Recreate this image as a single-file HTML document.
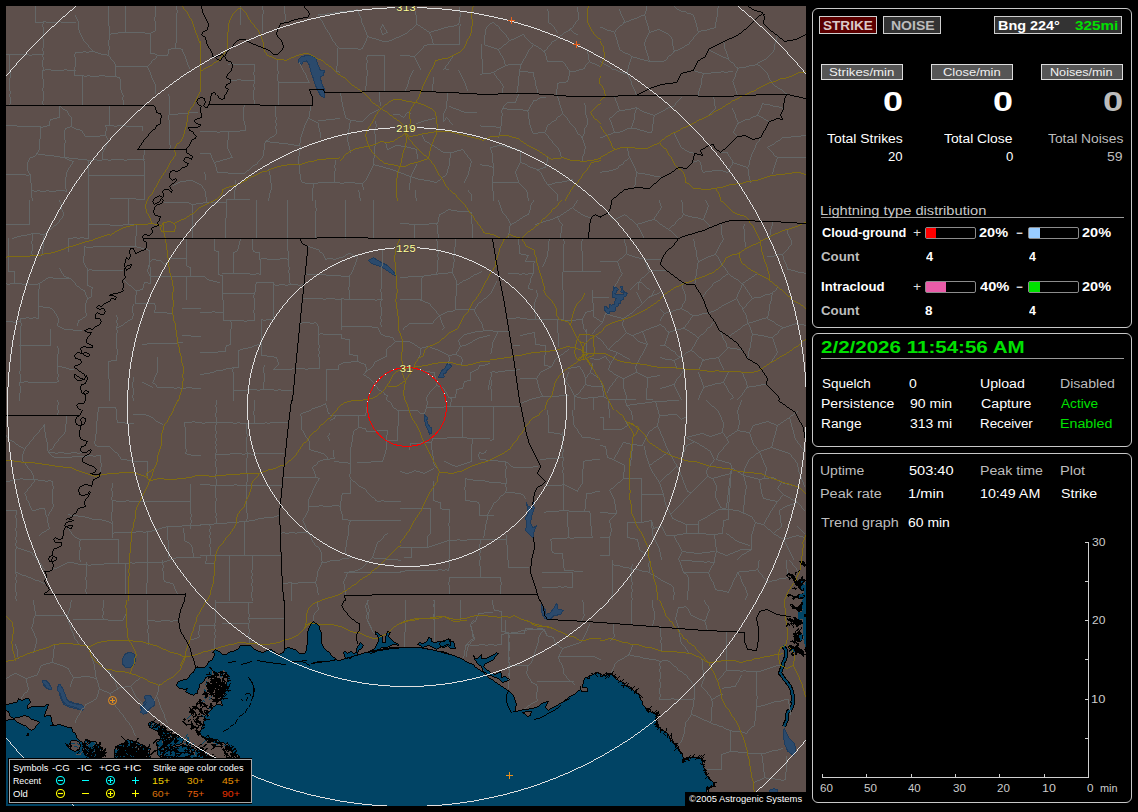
<!DOCTYPE html>
<html><head><meta charset="utf-8"><title>Lightning</title>
<style>
html,body{margin:0;padding:0;background:#000;}
body{width:1138px;height:812px;overflow:hidden;position:relative;font-family:"Liberation Sans",sans-serif;}
#map{position:absolute;left:6px;top:6px;width:800px;height:800px;overflow:hidden;background:#5d4f4b;}
#map svg{position:absolute;left:-6px;top:-6px;}

.t{position:absolute;white-space:nowrap;transform-origin:0 0;display:block;}
.pn{position:absolute;border:1px solid #c8c8c8;border-radius:6px;box-sizing:border-box;}
.bx{position:absolute;box-sizing:border-box;border:1px solid #cfcfcf;}
.bar{position:absolute;box-sizing:border-box;border:1px solid #8c8c8c;border-radius:2px;width:51px;height:12px;background:#000;}
.bar i{position:absolute;left:0;top:0;height:10px;display:block;}
.ln{position:absolute;height:1px;background:#9a9a9a;}

</style></head><body>
<div id="map">
<svg width="1138" height="812" viewBox="0 0 1138 812" shape-rendering="crispEdges" fill="none"><g fill="#014465"><path d="M5.9 705.7L7.6 704.4L11.7 703.8L14.6 702.3L16.6 702.1L18.9 698.8L22.2 700.4L25.4 698.4L28.5 698.8L30.4 702.1L28.4 704.6L27.2 705.9L27.9 708.4L32.1 706.6L35.6 706.7L38.4 706.7L41.7 706.8L44.7 706.7L46.1 704.8L48.5 704.6L47.1 708.7L45.3 712.2L44.9 716L47.8 715.8L50.6 715.7L51.2 718.6L51.6 721.3L53.1 724.6L50.9 725.8L55.7 725.3L59.7 724.2L62.2 725.8L65.6 726.9L68.3 727.7L71.5 727.3L72.1 731L75 733L76.2 737.6L79.5 740.2L82.5 742.8L83.6 745.7L84.7 749L85 752.3L85.5 754.7L88.4 756.6L90.9 759.1L91 762L241 762L241.1 760.3L239.8 757.9L239.2 756.2L237.8 754.7L236.3 755.3L233.4 754.5L232.4 752.5L231.2 750.2L230.2 749.4L230.1 747.2L229 744.3L227.3 742.8L225.2 744.5L223.4 742.8L220.9 742.9L218.8 740.8L216.7 739.4L214.6 739.8L211.4 738.3L209.2 738.4L206.4 738.4L202.5 737.1L201.6 735.1L200 732.9L201.6 729.8L201.2 727.9L202.2 725.1L203.1 722.1L204.5 719.2L204.4 716.5L206.1 714.6L207 713.2L209 711.6L211.9 709.6L212 707.7L214.4 706.2L215.7 705.2L217.6 704.7L219.5 705L222.7 705.4L221.8 702.6L220.1 699L222.8 697.6L223.4 695.9L224.3 693.6L224.6 690.7L226.1 688.6L227.4 687.7L227 684.4L226.2 682.6L227.6 680.1L227.3 677.1L227.9 675.1L226.5 672.3L223.9 672.1L222.4 671.7L218.8 672.9L216.4 674.2L214.4 674.5L213.5 675.2L212 676.2L208.2 676.8L205.2 677.5L204.9 680.9L203 682.4L199.1 684L199.1 686.4L198.7 689.7L197.6 690.5L197.7 693.3L195.7 693.9L193.6 695.2L191 694.8L188.3 693.3L185.2 691.7L187.5 688.4L183.3 689.4L181.6 689L179.2 688.5L177 685.3L177.8 682.3L180.8 680.4L182.8 681L184.4 679.7L186.8 679.8L188.9 677.8L189.3 675.1L191.8 673.6L193.7 672.5L194.6 669.5L197 667.8L197.8 666.8L197.1 667.2L200.6 667.5L204 667.7L206.6 665L208.5 661.9L211.4 660.1L213.4 657.6L214.9 653.8L213 652.1L215.1 649.8L219.3 651.2L221.1 653.7L223.8 654L226.2 654.3L227.8 653.8L230.2 651.8L233.2 651.1L235.1 650.2L238 648.9L240.3 645.9L243.5 645.9L246.3 645.3L248.4 645.1L250.8 645L253.6 648.2L255.9 649.9L258.9 651.2L263.4 652.7L266.8 650.7L271.1 649.6L275.4 652.2L277.8 653.7L279.7 654.3L284 652.1L285 648.3L289.1 647.9L291.7 648.7L295.1 649.9L296.5 650.9L298.6 653L300.9 653.3L304.2 653.7L306.1 650.5L306.8 646.6L308 643.9L307.5 641.3L307.5 638L307 635.3L307.4 631.9L308.7 629.5L309.2 626.2L311 624.4L313 621.5L317.2 624.1L319.7 626.3L319.7 629.4L320.1 631.6L321.4 633.9L321.5 637.4L321.6 639.8L321.3 642.1L322.3 645.2L323.5 647.4L326.8 650.4L330 652.7L331.6 655.4L335.1 658.2L334.5 660L339.3 660.1L342.8 659.3L346.1 658.5L349.3 657.7L352.8 656.6L356 655.8L359.2 654.7L362.8 653.6L366.1 652.8L369.4 652L372.3 651.6L375.9 650.7L378.9 649.9L382.4 649.5L385.9 649.1L388.8 648.7L392.2 648.3L395.8 647.9L398.9 647.7L402.3 647.7L405.2 647.1L408.8 647.2L412.1 647.2L415.5 647.6L418.4 647.8L421.8 648L425.2 648.4L428.4 649.2L431.9 649.2L435.5 650.1L438.8 651.4L442.4 652L446.1 653L450 654L440 651.6L443.4 652.4L447.2 653.4L450.6 654.7L453.7 655.9L456 656.7L458.4 657.4L461 658.9L463.1 659.6L465.9 661.4L468.2 662.1L470.8 663.2L473.1 664.8L474.9 666.1L477.8 668.8L480.5 670.7L483.7 673L486.4 675.2L488.9 677.4L492.2 679.7L494.7 681.9L497.6 683.8L500.7 685.9L503.1 687.5L506.1 689.9L509.1 691.5L512.8 694.2L513.7 696.8L514.9 698.7L515.2 701.7L516.1 704.4L515.9 707L515.4 710.1L513.2 711.4L516.9 711L520.1 710.1L523.3 709.8L527.3 709.7L530.2 708.8L532.7 708.7L535.2 707.8L538.2 706.9L540.9 704.6L543.7 702L548.2 701.1L546.5 704.3L545.5 707.5L548.5 710.3L552.3 707.8L555.2 706.4L558.5 704.1L562.1 702L564.2 700.8L566.6 699.2L569 697.3L572.1 695.3L575.3 693.3L577.8 691.4L580.6 689.6L580 686.3L580.7 689.5L581.5 691.9L583.9 691.6L587.5 691.9L587.7 688.2L585.2 687.8L582.6 687.7L582.8 684.7L583 682.4L583.8 680.9L585.8 678L587.6 677.1L589.3 676L591.7 675.3L593.6 674.7L595.8 673.7L598.2 672.6L599.3 673.5L602.2 675.5L604.3 675.5L607.7 674.8L610.5 674.2L612.4 675L614.1 676.8L616 678.7L618.4 680.3L620.2 681.1L621 682L623.4 683.7L624.8 685.5L627.3 686.6L628.9 687L630.7 688.1L632.9 689.2L634.7 691.3L637 692.2L638 693.8L639.8 697.2L640.7 699.5L641.5 700.5L642.7 702.9L642.7 705L644.1 706.6L645.6 708.2L647.1 709.7L648.5 710.1L650.5 711.3L652.8 712.3L654.9 713.7L657.5 714.4L656.1 717.4L656.3 720.9L657.2 722.6L658 724.2L658.3 726.4L660 727.5L661.7 729.7L663.4 730.8L664 732.6L666 732.8L667.8 734.6L669 736.2L669.9 738.7L671.6 740.1L672.9 742.4L674.5 743.8L675.5 745.3L676.6 746.7L678.2 748.3L679.8 750.6L681.2 752.3L682.3 755.2L683 758.8L683.3 760.7L682.7 762.8L683.7 760.8L685.8 758.4L687.3 757.9L690.9 757.6L693.9 757.9L696 757L698.8 758.4L701.1 758.8L702.1 760.3L702.3 762.8L702.9 763.9L703.8 766.3L704 769.7L705.3 770.9L705.2 773.2L706.6 775.2L708.3 776.9L709.8 778.4L710.9 779.9L712.6 781.5L714.4 782.6L713 785.2L712.8 786.8L710.1 787.7L707.9 787.6L707.5 789.8L705.9 792.3L706.1 793.9L706.7 796.6L706.5 798.2L706.5 800.9L706.6 802.9L706.5 805.7L706.2 807.6L706 820L0 820L0 705.7Z"/><path d="M114.7 757.8L114.3 754.6L114.1 750.9L115.6 747.1L119.8 744.8L122.7 743.3L125.3 742.1L127.6 739.9L131.5 741L134.1 743.5L136.7 744.7L139.6 745.8L142.6 746.2L144.6 747.6L147.5 747.6L150.4 748.9L149.7 751.6L149.7 754.5L150.1 757.5L147.6 757.4L144.7 758L142.3 757.7L140 757.7L137.3 757.4L135 758.1L132.7 757.9L129.7 757.7L127.4 757.9L124.5 757.6L122.1 757.8L120 757.8L116.8 758Z"/><path d="M84.4 741.9L87.4 739.6L91.1 741.7L95.3 741.6L97.8 744.7L100.5 748.9L103.9 750.4L105.6 753.6L103.3 755.2L101.8 757.4L99.1 756.6L96.6 756.5L92 757.7L89.6 756.8L87 756.3L84.4 754.2L82.5 749.8L83.3 746.3Z"/><path d="M130 741.3L132.5 740.3L136.5 742.8L139.2 743.8L142.6 745.1L146.4 748L147.6 752.1L146.7 755.3L145.9 757.8L143.2 757.8L140.8 758.3L138 757.7L135.2 758.4L132.4 758.1L129.9 758.1L129.9 755.3L130 752.5L130.3 749.7L129.7 746.5L130.4 744.1Z"/><path d="M149 723.7L151.6 722L156 723.5L159.4 725.1L162.2 728.1L166.4 730.3L170.6 733.2L173.1 734.7L176.3 735.9L179 737L181.8 737.7L184.1 739.9L181.2 743L177.5 744.4L174.8 745.6L171.8 746.4L169.3 749.1L165.3 752.2L162.9 754.5L160.8 755.9L160.1 757.7L157 754.9L157.4 751.5L157.8 748.1L157.1 745.6L156.9 742.3L159.7 740.2L161.3 735.8L159.1 733.6L157.2 731.7L152.7 728.8L150 727.2Z"/><path d="M161.2 758L162.5 755.8L164.2 753.5L166.6 751.5L169 749.4L172.8 748.3L175.7 746.6L178.5 746.5L181.6 745.5L184.6 745.7L187 746.1L189.3 746.3L192.4 747.7L194.8 749.2L197.4 750.8L200.4 752.4L203.2 753.6L205.9 755L208.6 755.7L211.7 757.3L214.3 758.1L211.3 757.8L208.8 757.6L206.7 757.9L204.2 757.9L201.8 758.2L198.5 757.7L196.7 757.9L194.3 757.9L191 758.1L189.1 757.8L186 757.8L184.2 758.2L181 757.8L178.5 757.6L176.5 757.7L173.8 757.9L171 758.2L168.4 758.1L165.9 757.9L163.5 757.8Z"/><path d="M343.5 652.1L345.8 651L347.6 653.8L351.1 651L353 653.5L356.3 652.5L356.8 649L358.2 646L360.4 642.6L363.6 645.1L362.2 647.2L359 650.1L357.8 654L355.3 655.7L352.8 656.9L350.1 658.3L347.6 657.9L345.1 658.4L344.1 655.4Z"/><path d="M368.5 651.4L371.5 650.4L374.1 648.4L375.9 646.1L377.8 643.2L378.2 640.8L378.9 638.2L377.1 635.9L376 634.2L375.8 631.8L379 633.3L382.6 636.3L382.5 639.3L382.8 642.1L385.2 642.7L385.4 640L385.5 636.6L386.6 634.4L387.7 631.6L390.4 632L388.7 636.8L391.2 640L394.6 642.5L397.8 643.3L398.3 645.1L395.1 644.7L392.1 644.7L389.8 646.2L386.8 647.1L384.6 647.9L382 647.9L379.1 649.8L376.5 651.1L373.5 652.4L370.8 653.3Z"/><path d="M417.3 644.2L420 642.4L423.6 643.3L426.7 641.7L428.6 637.9L431.4 638.8L431.3 642L435.8 642.7L440 641.9L442.3 641.3L444.6 640.5L447.8 639.6L450.2 639.6L450.4 641.9L450 645.1L447.6 645L444.7 645.8L442.3 646.5L439.4 647L436 649.1L432.1 647L428.8 645.7L425.8 646.5L422.5 647L420.2 645.3Z"/><path d="M473.7 655.1L475.5 658.4L477.9 658.1L481.2 654.1L482 658.2L486.1 658.9L490.7 657L494.2 654.4L496.2 652L498.7 653.4L495.9 656.5L493.2 659.9L489.1 661.8L485.5 663.4L483.7 666.4L486.8 669.5L488.4 670.4L490.9 672.4L492.7 673.3L495.8 674.3L497.8 673.3L500.6 671.8L501.3 674.6L501.5 677.5L505.9 676.9L509 679.3L505.7 681.5L502.3 682.1L498.2 678.8L494.2 677.7L491.8 675.9L489 675.2L486.8 673.2L484 671.2L482.9 669.3L481.2 666.9L479.3 665.2L477.9 663.1L475.2 660.5L474.1 658.3Z"/><path d="M440 641.1L444.2 641.8L448.1 638.3L449.8 641.2L453.1 641.1L454.2 645.5L455.1 648.7L450.9 648.4L447.2 645.6L443.2 647.8L440.1 646.8L439.7 643.5Z"/></g><g fill="#5d4f4b"><path d="M5.9 710.6L8.5 712L9.8 715.3L13.3 718.2L16.5 717.8L19.5 717.9L21.9 716.7L24 715.3L28.5 716.8L30.7 718.4L32.8 719.2L36.5 720.8L39.7 722L36.6 725.4L34.5 728L31 730.2L28.5 728.1L26.3 727L24.1 725.8L21.9 724.6L17.5 722.7L14.8 720L10.2 719.2L5.6 720L6 717.2L5.8 713.7Z"/><path d="M27 733.4L28.3 733.3L28 735.7L26.6 735.4Z"/><path d="M65.9 743.3L68.4 745.2L70.4 741.9L72.4 740.1L76.3 740.1L78.7 741.8L80.9 745.6L79.3 749.7L74.7 751.5L70.3 749.5L67.5 746.7Z"/><path d="M523 712.1L527.2 711.3L531.5 711.9L530.2 715.9L527.3 716L525.1 714.1Z"/></g><path fill="#014465" d="M223 673h1v1h-1zM221 674h1v1h-1zM220 676h2v1h-2zM206 681h1v1h-1zM206 683h1v1h-1zM205 684h1v1h-1zM204 689h1v1h-1zM218 689h1v1h-1zM204 690h2v1h-2zM205 691h2v1h-2zM211 696h2v1h-2zM204 697h1v1h-1zM209 697h1v1h-1zM205 698h1v1h-1zM210 698h1v1h-1zM209 699h1v1h-1zM203 700h1v1h-1zM202 701h1v1h-1zM204 701h1v1h-1zM207 707h1v1h-1zM209 708h2v1h-2zM212 709h1v1h-1zM192 714h1v1h-1zM190 715h1v1h-1zM202 715h1v1h-1zM189 716h1v1h-1zM203 716h1v1h-1zM188 717h1v1h-1zM204 717h1v1h-1zM187 718h1v1h-1zM187 734h1v1h-1zM186 735h1v1h-1zM186 736h1v1h-1zM185 737h1v1h-1zM187 737h2v1h-2zM187 738h2v1h-2zM212 738h1v1h-1zM67 739h1v1h-1zM188 739h1v1h-1zM214 739h1v1h-1zM68 740h1v1h-1zM187 740h2v1h-2zM205 740h1v1h-1zM69 741h1v1h-1zM188 741h2v1h-2zM204 741h1v1h-1zM214 741h1v1h-1zM217 741h3v1h-3zM69 742h1v1h-1zM184 742h2v1h-2zM188 742h1v1h-1zM203 742h1v1h-1zM213 742h2v1h-2zM69 743h1v1h-1zM71 743h4v1h-4zM77 743h1v1h-1zM81 743h1v1h-1zM188 743h1v1h-1zM193 743h1v1h-1zM202 743h1v1h-1zM216 743h1v1h-1zM230 743h1v1h-1zM78 744h4v1h-4zM186 744h1v1h-1zM192 744h2v1h-2zM216 744h2v1h-2zM229 744h1v1h-1zM232 744h1v1h-1zM186 745h1v1h-1zM190 745h1v1h-1zM224 745h2v1h-2zM228 745h1v1h-1zM232 745h1v1h-1zM74 746h3v1h-3zM77 747h1v1h-1zM184 747h3v1h-3zM186 748h1v1h-1zM232 748h1v1h-1zM232 749h1v1h-1zM195 750h1v1h-1zM198 750h1v1h-1zM201 750h1v1h-1zM195 751h1v1h-1zM205 752h2v1h-2zM233 752h1v1h-1zM236 752h2v1h-2zM206 753h1v1h-1zM206 754h1v1h-1zM203 759h1v1h-1zM206 759h1v1h-1zM204 760h1v1h-1zM207 760h1v1h-1zM203 761h1v1h-1z"/><path fill="#5d4f4b" d="M223 670h1v1h-1zM212 671h1v1h-1zM222 671h3v1h-3zM212 672h1v1h-1zM219 672h1v1h-1zM223 672h1v1h-1zM212 673h1v1h-1zM212 674h2v1h-2zM215 676h1v1h-1zM221 677h1v1h-1zM221 678h1v1h-1zM224 678h1v1h-1zM224 679h2v1h-2zM209 682h1v1h-1zM210 683h1v1h-1zM219 685h1v1h-1zM218 689h1v1h-1zM206 691h1v1h-1zM209 693h1v1h-1zM208 695h1v1h-1zM212 696h1v1h-1zM207 697h1v1h-1zM213 697h1v1h-1zM208 698h1v1h-1zM199 704h1v1h-1zM201 706h1v1h-1zM207 707h1v1h-1zM207 709h1v1h-1zM192 714h1v1h-1zM208 714h1v1h-1zM193 715h1v1h-1zM209 715h1v1h-1zM154 721h1v1h-1zM153 722h1v1h-1zM153 723h1v1h-1zM152 724h2v1h-2zM159 725h1v1h-1zM152 726h1v1h-1zM152 728h1v1h-1zM152 729h1v1h-1zM174 730h1v1h-1zM172 732h1v1h-1zM171 733h1v1h-1zM170 736h2v1h-2zM177 736h1v1h-1zM168 737h2v1h-2zM174 738h1v1h-1zM92 740h1v1h-1zM90 741h4v1h-4zM123 741h1v1h-1zM138 741h1v1h-1zM162 741h1v1h-1zM86 742h1v1h-1zM94 742h1v1h-1zM162 742h1v1h-1zM180 742h1v1h-1zM87 743h1v1h-1zM95 743h1v1h-1zM136 743h1v1h-1zM180 743h2v1h-2zM88 744h1v1h-1zM130 744h1v1h-1zM180 744h2v1h-2zM87 745h1v1h-1zM93 745h1v1h-1zM130 745h1v1h-1zM180 745h2v1h-2zM136 746h1v1h-1zM140 746h1v1h-1zM156 746h1v1h-1zM192 746h1v1h-1zM83 747h1v1h-1zM115 747h1v1h-1zM135 747h1v1h-1zM155 747h1v1h-1zM157 747h3v1h-3zM165 747h1v1h-1zM84 748h2v1h-2zM116 748h1v1h-1zM138 748h1v1h-1zM153 748h2v1h-2zM194 748h1v1h-1zM83 749h1v1h-1zM101 749h1v1h-1zM116 749h1v1h-1zM138 749h1v1h-1zM151 749h3v1h-3zM163 749h1v1h-1zM194 749h1v1h-1zM100 750h1v1h-1zM102 750h1v1h-1zM148 750h1v1h-1zM157 750h1v1h-1zM190 750h1v1h-1zM195 750h1v1h-1zM82 751h1v1h-1zM94 751h1v1h-1zM149 751h1v1h-1zM156 751h1v1h-1zM190 751h1v1h-1zM81 752h1v1h-1zM148 752h2v1h-2zM193 752h2v1h-2zM80 753h1v1h-1zM85 753h1v1h-1zM87 753h1v1h-1zM194 753h1v1h-1zM76 754h5v1h-5zM84 754h2v1h-2zM161 754h1v1h-1zM194 754h1v1h-1zM150 755h1v1h-1zM160 755h1v1h-1zM195 755h1v1h-1zM89 756h1v1h-1zM146 756h1v1h-1zM159 756h1v1h-1zM89 757h1v1h-1zM102 757h1v1h-1zM104 757h1v1h-1zM130 757h1v1h-1zM148 757h1v1h-1zM158 757h1v1h-1zM89 758h1v1h-1zM105 758h1v1h-1zM89 759h1v1h-1zM91 759h1v1h-1zM106 759h1v1h-1zM91 760h1v1h-1zM151 760h1v1h-1zM89 761h1v1h-1zM91 761h1v1h-1zM152 761h1v1h-1z"/><path fill="#000" d="M799.2 561.1L801.9 560.3L803.5 561L804.8 561.9L805.4 563.3L806.2 565.6L804.8 567.2L803.3 565.4L801.4 565L800.2 562.7ZM789 575.3L790.7 574.4L792.7 574.5L794.4 575.1L795 577.5L796 578.8L797.1 581L798.1 580.2L800.5 578.6L801.6 576.5L802.1 574.9L802.8 577.2L803.5 578.7L803.9 580.3L803.4 581.5L803.3 583.3L803.6 584.7L804.9 586.3L805.2 588.1L804.2 590.3L801.6 591.1L800.8 590.6L798.8 588.4L798 586.7L795.8 585.3L794.9 583.5L794.2 582.5L792.9 580.6L793.2 579.4L791.6 578.1L790.3 576ZM786.3 595L788.5 594.1L790 593.9L792.4 595.2L794.1 595.8L796.3 596.1L797.8 594.3L800.3 594.1L800.9 594L803.4 592.4L804.3 594.6L805.2 595.7L804 596.9L803.1 598.7L800.4 599.2L799.8 599.6L797.2 598.2L795.8 598.1L793 597L791.1 596.3L790.2 596.2L788.2 597ZM791 606.5L792 605.7L793.8 605.1L795.2 606.5L797.7 607.2L798.6 606.2L800.9 603.8L801.3 602.3L803.1 601.5L804.6 602.4L804.7 604L803.7 604.6L803.8 606.4L803.5 607.4L802.3 609L802.2 610.4L800.1 611.2L798.5 612.2L797.7 610.7L796 609.5L795.3 609.1L792.7 609.1ZM786.3 618.1L788.4 618.7L790.5 618.3L792.7 619L794.4 620.3L795 618.6L795.6 616.7L798 619.3L800 619.2L801.7 620.3L802.3 621.4L803.1 623.5L801 624L800.2 624.9L798.3 626.5L796.4 626.5L795.5 625L794.6 623.4L793.3 622.4L791.4 622L789.6 621.4L788.1 620.4ZM792.4 633.6L794.3 632.9L795.2 632.1L797 633.8L797.7 635.5L797.9 633.4L799.5 631.2L800 631.6L801.8 633.4L802.1 634.9L803.4 636.8L803.1 638.3L802.5 639.4L802.3 641.1L800.7 641.9L799.3 642.6L798.3 642L796.5 641.1L795.5 639.1L794.2 638.2L793.4 636.3L793.7 635.6ZM787.6 644.5L789.9 644.9L792 645.5L793.6 646.1L794.5 647L795.7 646.2L796.6 645.4L798.5 646.8L800.1 649L800.6 649L802.4 649.9L803.3 651.1L804.2 652L803.8 654.9L803.3 656.2L802.3 655.4L800.3 654.4L799.3 653.8L797.2 652.5L797 650.6L795.5 650.6L793.4 650.8L791.6 649.8L789.7 648.7L788.5 647.9L788.3 646.1Z"/><path fill="#014465" d="M807.3 581.4L805.2 582.5L804.2 586.2L803.7 588.2L803.7 590.6L803.5 593.2L802.7 595.4L802.6 596.8L802.8 599.2L802.3 601.4L802.9 603.1L802.5 605.1L802 607.4L802.7 609.8L802 612.1L802.1 614.4L802.4 616.6L802.4 618.6L802.7 620.3L802.7 622.8L802.9 624.8L802.5 627.4L802.7 629.5L802.9 631.5L802.9 633.9L803.4 635.4L803.9 637.8L803.5 639.5L804.1 641.5L804.5 643.6L804.8 645.9L805.8 648.2L807.7 648.2L807.3 646.7L807.3 644.8L807.7 642.1L807.2 640.3L807.5 638L807.4 636.7L806.9 634.3L807.5 632.6L807.4 630.1L807 628.5L807 626.2L807 624.4L807.2 622.1L806.9 620.5L807.4 617.7L807.1 616L807.7 614.3L807.4 612.3L807.4 609.7L806.9 607.9L807.6 605.8L807.3 603.7L807.4 601.7L807.5 599.7L807.2 597.3L807.5 596L807.5 593.6L807.5 591.4L807.2 589.8L807.2 587.2L807.2 585.3L807.5 583.3ZM800.5 581.4L803.4 580.9L803.2 583L803.9 585.5L803.6 587.6L802.7 590.1L800.5 588.7L801 586.6L801.2 584.5ZM799.2 594.6L802.8 593.7L803.4 596.6L799.5 597.6ZM797.8 612.6L799.8 612.2L801.6 611.7L802.1 614.3L802.4 616.6L802.5 618.4L798.9 620.3L797.7 616.7L797.9 614.9ZM799.2 635L801.9 634.2L802.4 637L802.5 639.4L800 641.8L799.7 639.2L799.3 637.1ZM790.3 648.6L792.6 648.8L795.2 648.4L796.4 651.3L794.7 652.4L792.1 652.7L791.5 650.8Z"/><g fill="#2b4a6c" stroke="#1e3c5d" stroke-width="1" stroke-linejoin="round"><path d="M298.5 59.9L301 57.1L305.4 55.7L310.8 55.4L315.8 57.6L317.7 64.5L320.2 70L324.6 70.4L323.2 75.4L320.2 76.8L321.7 83.7L324.6 89.7L324.4 97.3L321.2 96.6L318.2 91.1L315.3 85L313.3 78.3L310.8 71.4L309.1 64.5L306.4 60.8L303.4 61.6L301.5 64.5L299 62.8Z"/><path d="M368.7 260.3L373.6 257.9L379.8 261.6L387.2 265.3L393.3 271.4L397 276.4L392.1 273.9L384.7 269L377.3 265.3L371.2 263.5Z"/><path d="M613.2 286L614.7 286L614.7 288.2L616.6 287.5L618.8 289.7L616.2 290.4L616.6 292.6L614.7 293.4L615.8 294.9L622.8 294.9L623.9 292.6L620.6 291.9L621.4 290.1L620.6 286L622.1 286L622.8 289.7L624.7 292.3L627.6 293.4L625.8 296.3L623.6 297.1L623.9 299.3L620.2 300.8L621 303L618.8 303.7L618.4 305.9L615.4 307.4L615.8 310.4L613.2 311.8L609.9 311.5L609.5 313.3L607.3 313.7L605.8 311.5L604 308.9L604 306.3L606.2 306.7L607.7 308.5L609.5 307.8L609.2 304.1L611 305.2L614 304.8L614.7 301.5L616.2 298.2L614.3 297.8L612.1 297.1L612.5 293.4L613.2 289.7Z"/><path d="M526.1 502.2L528.1 505.9L531.8 508.4L533 502.2L534.2 508.4L531.8 515.8L530.5 523.2L533 528.1L536.7 525.6L534.2 530.5L533 537.9L529.3 534.2L525.6 530.5L526.8 523.2L525.6 518.2L528.1 513.3L527.6 508.4Z"/><path d="M122.7 658.7L124.8 654.3L129.2 652.2L133.7 653.5L135.8 658.7L134.5 664L130.5 667.4L125.8 667.9L122.7 664Z"/><path d="M42.3 680.9L45.7 680.4L49.6 683.6L51.2 688.3L48.3 689.3L44.4 686.7Z"/><path d="M58 684.9L61.4 688.8L64 695.3L67.9 700.5L74.4 703.1L80.9 704.4L84.1 707L83 710.2L77 709.1L69.2 707L64 704.4L60.6 697.9L58.7 691.4Z"/><path d="M144.9 696.6L150.1 695.3L153.5 700.5L154 705.7L150.1 708.4L146.2 713.6L142.3 712.3L140.5 707L143.6 703.1L146.2 700.5Z"/><path d="M42.2 680.7L44.2 680L46.8 681.3L48.8 684L50.7 686.6L51.7 689L49.4 689.5L46.8 687.9L44.8 685.3L43.2 683.3Z"/><path d="M58.7 684.6L60 684L61.9 687.2L63.3 689.9L64.6 693.2L65.9 697.1L67.2 700.4L69.9 702.4L73.8 703.5L77.8 704.4L81.7 705L84.4 707L83 710.1L79.7 709.7L76.4 707.7L72.5 706.4L68.5 705.7L65.2 703.7L62.6 701.1L61.3 697.1L60 693.2L58 691.2L57.3 688.6Z"/><path d="M144.2 696.6L146.9 695L150.3 695.5L152.4 698.6L154.4 700.7L155.1 704L153 706.7L150.3 707.4L148.3 710.1L146.3 713.5L143.6 714.2L140.8 712.2L141.5 708.1L144.2 705.4L146.3 702.7L145.6 700Z"/><path d="M541 603.1L544.9 609.1L546.2 614.4L550.1 613.1L554 607.8L556.7 603.1L558 609.1L563.2 610.4L560.6 614.4L554 615.7L550.1 619.6L544.9 618.8L542.3 614.4L541 609.1Z"/><path d="M784.1 728L786.7 733.2L789.3 738.4L794.6 743.6L795.9 751.5L793.3 755.4L788 751.5L784.9 744.9L783.3 735.8Z"/><path d="M769.8 790.1L773.7 788.6L777.6 789.6L778.1 792L769.8 792Z"/><path d="M438.6 377.3L440.1 373.6L442.3 369.9L444.5 368.7L446.7 364.7L448.2 363.2L449.7 364.7L451.9 365.5L449.7 368.7L446.7 370.6L446 372.8L443 374.3L444.5 377L440.8 377.6Z"/><path d="M424.3 413.5L426 416.4L427.8 417.2L426.8 420.1L428.2 424.5L430.5 427.5L431.9 428.2L431.6 433.4L429.7 434.2L428.7 431.9L427.5 429L426 426L424.8 421.6L424.5 417.2Z"/></g><path stroke="#000" stroke-width="4" d="M782.8 645.7L784.7 648.2L786.4 651.3L785.6 654.2L785.8 657L784.6 660.2L783.2 662.6L783 665.2L782.2 667.6L780.8 670.1L780.2 673.5L782.3 676L784 678.6L785.7 680.8L788.2 683.8L789.3 685.3L790.4 687.6L791.7 690.4L792.1 693.5L793.2 695.8L793.1 699.2L792.4 701.8L792.8 704.1L792.1 706.7L790.1 710.1L787.7 711.8L787.2 715L786.7 717.1L786.7 720.6L785.3 723.3L784.1 726.7"/><path stroke="#014465" stroke-width="2" d="M782.8 645.7L784.7 648.2L786.4 651.3L785.6 654.2L785.8 657L784.6 660.2L783.2 662.6L783 665.2L782.2 667.6L780.8 670.1L780.2 673.5L782.3 676L784 678.6L785.7 680.8L788.2 683.8L789.3 685.3L790.4 687.6L791.7 690.4L792.1 693.5L793.2 695.8L793.1 699.2L792.4 701.8L792.8 704.1L792.1 706.7L790.1 710.1L787.7 711.8L787.2 715L786.7 717.1L786.7 720.6L785.3 723.3L784.1 726.7"/><path transform="translate(0 .5)" stroke="#646767" d="M0 0m356 9h2m319 0h2m-330 1h7m323 0h2m-342 1h10m332 0h5m-353 1h6m-12 1h6m354 0h4m-373 1h9m364 0h2m-52 1h4m-6 1h2m-4 1h2m-5 1h3m-6 1h3m-5 1h2m-588 1h3m12 0h3m565 0h3m-594 1h9m2 0h12m3 0h15m416 0h2m129 0h3m-136 1h2m57 0h2m-135 1h2m39 0h2m-77 1h2m34 0h2m34 0h3m39 0h2m122 0h2m-174 1h6m-33 1h2m21 0h4m152 0h3m111 0h2m-275 1h3m126 0h2m31 0h2m105 0h4m-304 1h2m12 0h2m12 0h3m128 0h2m34 0h2m50 0h3m47 0h3m-276 1h4m130 0h2m37 0h4m43 0h3m3 0h2m39 0h6m-554 1h2m272 0h2m2 0h3m132 0h2m43 0h3m37 0h3m8 0h2m34 0h3m-583 1h27m6 0h2m233 0h2m41 0h2m133 0h2m83 0h2m13 0h2m-555 1h7m27 0h6m233 0h2m19 0h2m167 0h2m90 0h2m-559 1h2m271 0h2m19 0h2m117 0h2m52 0h2m-177 1h2m117 0h2m38 0h2m-195 1h2m30 0h2m117 0h2m-151 1h3m24 0h3m117 0h2m-146 1h4m18 0h2m118 0h2m-140 1h3m13 0h2m117 0h3m-135 1h3m7 0h3m117 0h2m43 0h2m-174 1h7m163 0h2m-23 2h2m-106 1h33m44 0h2m181 0h2m-265 1h3m58 0h3m46 0h2m149 0h2m-199 1h3m45 0h2m-47 1h3m188 0h2m-513 1h10m158 0h19m3 0h2m131 0h3m2 0h2m38 0h2m139 0h2m-514 1h3m10 0h2m175 0h3m136 0h2m179 0h2m-136 1h2m74 0h2m52 0h4m31 0h2m-628 1h3m3 0h6m448 0h2m128 0h2m36 0h2m-638 1h8m3 0h3m6 0h3m525 0h2m88 0h2m-617 1h3m49 0h5m470 0h3m87 0h2m-711 1h23m3 0h12m57 0h6m48 0h2m471 0h2m87 0h2m-690 1h3m75 0h2m48 0h11m199 0h18m15 0h10m259 0h2m48 0h2m-311 1h5m216 0h2m88 0h2m-90 1h4m86 0h3m-89 1h3m86 0h3m-576 1h2m485 0h4m120 0h2m-122 1h4m16 0h2m96 0h2m-217 1h16m85 0h16m96 0h2m-172 1h2m9 0h2m128 0h2m25 0h2m-530 1h3m359 0h3m-367 1h2m3 0h22m253 0h14m73 0h2m7 0h2m149 0h3m-253 1h3m89 0h2m7 0h2m141 0h6m3 0h2m-645 1h33m355 0h2m94 0h2m7 0h2m136 0h3m-248 1h2m233 0h2m1 0h7m-302 1h2m53 0h2m82 0h2m152 0h2m-694 1h6m13 0h3m379 0h3m48 0h2m80 0h4m29 0h4m-574 1h3m6 0h13m3 0h9m500 0h3m37 0h2m75 0h2m-359 1h3m155 0h2m23 0h9m41 0h7m42 0h2m75 0h3m23 0h3m4 0h5m-242 1h3m34 0h6m86 0h3m75 0h4m9 0h10m3 0h4m-246 1h9m132 0h5m74 0h9m-231 1h2m-408 1h10m3 0h3m9 0h6m-21 1h3m3 0h9m6 0h12m0 1h3m117 2h4m-12 1h8m4 0h14m311 1h2m-290 1h32m249 0h7m-9 1h2m216 3h2m1 2h2m0 1h2m3 4h2m-247 4h6m-8 1h2m-7 2h4m-30 2h9m246 1h2m0 1h6m0 1h3m-714 1h2m388 0h2m219 0h4m99 0h6m-328 1h2m182 0h2m31 0h2m109 0h3m-329 1h3m46 0h5m124 0h4m1 0h3m27 0h2m114 0h2m-721 1h2m391 0h3m48 0h16m102 0h6m-566 1h2m309 0h2m81 0h2m62 0h6m90 0h6m15 0h2m21 0h2m-291 1h2m85 0h3m153 0h2m23 0h2m17 0h2m-475 1h10m174 0h2m33 0h2m55 0h13m167 0h3m12 0h2m-483 1h10m182 0h2m37 0h2m236 0h3m7 0h2m-490 1h9m215 0h7m250 0h3m2 0h2m-4 1h2m101 0h3m-358 1h2m155 0h2m193 0h3m3 0h2m-704 1h3m550 0h2m139 0h2m8 0h2m-710 1h4m251 0h2m25 0h5m6 0h2m84 0h3m-385 1h3m257 0h2m14 0h9m13 0h2m78 0h4m313 0h5m14 0h2m-454 1h2m4 0h8m24 0h6m68 0h4m15 0h2m109 0h2m187 0h2m21 0h2m-454 1h2m40 0h7m58 0h3m128 0h2m187 0h2m25 0h2m-454 1h2m100 0h3m317 0h3m-325 1h2m319 0h2m-191 1h2m-544 1h11m30 0h3m55 0h9m3 0h9m-109 1h24m2 0h4m23 0h2m42 0h3m9 0h17m338 0h15m-456 1h3m24 0h3m2 0h2m422 0h5m-436 1h2m7 0h2m551 0h10m-561 1h4m545 0h2m10 0h3m-560 1h2m158 0h6m377 0h2m15 0h4m-444 1h17m3 0h20m380 0h3m21 0h3m-430 1h3m318 0h7m68 0h7m27 0h5m-119 1h5m73 0h2m-35 1h2m28 0h3m-511 1h6m499 0h3m193 0h5m-721 1h15m172 0h2m307 0h2m20 0h2m186 0h10m-531 1h2m309 0h2m17 0h3m179 0h9m-525 3h2m510 0h2m-515 1h5m155 0h2m349 0h2m-508 1h9m148 0h2m-150 1h9m0 1h6m136 0h2m340 0h2m-480 1h6m95 0h6m31 0h2m63 0h6m267 0h2m-379 1h2m6 0h6m86 0h4m6 0h4m261 0h2m-379 1h2m14 0h4m24 0h2m53 0h3m14 0h3m-121 1h2m20 0h4m95 0h6m166 0h2m-297 1h2m26 0h2m21 0h2m21 0h2m53 0h3m-62 1h4m58 0h2m164 0h2m-246 1h2m11 0h3m230 0h2m-246 1h11m235 0h4m27 0h8m-692 1h2m162 0h11m482 0h2m-657 1h7m0 1h9m-21 1h2m19 0h6m715 0h2m-747 1h3m27 0h9m161 0h3m544 0h29m-741 1h2m2 0h9m149 0h3m-163 1h2m9 0h9m6 0h4m5 0h6m3 0h13m3 0h18m78 0h4m-158 1h3m15 0h6m4 0h5m6 0h3m13 0h3m93 0h3m402 0h2m70 0h2m-627 1h2m142 0h4m474 0h3m-483 1h2m304 0h2m170 0h2m38 0h2m-212 1h3m209 0h3m-482 1h2m116 0h2m105 0h2m43 0h2m94 0h2m114 0h3m-487 1h2m120 0h4m103 0h7m130 0h2m119 0h3m-364 1h4m106 0h3m36 0h2m213 0h3m-363 1h3m106 0h2m36 0h3m10 0h3m200 0h2m-362 1h4m143 0h3m4 0h3m73 0h2m-228 1h3m143 0h4m73 0h3m-369 1h2m144 0h3m141 0h2m70 0h4m99 0h11m-327 1h2m204 0h7m96 0h7m11 0h3m-509 1h11m170 0h3m199 0h2m34 0h2m65 0h2m21 0h2m-500 1h17m156 0h3m234 0h7m-639 1h20m3 0h2m373 0h2m239 0h5m-624 1h3m59 0h57m261 0h3m241 0h4m-245 1h3m31 0h2m209 0h6m-248 1h3m245 0h2m-247 1h3m0 1h6m147 0h2m-387 1h7m231 0h6m8 0h2m127 0h4m-391 1h6m7 0h2m235 0h4m128 0h5m-389 1h2m15 0h2m105 0h3m13 0h22m4 0h11m79 0h3m55 0h27m36 0h7m-386 1h2m19 0h2m106 0h13m22 0h4m11 0h8m189 0h3m-381 1h2m23 0h2m346 0h5m-521 6h3m3 0h3m6 0h3m7 0h9m-31 1h3m3 0h6m3 0h7m9 0h2m43 7h26m0 1h9m81 0h24m-86 3h25m14 0h24m-38 1h2m5 0h7m-12 1h5m374 4h2m-124 1h3m-5 1h2m3 0h6m110 0h2m6 0h2m-120 1h13m-27 1h2m25 0h2m92 0h2m12 0h2m-139 1h2m-4 1h2m86 0h2m32 0h2m18 0h2m25 0h2m73 0h2m-160 1h2m56 0h2m37 0h2m1 0h2m58 0h3m-165 1h2m32 0h3m25 0h3m32 0h2m66 0h4m-137 1h3m30 0h3m27 0h2m72 0h6m-178 1h2m31 0h2m57 0h2m2 0h2m61 0h2m17 0h3m-151 1h3m61 0h2m14 0h2m20 0h3m46 0h3m-187 1h2m27 0h4m98 0h4m3 0h2m-114 1h3m99 0h3m-134 1h2m24 0h3m99 0h3m-245 1h9m20 0h9m74 0h2m23 0h3m98 0h4m-636 1h24m58 0h22m13 0h13m273 0h20m81 0h2m23 0h2m99 0h2m22 0h2m-608 1h2m54 0h13m549 0h2m-11 1h2m1 2h2m-619 1h2m618 1h2m-640 3h9m-13 1h4m9 0h5m-24 1h6m-10 1h4m-7 1h3m56 0h4m3 0h4m-72 1h2m54 0h5m4 0h3m4 0h5m-5 8h2m7 0h44m171 0h2m-224 1h7m44 0h4m169 0h3m-172 1h3m169 0h3m-172 1h4m168 0h3m-171 1h2m64 0h2m0 1h3m16 0h2m16 0h2m-22 1h2m20 0h5m60 0h2m26 1h3m168 0h2m-175 1h2m3 0h2m168 0h5m101 0h2m85 0h2m61 0h6m-430 1h2m171 0h3m100 0h3m79 0h3m60 0h3m-434 1h2m10 0h2m275 0h3m73 0h3m56 0h7m-435 1h4m292 0h4m67 0h2m-539 1h18m74 0h6m13 0h7m40 0h6m3 0h3m281 0h2m17 0h5m60 0h2m-554 1h4m103 0h2m6 0h13m7 0h2m36 0h2m6 0h3m308 0h18m40 0h2m-548 1h5m539 0h2m-553 1h2m374 0h10m65 0h18m80 0h2m-534 1h2m-20 3h2m-2 1h2m37 0h2m0 1h2m-102 2h3m695 0h4m-704 1h2m3 0h31m528 0h16m124 0h4m-787 1h7m548 0h38m48 0h2m144 0h3m-350 1h5m26 0h2m317 0h6m-582 1h28m6 0h3m46 0h2m131 0h10m29 0h2m29 0h11m3 0h3m3 0h6m270 0h2m-657 1h2m67 0h2m30 0h6m3 0h2m46 0h19m105 0h7m36 0h3m42 0h3m3 0h3m198 0h2m27 0h2m-608 1h2m69 0h3m103 0h15m83 0h7m-367 1h2m84 0h55m136 0h9m58 0h16m47 0h2m250 0h2m6 0h2m19 0h2m-706 1h5m13 0h3m331 0h8m234 0h2m-598 1h2m5 0h18m397 0h2m264 0h2m13 0h2m-544 1h2m257 0h2m268 0h2m-695 1h2m164 0h4m250 0h3m252 0h2m26 0h2m-535 1h4m499 0h2m-678 1h2m102 0h4m69 0h3m36 0h18m186 0h2m175 0h5m72 0h2m27 0h2m-735 1h12m4 0h3m9 0h2m108 0h3m590 0h2m-736 1h3m12 0h4m3 0h9m235 0h2m4 0h6m3 0h10m3 0h3m152 0h3m283 0h2m-657 1h2m40 0h2m144 0h4m6 0h3m10 0h3m-224 1h2m10 0h2m0 1h2m435 1h2m117 0h2m-568 1h2m57 0h3m387 0h3m-450 1h2m50 0h5m633 1h2m-553 2h33m402 0h2m111 0h3m-119 1h3m108 0h5m-119 1h3m109 0h2m-116 1h3m109 0h2m-674 1h2m501 0h17m39 0h2m104 0h7m-674 1h2m214 0h20m3 0h9m6 0h3m140 0h2m266 0h2m-431 1h3m9 0h7m2 0h31m2 0h6m17 0h22m312 0h2m-361 1h2m43 0h3m309 0h2m-311 1h2m305 0h2m-307 1h3m51 0h2m247 0h2m-595 1h20m273 0h2m296 0h2m-4 1h2m-4 1h2m-686 1h5m0 1h7m587 0h2m80 0h2m-671 1h2m130 0h19m479 0h2m60 0h2m-289 1h20m201 0h4m2 0h2m32 0h2m-265 1h2m136 0h3m79 0h3m8 0h2m28 0h2m-504 1h3m232 0h6m134 0h4m78 0h4m13 0h2m23 0h3m-560 1h13m33 0h12m3 0h9m221 0h2m138 0h2m79 0h3m40 0h2m-544 1h6m270 0h2m160 0h2m23 0h2m32 0h2m36 0h7m-268 1h2m164 0h3m80 0h2m7 0h3m-263 1h2m169 0h3m14 0h2m63 0h7m-261 1h2m173 0h4m-591 1h3m4 0h3m47 0h2m431 0h4m74 0h2m21 0h4m3 0h2m140 0h2m-748 1h6m3 0h4m3 0h3m469 0h8m4 0h7m94 0h3m138 0h4m-686 1h2m48 0h2m129 0h2m3 0h9m252 0h37m12 0h7m14 0h2m160 0h3m6 0h2m-692 1h2m48 0h2m93 0h21m3 0h8m8 0h3m297 0h13m180 0h3m11 0h2m-766 1h7m3 0h5m223 0h3m353 0h3m150 0h3m16 0h2m-761 1h3m109 0h2m175 0h8m4 0h2m433 0h4m-453 1h2m8 0h4m95 0h24m314 0h2m46 0h4m-140 1h2m84 0h2m29 0h2m14 0h3m4 0h5m-683 1h2m534 0h2m84 0h2m33 0h2m9 0h3m12 0h2m-748 1h2m59 0h2m220 0h31m33 0h2m247 0h3m5 0h2m116 0h2m4 0h3m-729 1h2m54 0h3m253 0h6m273 0h3m29 0h2m23 0h2m72 0h4m-724 1h2m585 0h2m30 0h4m96 0h2m-719 1h9m573 0h3m27 0h5m4 0h2m51 0h2m-667 1h9m401 0h10m92 0h2m57 0h2m27 0h3m11 0h2m-214 1h8m10 0h17m75 0h2m54 0h3m23 0h2m1 0h3m62 0h2m-266 1h4m57 0h3m104 0h2m27 0h2m20 0h2m-372 1h3m144 0h4m56 0h5m95 0h2m7 0h3m93 0h2m-416 1h2m3 0h19m39 0h2m81 0h3m56 0h4m102 0h2m3 0h2m57 0h2m6 0h2m49 0h6m17 0h2m-595 1h9m192 0h2m102 0h3m30 0h3m108 0h3m95 0h2m27 0h6m-573 1h10m184 0h5m93 0h4m277 0h4m-378 1h3m86 0h4m214 0h2m69 0h5m-432 1h4m132 0h2m119 0h2m-255 1h5m125 0h2m-4 1h2m-80 1h15m206 0h2m20 0h2m-462 1h5m227 0h2m58 0h2m168 0h3m-496 1h31m234 0h2m54 0h2m173 0h3m-504 1h5m82 0h2m26 0h5m204 0h2m67 0h5m106 0h2m-629 1h32m175 0h3m25 0h3m158 0h2m45 0h4m47 0h7m20 0h6m114 0h6m-414 1h2m135 0h2m35 0h4m30 0h2m-214 1h4m166 0h2m2 0h4m4 0h2m235 0h2m58 0h3m-487 1h5m172 0h2m10 0h3m295 0h7m-497 1h3m192 0h3m170 0h2m127 0h4m-503 1h2m198 0h2m170 0h3m58 0h2m17 0h2m49 0h2m-525 1h8m214 0h2m123 0h2m46 0h3m57 0h2m13 0h2m2 0h2m-494 1h18m224 0h2m172 0h2m68 0h2m-244 1h2m172 0h2m-271 1h4m93 0h2m4 0h5m104 0h2m57 0h2m-361 1h6m86 0h5m90 0h4m5 0h2m-192 1h7m111 0h2m72 0h2m143 0h2m17 0h2m53 0h2m-406 1h3m106 0h2m172 0h2m43 0h2m21 0h2m33 0h2m17 0h3m17 0h2m15 0h3m-338 1h2m207 0h4m6 0h2m25 0h2m33 0h3m12 0h2m30 0h7m-337 1h2m213 0h6m65 0h7m3 0h2m25 0h2m1 0h4m-598 1h6m260 0h2m293 0h3m27 0h3m-597 1h3m240 0h8m16 0h2m-34 1h8m8 0h2m-20 1h2m18 0h3m124 0h2m-151 1h2m23 0h2m119 0h3m-9 1h6m59 0h4m-491 1h5m486 0h4m25 0h3m-518 1h4m166 0h7m310 0h2m20 0h6m-511 1h3m157 0h6m60 0h2m2 0h9m3 0h12m227 0h2m18 0h4m-502 1h5m149 0h3m47 0h19m13 0h3m18 0h13m29 0h2m48 0h2m56 0h2m39 0h3m25 0h2m18 0h2m-351 1h7m143 0h2m52 0h4m50 0h2m29 0h12m26 0h2m-331 1h2m149 0h2m57 0h6m42 0h2m18 0h3m3 0h7m36 0h2m67 0h2m-402 1h4m216 0h5m35 0h2m18 0h2m3 0h3m137 0h3m-434 1h6m381 0h2m40 0h2m3 0h2m-440 1h4m410 0h2m15 0h2m7 0h2m-278 1h2m228 0h2m20 0h2m11 0h2m11 0h2m13 0h3m-42 1h2m7 0h2m15 0h2m5 0h6m-290 1h2m216 0h2m10 0h2m21 0h2m3 0h2m19 0h5m-131 1h17m85 0h3m-158 2h4m-447 1h4m29 0h2m405 0h3m-448 1h5m4 0h29m85 0h2m577 0h3m-580 1h2m7 0h2m560 0h6m-575 1h2m437 0h2m85 0h3m37 0h3m46 0h6m-619 1h2m286 0h2m149 0h4m78 0h3m36 0h4m44 0h5m-611 1h2m286 0h3m150 0h12m63 0h3m36 0h3m41 0h7m-599 1h17m3 0h3m6 0h6m249 0h2m219 0h4m37 0h2m41 0h3m-575 1h3m3 0h6m6 0h9m258 0h4m197 0h2m-415 1h10m3 0h14m4 0h3m175 0h3m-226 1h14m10 0h3m14 0h4m3 0h11m87 0h2m0 1h2m1 3h2m190 0h2m-192 1h2m171 0h10m5 0h2m-36 1h19m15 0h3m21 0h6m-156 1h8m80 0h4m37 0h4m7 0h10m6 0h2m-156 1h2m80 0h4m45 0h7m18 0h2m123 0h2m-204 1h3m76 0h28m10 0h7m-126 1h2m138 0h12m-291 1h2m134 0h3m125 0h15m-145 1h2m121 0h7m-132 1h2m115 0h8m-322 1h3m304 0h7m-316 1h2m303 0h4m-312 1h3m123 0h75m193 0h2m-616 1h18m199 0h3m108 0h18m-132 1h3m79 0h2m-87 2h2m86 0h21m-112 1h3m-6 1h3m489 0h2m-496 1h2m25 0h2m90 0h5m-292 1h13m522 0h9m-531 1h3m181 0h36m293 0h9m123 0h2m-644 1h2m0 1h2m447 0h4m80 0h2m-353 1h2m347 0h2m103 0h3m-459 1h2m451 1h2m-630 1h2m34 0h3m571 0h3m-652 1h8m33 0h2m24 0h8m3 0h7m3 0h28m4 0h3m25 0h2m3 0h18m474 0h4m3 0h2m10 0h2m-658 1h9m26 0h2m40 0h3m28 0h4m3 0h25m2 0h3m489 0h3m9 0h3m-19 1h4m15 0h2m2 0h2m-737 1h2m708 0h2m21 0h2m-735 1h2m580 0h2m29 0h2m-300 1h4m292 0h2m-294 1h4m256 0h2m-269 1h2m246 0h19m-245 1h11m262 0h2m85 0h3m-374 1h11m358 0h2m3 0h6m-198 1h6m167 0h2m23 0h4m-196 1h6m140 0h4m14 0h3m11 0h2m-174 1h3m133 0h4m4 0h2m9 0h3m-26 1h4m10 0h3m3 0h3m14 0h2m-43 1h4m17 0h3m-265 1h20m115 0h9m95 0h2m38 0h2m-296 1h15m20 0h23m101 0h4m92 0h2m-197 1h2m101 0h5m89 0h2m-681 1h2m374 0h12m92 0h2m199 0h2m-681 1h2m679 0h2m-274 1h11m191 0h3m66 0h2m1 0h2m-287 1h11m205 0h4m60 0h2m5 0h2m-683 1h2m612 0h7m51 0h2m-595 1h2m503 0h3m34 0h6m43 0h2m12 0h2m-683 1h2m76 0h13m493 0h3m96 0h2m-683 1h2m747 0h3m-68 1h2m60 0h3m3 0h3m-726 1h2m257 0h2m453 0h3m9 0h3m-468 1h3m394 0h2m51 0h3m15 0h3m-468 1h4m441 0h2m21 0h3m-737 1h7m3 0h6m7 0h6m3 0h2m33 0h2m201 0h3m158 0h2m3 0h2m272 0h2m25 0h3m-733 1h3m6 0h7m6 0h3m105 0h2m43 0h12m3 0h6m4 0h29m37 0h3m157 0h3m272 0h2m30 0h2m-603 1h4m24 0h15m12 0h3m6 0h4m409 0h2m-579 1h6m3 0h5m90 0h10m-149 1h2m18 0h15m6 0h3m-42 1h18m487 0h5m43 0h2m51 0h2m89 0h2m-423 1h5m211 0h13m50 0h3m-491 1h6m196 0h7m150 0h6m54 0h6m46 0h8m12 0h2m43 0h2m57 0h2m-591 1h6m187 0h3m163 0h12m87 0h7m22 0h2m102 0h4m-589 1h15m170 0h2m14 0h5m32 0h12m61 0h2m24 0h2m26 0h8m77 0h2m31 0h2m36 0h2m66 0h3m-386 1h9m9 0h14m75 0h2m19 0h3m35 0h3m110 0h2m105 0h4m-381 1h3m97 0h2m14 0h3m153 0h2m107 0h2m-281 1h2m9 0h3m158 0h2m25 0h3m-338 1h2m136 0h3m3 0h3m-6 1h3m53 0h2m20 0h5m138 0h2m-165 1h20m198 1h3m-303 1h2m-19 1h2m13 0h2m304 0h2m-337 1h2m10 0h2m2 0h4m7 0h2m301 0h2m-330 1h3m4 0h3m8 0h3m2 0h2m303 0h2m6 0h2m-335 1h4m14 0h2m304 0h3m-65 1h2m56 0h4m12 0h3m-23 1h4m18 0h3m-39 1h2m9 0h3m25 0h4m-466 1h34m391 0h2m3 0h4m32 0h4m15 0h5m-754 1h3m295 0h2m145 0h2m156 0h19m69 0h3m15 0h2m23 0h4m4 0h7m5 0h2m-763 1h7m3 0h15m429 0h6m256 0h2m27 0h4m-752 1h3m25 0h7m3 0h3m422 0h12m244 0h2m46 0h2m-773 1h4m35 0h3m3 0h2m300 0h2m130 0h4m240 0h2m48 0h2m-292 1h12m117 0h2m109 0h2m50 0h2m-282 1h6m222 0h2m52 0h4m-587 1h10m24 0h3m308 0h2m15 0h3m164 0h2m56 0h4m-581 1h24m3 0h45m265 0h15m3 0h2m162 0h2m60 0h4m-436 1h2m206 0h2m226 0h3m-437 1h2m206 0h2m-208 1h2m206 0h2m38 0h2m115 0h2m-157 1h2m153 0h2m-155 1h3m150 0h2m-135 1h5m87 0h2m39 0h2m-225 1h10m77 0h3m94 0h3m36 0h2m-388 1h9m164 0h6m65 0h6m136 0h2m-209 1h2m118 0h23m64 0h2m-229 1h2m281 0h2m0 1h2m-416 1h2m414 0h2m-27 1h3m0 1h4m21 0h2m-681 1h4m10 0h3m246 0h2m4 0h3m49 0h2m30 0h5m300 0h5m18 0h2m-679 1h10m3 0h62m186 0h4m3 0h17m34 0h3m32 0h7m298 0h3m17 0h2m-359 1h3m36 0h2m15 0h2m231 0h2m67 0h2m-5 1h3m-6 1h3m-474 1h4m9 0h7m448 0h3m-482 1h11m4 0h9m7 0h2m444 0h2m-67 1h2m61 0h2m-746 1h6m355 0h31m9 0h2m280 0h4m-690 1h3m403 0h8m268 0h15m47 0h2m-776 1h11m15 0h4m523 0h10m147 0h2m15 0h6m-193 1h13m10 0h21m149 0h2m-197 1h2m54 0h8m105 0h2m26 0h3m-136 1h9m53 0h2m39 0h2m30 0h3m-678 1h2m676 0h2m-678 1h8m199 0h2m200 0h15m214 0h2m38 0h2m-672 1h7m189 0h3m473 0h2m-667 1h4m175 0h10m431 0h2m-618 1h3m166 0h6m408 0h2m29 0h2m-613 1h10m153 0h3m84 0h6m326 0h2m25 0h2m23 0h3m-627 1h4m143 0h6m93 0h53m248 0h3m24 0h2m21 0h2m22 0h3m-620 1h3m130 0h10m395 0h5m29 0h3m-572 1h2m116 0h12m388 0h17m7 0h2m28 0h2m72 0h2m-646 1h2m101 0h13m424 0h2m30 0h2m72 0h4m-561 1h14m437 0h2m32 0h14m62 0h3m-582 1h19m450 0h2m-487 1h16m477 0h3m-500 1h4m489 0h4m-500 1h3m490 0h3m-608 1h2m107 0h3m609 0h2m7 0h2m-627 1h4m-112 1h2m90 0h7m3 0h6m-110 1h2m70 0h22m7 0h3m136 0h3m4 0h6m2 0h10m-195 1h2m171 0h4m6 0h2m10 0h2m374 0h23m12 0h5m-338 1h2m290 0h6m23 0h12m9 0h2m45 0h2m-110 1h11m99 0h2m18 0h3m-7 1h4m3 0h4m-728 1h2m490 0h3m4 0h19m7 0h10m17 0h3m101 0h2m46 0h2m8 0h3m11 0h2m-728 1h2m473 0h15m3 0h4m56 0h5m146 0h2m2 0h4m-710 1h40m338 0h3m7 0h40m43 0h2m83 0h3m145 0h2m-338 1h10m3 0h7m268 0h2m-552 1h2m191 0h2m64 0h3m290 0h2m-552 1h2m252 0h3m295 0h3m-304 1h3m301 0h3m-310 1h3m307 0h3m-316 1h3m313 0h2m-434 1h2m111 0h3m-416 1h2m382 0h29m-411 1h3m0 1h3m716 0h12m-728 1h3m711 0h2m9 0h2m-724 1h3m611 0h2m39 0h4m24 0h5m1 0h2m17 0h3m9 0h2m-719 1h2m520 0h2m132 0h8m8 0h8m8 0h2m13 0h2m-181 1h9m131 0h8m18 0h3m7 0h3m11 0h2m-101 1h2m76 0h2m3 0h2m12 0h2m-544 1h82m318 0h10m115 0h3m-380 1h2m-174 1h25m148 0h2m21 0h2m30 0h8m-239 1h3m166 0h7m25 0h12m-216 1h3m167 0h2m44 0h12m-231 1h3m160 0h10m58 0h3m280 0h11m-528 1h3m160 0h3m362 0h12m3 0h3m-643 1h7m55 0h3m3 0h29m157 0h6m377 0h3m3 0h5m-650 1h2m7 0h4m26 0h25m3 0h3m70 0h10m-152 1h2m13 0h10m3 0h13m508 0h2m-553 1h2m25 0h3m523 0h6m-561 1h2m559 0h3m-566 1h2m449 0h21m94 0h6m-575 1h3m303 0h2m267 0h3m-580 1h2m304 0h2m78 0h4m3 0h2m184 0h8m117 0h2m-403 1h3m47 0h33m4 0h3m2 0h2m115 0h10m65 0h3m107 0h7m-407 1h6m45 0h5m169 0h9m59 0h6m91 0h10m-734 1h3m326 0h57m141 0h31m75 0h2m33 0h26m28 0h2m-721 1h2m664 0h2m51 0h2m-719 1h2m629 0h2m-631 1h4m627 0h2m-629 1h2m627 0h2m-629 1h3m418 0h52m285 0h2m-757 1h2m625 0h2m119 0h7m-753 1h2m742 0h2m-744 1h4m622 0h2m109 0h5m-738 1h2m123 0h2m497 0h2m104 0h3m-731 1h2m123 0h4m118 0h4m6 0h18m349 0h2m100 0h2m-726 1h2m125 0h3m110 0h5m3 0h7m369 0h2m0 1h2m-113 2h3m3 0h3m-25 1h16m3 0h3m3 0h6m142 2h2m0 1h6m0 1h4m0 1h2m-362 8h2m64 0h2m-220 2h38m113 1h2m-2 1h2m65 0h2m-2 1h2m-2 1h2m249 0h2m-8 1h6m-190 3h5m0 1h3m-135 1h2m115 0h9m-126 1h2m109 0h6m-117 1h2m64 0h2m-400 1h33m365 0h2m256 0h2m-260 1h2m258 0h2m-262 1h2m260 0h2m-449 1h37m148 0h2m262 0h2m-626 1h35m325 0h2m264 0h3m-594 1h15m24 0h8m6 0h9m3 0h5m524 0h4m-551 1h6m9 0h3m194 0h2m105 0h2m-254 2h27m119 0h2m101 0h2m-274 2h17m153 0h2m99 1h2m-102 1h2m153 1h8m4 0h6m-16 1h18m-74 1h2m48 0h6m16 0h2m-44 1h5m12 0h3m23 0h2m-41 1h4m2 0h7m-14 1h21m20 0h2m-75 1h2m27 0h3m-32 1h2m34 0h2m36 0h2m-76 1h2m34 0h2m38 0h4m-355 1h2m274 0h2m33 0h2m42 0h2m-360 1h3m276 0h2m-284 1h3m277 0h2m-1 1h2m34 2h2m69 0h2m-73 1h2m66 0h3m-113 1h4m9 0h6m3 0h6m3 0h5m6 0h2m46 0h2m15 0h3m-111 1h2m3 0h9m6 0h3m6 0h3m11 0h2m60 0h3m-65 1h2m57 0h3m-62 1h2m50 0h2m2 0h3m-59 1h2m52 0h2m-56 1h2m-2 1h2m118 4h2m-3 1h2m1 0h4m-76 1h37m30 0h2m7 0h6m-132 1h2m85 0h2m43 0h3m-135 1h2m87 0h2m23 0h2m19 0h6m-141 1h2m89 0h2m19 0h2m27 0h7m-38 1h2m36 0h3m3 0h6m-9 1h3m6 0h2m-620 1h4m454 0h2m-464 1h4m4 0h3m-14 1h3m11 0h3m-19 1h2m17 0h3m445 0h21m247 0h5m-718 1h2m443 0h2m164 0h2m97 0h3m-711 1h2m703 0h3m-706 1h2m698 0h3m-262 1h2m254 0h3m-89 1h2m46 0h14m3 0h3m15 0h3m-84 1h2m58 0h3m3 0h15m-747 2h3m491 0h2m-498 1h2m3 0h2m489 0h2m174 0h2m-676 1h2m7 0h2m13 0h3m471 0h2m-489 1h2m8 0h3m47 0h9m-83 1h2m14 0h2m3 0h3m42 0h8m9 0h4m-69 1h3m66 0h3m411 0h2m-374 2h2m399 1h37m-43 1h2m0 1h2m0 1h2m-412 2h6m600 0h5m-617 1h6m599 0h7m-614 1h2m603 0h2m-625 1h3m14 0h2m-16 1h2m10 0h2m-12 1h3m-82 1h2m80 0h2m2 0h2m-4 1h2m609 1h3m-5 1h2m-4 1h2m-47 2h3m19 0h2m18 0h2m-621 1h2m563 0h12m3 0h19m18 0h2m71 0h5m-8 1h3m-693 1h2m442 0h2m237 0h7m-692 1h2m442 0h2m236 0h3m-687 1h2m442 0h2m235 0h3m-686 1h2m678 0h3m-240 1h2m231 0h4m-9 1h5m-679 2h2m440 0h2m-4 1h2m167 5h2m0 1h3m0 1h2m0 1h2m0 1h2m0 1h2m0 1h3m0 1h2m0 1h2m0 1h2m0 1h4m0 1h2m0 1h4m29 0h2m-30 2h2m0 1h3m0 1h3m0 1h10m0 1h3m0 1h2m34 15h2m-5 1h3m-9 1h6m-49 1h9m31 0h3m-46 1h3m9 0h10m18 0h3m-46 1h3m22 0h18m-45 1h2m-16 15h15m42 8h2m-4 1h2m2 0h9m-15 1h2m13 0h6m3 0h2m-29 1h3m21 0h3m-29 1h2"/><path transform="translate(.5 0)" stroke="#646767" d="M0 0m6 283v1m0 151v2m0 241v1m1-242v1m1-200v33m0 167v1m1-384v17m0 6v13m0 3v3m0 7v2m0 333v1m0 236v1m1-605v6m0 13v3m0 3v7m4 168v11m0 159v1m1 0v1m0 71v3m0 10v3m0 6v3m0 3v3m0 3v23m0 1v1m0 3v3m0 3v9m0 4v3m0 45v2m1-135v4m0 3v10m0 3v6m0 3v3m0 3v1m0 1v1m0 25v3m0 3v3m0 9v4m0 3v2m0 45v3m1 0v8m1-212v1m0 211v2m1-288v3m0 9v3m0 7v8m1-82v2m0 1v1m0 3v19m0 1v25m0 3v8m0 4v7m0 306v1m1-377v3m0 371v2m1-245v7m0 235v1m1-249v1m0 2v3m0 7v1m0 232v2m1-247v2m0 11v1m0 30v1m0 199v1m1-247v2m0 14v2m0 27v1m0 1v2m1-50v1m0 18v1m0 25v1m0 4v4m0 179v4m1-521v9m0 274v1m0 20v2m0 21v2m0 9v1m0 182v4m0 3v2m1-532v2m0 9v2m0 271v1m0 23v1m0 19v1m0 12v2m0 184v3m1-532v2m0 13v1m0 26v24m0 218v2m0 25v1m0 17v1m0 15v3m1-331v8m0 258v1m0 28v1m0 15v1m0 19v2m1-325v7m0 1v7m0 43v3m0 7v3m0 186v1m0 30v2m0 11v2m0 22v2m0 117v2m1-431v3m0 33v7m0 3v7m0 3v2m0 183v1m0 33v2m0 8v1m0 69v2m0 69v3m0 2v2m1-194v2m0 36v4m0 3v1m0 72v1m0 44v5m0 13v6m0 7v2m0 18v2m1-217v1m0 43v2m0 74v1m0 48v6m0 5v2m0 15v3m0 12v3m1-645v16m0 133v1m0 279v1m0 121v1m0 53v4m0 21v2m0 6v4m1-494v1m0 279v1m0 123v2m0 78v6m1-492v1m0 280v1m0 126v1m0 112v2m1-525v2m0 137v17m0 1v11m0 114v1m0 128v1m0 109v2m1-534v11m0 134v5m0 141v2m0 103v1m0 26v1m0 105v3m1-543v11m0 290v1m0 104v1m0 28v1m0 102v2m1-414v2m0 172v1m0 104v1m0 30v2m1-542v3m0 9v3m0 9v3m0 4v2m0 3v7m0 4v8m0 9v3m0 10v3m0 144v6m0 27v1m0 145v1m0 138v2m1-545v1m0 3v9m0 3v9m0 3v3m0 3v3m0 7v3m0 9v9m0 3v10m0 3v2m0 130v12m0 320v1m1-334v1m0 188v1m0 2v5m0 77v1m0 59v1m1-337v1m0 45v1m0 152v6m0 72v5m1-283v1m0 205v4m0 73v2m0 13v1m1-300v1m0 210v9m0 66v6m1-293v1m0 220v1m0 62v2m0 7v4m1-406v4m0 325v1m0 2v1m0 58v2m0 13v2m1-409v1m0 208v16m0 109v1m0 56v1m1-284v1m0 226v1m0 53v2m1-284v1m0 81v1m0 138v1m0 33v4m0 3v15m0 3v2m0 149v4m1-436v1m0 83v1m0 135v2m0 38v3m0 15v3m0 142v9m1-347v2m0 131v2m0 198v5m1-336v1m0 129v1m1-220v1m0 89v2m0 126v1m1-220v1m0 92v2m0 5v3m0 20v2m0 6v12m0 1v7m0 3v3m0 20v2m0 3v5m0 3v3m0 25v1m1-220v1m0 95v5m0 25v6m0 20v3m0 3v1m0 21v3m0 5v3m0 26v2m1-336v1m0 1v10m0 83v2m0 18v2m0 46v1m0 169v1m1-237v2m0 15v1m0 49v2m0 166v1m1-331v1m0 96v6m0 8v1m0 52v2m0 163v1m1-329v1m0 101v2m0 4v2m0 55v1m0 161v1m1-224v4m0 58v2m0 158v1m1-305v10m0 3v14m0 275v2m1-305v1m0 10v3m0 34v12m0 235v8m1-260v5m0 12v2m0 224v9m1-313v2m0 57v2m0 442v1m0 1v1m1-504v2m0 53v2m0 69v13m0 276v1m0 82v3m0 3v6m0 46v1m1-555v1m0 51v1m0 361v2m0 77v3m0 12v2m0 45v2m1-556v1m0 48v2m0 364v1m0 70v6m0 17v4m0 43v2m0 10v3m1-570v9m0 38v1m0 114v1m0 252v2m0 66v2m0 27v2m0 43v1m0 6v3m1-522v2m0 116v1m0 253v1m0 96v2m0 42v2m0 2v2m1-400v1m0 253v1m0 97v3m0 42v1m1-625v3m0 10v3m0 1v4m0 207v1m0 253v1m0 99v3m1-624v2m0 36v1m0 3v10m0 216v2m0 354v1m0 80v3m1-706v2m0 266v1m0 354v1m0 77v2m1-701v2m0 302v3m0 315v2m0 73v2m1-697v9m0 291v2m0 320v2m0 70v1m1-686v3m0 254v1m0 253v6m0 3v10m0 153v2m1-682v2m0 253v1m0 251v1m0 6v3m0 10v2m0 149v2m1-678v2m0 672v2m1-674v2m0 37v30m0 25v2m0 185v1m1-280v2m0 92v1m0 122v7m1-222v1m0 92v2m0 111v9m0 7v2m0 26v1m0 414v2m1-666v1m0 222v2m0 25v3m0 8v10m0 3v1m0 260v3m0 9v3m0 113v1m1-663v1m0 223v1m0 27v2m0 3v3m0 10v3m0 246v2m0 1v12m0 3v9m0 3v3m1-551v1m0 223v2m0 1v14m0 12v1m0 1v1m1-255v2m0 114v14m0 1v48m0 1v13m1-191v1m1 0v1m1 0v1m0 239v8m0 359v2m1-608v1m0 237v1m0 369v3m1 0v3m0 36v1m1-260v3m0 220v6m1-236v7m0 3v1m0 225v7m1-256v13m0 243v1m0 1v1m0 17v2m1-287v9m0 259v3m0 11v3m1-289v4m0 271v4m0 3v4m1-7v2m1-233v7m0 4v5m1-9v4m1-315v7m0 449v3m0 4v3m1-468v2m0 448v8m0 3v4m0 3v1m1-471v2m1-24v1m0 4v4m0 11v2m1-21v4m0 5v2m0 6v2m1-8v2m0 2v2m0 525v1m1-664v20m0 14v6m0 4v5m0 85v2m0 220v17m0 291v1m1-645v8m0 1v5m0 6v4m0 6v1m0 48v20m0 254v22m0 270v2m1-616v2m0 388v1m0 225v1m0 20v2m1-637v1m0 388v1m0 39v3m0 6v3m0 12v9m0 153v1m0 21v2m1-638v1m0 388v1m0 33v5m0 3v6m0 4v11m0 9v2m0 1v9m0 1v4m0 137v1m0 22v2m1-639v1m0 388v1m0 225v2m0 13v1m0 8v3m1-641v2m0 387v1m0 226v3m0 22v2m1-641v2m0 1v9m0 332v1m0 272v3m0 21v2m1-392v2m0 3v3m0 3v1m0 1v2m0 3v16m0 6v5m0 49v11m0 264v3m0 20v1m1-391v3m0 3v3m0 4v3m0 16v6m0 65v2m0 31v1m0 233v1m0 20v1m1-255v2m0 84v23m0 146v1m1-632v1m0 377v1m0 253v2m1-633v11m0 367v2m0 253v1m1-623v3m0 620v1m1-621v2m0 2v3m0 614v1m1-620v2m0 3v6m0 218v1m0 293v2m0 95v2m1-437v1m0 42v1m0 292v2m0 99v1m1-712v26m0 249v1m0 282v31m0 19v2m0 102v2m1-438v1m0 330v1m0 106v1m1-438v1m0 37v1m0 399v1m1-523v25m0 60v1m0 437v1m1 0v2m1 0v1m1-440v1m0 398v1m0 1v2m0 37v2m1-441v1m0 18v7m0 3v3m0 63v6m0 7v3m0 286v1m0 4v2m0 37v2m1-442v1m0 15v2m0 7v3m0 61v5m0 6v7m0 3v3m0 282v1m0 7v2m0 37v3m1-444v1m0 392v1m0 10v2m0 38v2m1-499v10m0 49v8m0 378v1m0 13v2m0 38v1m1-511v11m0 55v4m0 402v1m1 0v1m1-20v1m0 19v1m1-22v1m0 21v1m1-24v1m0 23v1m1 0v2m1-577v4m0 157v1m0 415v1m1-550v4m0 1v1m0 123v4m1-138v5m0 6v14m0 1v23m0 84v1m2 299v12m1-528v1m0 201v3m0 190v17m0 53v30m0 1v20m0 17v20m0 1v4m0 4v4m1-568v1m0 2v2m0 197v2m0 3v2m0 351v4m0 4v12m1-581v1m0 5v2m0 179v10m0 1v3m1-231v19m0 10v1m0 8v3m0 192v7m0 3v6m1-222v2m0 12v3m0 182v1m1-201v1m0 17v2m0 302v1m0 4v1m1-308v2m0 298v2m0 36v1m1-402v4m0 61v2m0 220v1m0 5v2m0 65v3m0 39v1m0 279v2m1-695v11m0 4v10m0 27v1m0 25v10m0 211v5m0 65v2m0 7v1m0 35v1m0 276v2m1-643v2m0 315v2m0 10v2m0 308v2m1-340v16m0 319v3m0 2v2m1-13v6m0 7v3m1-18v2m0 16v3m1 0v3m1-447v1m0 446v2m1-448v1m0 161v1m0 135v2m0 1v2m0 3v3m0 139v2m1-449v1m0 301v3m0 3v9m0 132v2m1-450v1m0 315v1m0 133v4m1-455v1m0 454v2m1 0v2m1-668v1m0 472v13m0 182v1m1-673v4m0 40v2m0 19v5m0 141v1m0 278v18m1-462v18m0 6v25m0 3v2m1-5v3m3 37v1m0 398v2m1 0v3m1-546v5m0 541v2m1-585v4m0 3v30m0 548v2m1-583v3m0 580v2m5-545v2m1 0v2m0 474v5m1-479v2m0 367v4m0 106v8m1-485v3m0 368v22m0 3v1m1-394v3m0 177v19m0 1v7m0 11v23m0 149v3m1-390v3m1 0v2m1 0v2m0 474v1m1-276v8m0 208v17m0 1v12m0 3v3m0 3v2m0 1v3m0 15v1m1-31v3m0 3v3m0 22v2m1-342v33m0 309v6m1 0v4m5 74v4m1-9v5m0 4v2m2-452v1m1 0v2m1 0v1m1-17v2m0 15v2m1-17v6m0 11v6m0 80v1m0 283v2m1-366v5m0 76v1m0 277v5m3-36v1m0 3v3m0 3v3m0 6v3m1-393v1m0 371v3m0 3v3m0 3v6m0 3v8m1-400v3m1 0v2m1 0v2m1 1v1m0 75v11m0 373v2m0 1v3m0 3v3m0 3v11m1-485v3m0 238v2m0 6v4m0 8v6m0 3v4m0 3v3m0 2v3m0 4v1m0 1v4m0 2v6m0 7v5m0 7v12m0 3v12m0 3v2m0 82v2m0 1v20m0 6v3m0 3v3m1-471v4m0 229v5m0 2v6m0 4v5m0 1v2m0 6v3m0 4v3m0 3v2m0 3v4m0 6v2m0 6v7m0 5v6m0 13v3m0 12v3m0 2v5m1-352v1m1 80v22m4 2v17m0 1v6m1 0v12m0 1v7m2-102v20m0 109v4m1-151v2m0 1v15m0 128v1m1-207v9m1-17v8m0 9v2m1 0v2m0 403v45m1-448v2m0 166v1m0 7v15m1-189v2m0 165v7m1 40v3m1-119v20m0 95v1m0 3v18m0 1v10m1-211v9m1-19v10m2 59v2m1-6v4m0 102v16m1-126v4m1-239v19m0 214v2m3-134v14m1-16v2m0 14v4m0 397v33m1-430v5m0 42v1m1-2v1m0 252v10m0 3v15m0 6v15m0 9v3m0 1v27m0 6v2m1-87v3m0 15v1m0 1v4m0 15v9m0 31v6m1 84v11m0 3v1m0 1v1m0 4v5m0 4v3m1-467v1m0 444v3m0 3v3m0 6v4m0 3v8m1-476v1m1-2v1m0 402v3m0 3v3m0 4v3m0 6v6m1-432v1m0 72v11m0 306v14m0 3v3m0 3v4m0 3v6m0 6v3m1-529v3m0 9v3m0 3v10m0 150v1m0 44v3m0 12v3m0 98v4m1-350v7m0 3v5m0 1v3m0 3v3m0 10v5m0 187v1m0 1v1m0 3v12m0 3v7m0 80v11m0 4v8m1-139v8m1-92v39m0 44v1m1-122v2m1-3v1m1-2v1m0 92v6m1-100v1m0 100v14m1-116v1m0 161v24m0 1v10m1-349v4m0 4v19m0 123v2m1-148v4m0 136v6m0 211v6m0 9v7m1-246v7m0 215v2m0 6v9m1-240v1m3-4v1m0 29v2m0 27v3m1-63v1m0 32v4m0 18v5m1-23v8m0 7v3m1-10v7m2 93v1m0 1v33m1-183v1m0 182v1m0 49v1m1-264v12m0 3v3m0 3v3m0 5v1m0 232v1m1-251v3m0 3v3m0 3v5m0 224v1m0 7v1m1-307v11m0 3v7m0 278v3m0 3v1m1-295v3m0 7v1m0 1v22m0 257v3m3 168v1m3-528v8m0 6v3m1-9v6m2 180v51m1 0v8m0 1v7m0 3v3m1-6v3m0 3v10m1 0v1m1 300v17m7-445v9m1-103v2m0 79v2m0 5v6m0 9v9m1-110v2m0 71v6m0 3v4m0 24v6m0 234v2m1-350v2m0 66v3m0 43v2m0 234v14m1-362v2m0 61v3m0 296v1m0 89v1m1-451v2m0 56v3m0 300v2m0 85v2m0 1v2m1-451v1m0 52v3m0 305v2m0 82v1m0 5v2m1-452v2m0 48v2m0 310v2m0 78v2m0 8v3m1-453v3m0 43v2m0 314v1m0 75v2m0 13v2m1-452v2m0 39v2m0 317v1m0 72v2m0 17v2m1-452v2m0 35v1m0 321v2m0 58v7m0 1v4m0 21v1m1-422v6m0 324v8m0 48v2m0 35v1m1-430v6m0 384v2m0 38v2m1-128v1m0 83v2m0 42v3m1-352v13m0 266v2m0 21v3m0 47v2m1-358v4m0 278v1m0 2v2m0 17v2m0 52v1m0 72v7m1-151v3m0 12v2m0 55v2m0 68v2m1-415v8m0 3v28m0 235v3m0 7v2m0 59v1m0 35v1m0 1v1m0 28v1m1-405v3m0 112v1m0 140v1m0 17v2m0 93v4m0 3v3m0 24v1m1-288v2m0 136v2m0 17v1m0 89v6m0 10v6m0 9v5m0 3v1m1-596v1m0 107v5m0 198v8m0 1v10m0 3v3m0 3v3m0 122v2m0 66v1m0 21v2m0 22v2m0 12v3m1-594v2m0 110v4m0 118v2m0 93v3m0 3v3m0 3v11m0 180v2m0 17v2m1-551v2m0 112v6m0 412v2m0 13v2m1-547v1m0 531v9m0 2v2m1-544v2m0 230v1m0 307v1m1-539v2m0 229v2m1-231v2m0 229v2m0 196v1m1-428v2m0 229v1m0 144v1m0 51v1m1-427v1m0 340v31m0 4v3m0 48v1m1-427v2m0 376v4m0 24v1m0 20v2m1-427v1m0 379v1m0 22v1m0 1v2m1-406v2m0 398v2m0 4v2m1-406v2m0 383v1m1-384v2m1 0v2m1 0v1m0 408v7m1-415v1m0 122v3m0 3v11m0 235v1m0 39v1m1-415v2m0 115v5m0 3v3m0 245v1m1-372v1m0 20v5m1-25v1m0 1v18m1-19v1m0 317v4m1-297v1m1 20v3m0 405v5m0 1v4m1-415v6m0 198v26m0 1v3m0 5v3m0 157v6m0 10v3m1-412v5m0 387v1m0 19v5m1-412v4m0 470v3m1-473v4m0 464v2m0 3v6m1-475v3m0 82v39m0 16v1m0 291v6m0 24v2m0 11v5m1-55v7m0 6v2m0 19v3m1-441v6m0 394v4m0 15v1m0 17v1m1-445v7m0 6v4m0 141v3m0 235v11m1-413v6m0 17v4m0 125v1m0 1v10m0 3v9m0 41v14m0 120v3m0 45v3m1-404v2m0 27v3m0 121v1m0 172v16m0 1v10m0 3v2m0 1v13m0 28v1m1-250v2m0 168v5m0 32v1m1-210v2m0 163v7m0 38v1m1-214v3m0 161v4m1-170v2m0 163v1m1-169v3m0 217v1m1-224v3m0 221v1m1-474v1m0 246v2m0 97v5m0 67v1m0 55v1m1-474v3m0 176v2m0 224v11m0 58v1m1-472v2m0 176v6m1-182v2m0 180v3m1-183v5m1 0v2m0 22v1m0 136v3m0 380v1m1-543v2m0 18v2m0 73v1m0 61v1m0 4v3m0 184v1m0 191v1m1-540v3m0 13v2m0 74v1m0 61v1m0 191v1m0 191v1m1-536v2m0 9v2m0 43v6m0 26v1m0 61v1m0 184v2m0 5v1m0 40v2m0 14v1m0 59v1m0 74v1m0 40v3m1-576v3m0 3v3m0 16v3m0 3v7m0 6v10m0 31v1m0 60v2m0 187v3m0 6v1m0 30v6m0 17v1m0 59v2m0 71v1m0 44v4m0 3v4m1-584v1m0 1v1m0 18v1m0 3v3m0 7v6m0 40v1m0 59v2m0 224v5m0 85v1m0 69v1m0 38v2m0 16v2m1-506v1m0 58v2m0 317v1m0 67v1m0 43v4m0 6v4m0 3v1m1-509v1m0 57v2m0 204v1m0 115v1m0 65v1m0 48v3m0 12v1m1-455v2m0 196v1m0 10v1m0 115v1m0 63v1m0 66v1m1-459v2m0 197v1m0 12v1m0 115v1m0 61v1m0 69v2m1-464v2m0 198v1m0 14v1m0 174v1m0 73v2m1-474v6m0 1v1m0 34v39m0 125v2m0 16v1m0 170v3m0 76v1m1-504v5m0 12v12m0 204v2m0 19v1m0 114v1m0 51v3m0 80v1m1-513v3m0 3v2m0 5v12m0 238v2m0 113v1m0 47v3m0 84v1m1-511v3m0 259v1m0 157v3m1-160v2m0 153v2m1-435v1m0 218v2m0 59v1m1-298v10m0 228v2m1-304v2m0 72v4m0 183v3m0 9v6m0 9v3m0 3v3m0 7v2m0 206v1m1-515v2m0 2v3m0 233v23m0 3v7m0 1v1m0 6v9m0 3v3m0 3v2m0 212v1m1-516v1m0 8v1m0 215v17m0 194v1m0 77v1m1-513v1m0 365v1m0 64v3m0 76v2m1-511v2m0 27v36m0 301v1m0 60v3m0 78v1m1-507v1m0 112v2m0 306v4m1-424v2m0 112v4m0 201v7m0 41v3m0 35v5m0 1v9m1-302v1m0 199v1m0 47v1m0 3v1m0 30v4m0 98v1m1-187v1m2 54v1m1-58v1m0 57v2m1-61v1m0 60v2m1-69v2m0 3v1m0 63v1m1-68v1m0 1v1m2 66v1m1 16v14m1-29v15m2-311v1m3 1v1m0 210v2m1-214v1m0 210v1m0 292v3m0 9v15m1-558v2m0 23v2m0 484v20m0 3v9m1-545v2m0 24v1m1-82v1m0 51v3m0 238v1m1-295v1m0 48v4m0 240v1m1-295v1m0 46v3m0 103v7m0 257v3m1-375v2m0 100v6m0 261v3m1-374v2m0 99v2m0 372v9m1-529v1m0 42v2m0 99v2m1-147v1m0 42v1m0 99v2m1-163v2m0 15v1m0 30v1m0 110v2m0 55v14m0 105v1m1-334v4m0 10v1m0 29v1m0 2v2m0 106v2m0 22v8m1-183v9m0 30v1m0 5v2m0 88v4m0 10v2m0 32v3m1-148v1m0 8v2m0 90v5m0 187v1m1-295v1m0 11v2m0 291v2m0 52v1m1-361v1m0 14v2m0 287v2m0 55v1m1-387v1m0 23v1m0 17v2m0 279v6m1-306v1m0 228v21m1-251v1m0 86v2m0 140v1m1-250v1m0 17v2m0 89v2m1 0v2m0 271v1m1-4v3m1-382v1m0 366v4m0 4v2m0 1v1m1-14v2m0 4v4m0 131v11m1-153v1m0 140v1m1-503v1m0 109v1m0 248v2m0 140v1m1-501v2m0 268v2m0 85v1m0 117v25m1-498v3m0 267v1m0 83v1m0 50v1m0 1v7m1-411v4m0 41v7m0 216v1m0 81v1m0 49v2m0 9v6m1-413v1m0 33v7m0 224v1m0 12v2m0 65v1m0 67v8m0 4v1m0 12v19m1-354v1m0 162v1m0 10v1m0 52v3m0 11v1m0 76v2m0 135v3m0 3v7m0 6v23m1-333v1m0 8v1m0 56v4m0 6v1m0 79v1m1-243v1m0 14v2m0 31v2m0 37v2m0 5v1m0 61v1m0 2v2m0 82v1m1-320v1m0 32v1m0 40v1m0 2v9m0 7v10m0 3v3m0 3v12m0 41v1m0 3v1m0 63v2m0 85v1m1-252v5m0 12v5m0 12v3m0 3v3m0 54v1m0 154v2m1-256v2m0 254v1m1-322v1m0 28v1m0 137v3m0 183v5m1-330v1m0 141v3m1-146v1m0 145v2m0 4v1m1-261v1m0 43v7m0 1v1m0 203v2m0 1v1m0 59v1m1-278v2m0 214v1m0 61v2m1-325v2m0 41v2m0 7v2m0 55v1m0 35v1m0 179v1m1-327v1m0 35v8m0 8v1m0 55v2m0 217v2m1-330v1m0 28v8m0 17v1m0 50v4m0 221v2m1-334v2m0 55v1m0 46v3m0 187v1m0 4v3m0 32v1m0 126v3m0 33v3m0 6v2m0 12v3m1-524v1m0 58v2m0 36v8m0 191v4m0 149v13m0 3v14m0 1v18m0 3v6m0 10v4m0 3v10m1-536v2m0 61v1m0 30v5m0 244v4m1-348v1m0 64v1m0 275v3m1-346v2m0 66v1m0 143v4m0 1v1m1-18v3m0 3v6m0 6v2m1-29v9m0 3v3m0 14v2m1-39v8m0 31v2m0 16v13m0 85v3m1-117v4m0 1v11m0 56v2m0 36v4m1-43v1m1-329v1m0 46v1m0 269v2m0 7v2m1-344v6m0 4v6m0 3v18m0 27v2m0 210v1m0 55v1m0 2v3m0 2v2m1-336v4m0 7v2m0 47v2m0 263v1m0 6v1m0 254v21m1-546v2m0 260v1m0 19v2m0 3v3m1-288v2m0 202v1m0 54v1m0 22v3m0 25v1m0 19v30m1-358v2m0 69v1m0 184v1m0 47v4m0 269v2m1-577v2m0 68v2m0 28v2m0 199v1m0 104v3m0 160v6m1-573v3m0 67v1m0 25v2m0 298v8m0 3v10m0 146v4m1-564v3m0 65v1m0 22v2m0 472v6m1-568v2m0 64v2m0 18v2m0 466v1m0 3v4m1-494v1m0 13v4m0 15v2m0 450v1m0 2v2m1-489v1m0 8v4m0 21v1m0 448v1m1-483v2m0 2v4m0 26v1m0 83v1m0 95v7m0 244v2m0 14v1m0 1v2m1-483v2m0 31v7m0 12v11m0 220v17m0 161v1m0 4v3m0 11v1m1-418v15m0 102v1m0 97v5m0 177v1m0 9v3m1-359v1m0 344v1m0 1v1m1-313v2m0 327v1m1-333v2m0 3v2m0 306v1m1-315v1m0 7v2m0 301v3m1-316v2m0 10v1m0 298v2m1-314v1m0 13v2m0 48v2m0 85v3m0 46v1m0 110v1m1-296v2m0 45v1m0 86v1m0 3v2m0 45v11m0 29v6m0 3v3m0 4v6m1-441v1m0 195v1m0 218v4m0 6v3m0 3v4m0 6v11m1-533v15m0 212v1m0 29v1m0 20v2m1-265v14m0 227v1m0 23v4m1-29v1m0 28v2m0 206v2m1-503v10m0 485v6m1-507v6m0 416v1m0 72v6m1-503v2m0 268v1m0 152v1m0 69v4m1-498v1m0 269v1m0 217v1m0 1v4m1-495v1m0 269v1m0 89v5m0 122v2m1-490v1m0 269v1m0 85v5m0 125v2m1-364v2m0 143v1m0 59v1m0 23v3m0 6v3m0 120v1m1-360v3m0 138v2m0 55v5m0 20v4m0 3v6m0 3v12m0 106v2m1-356v10m0 13v6m0 1v8m0 98v2m0 51v6m0 157v2m0 93v5m1-442v4m0 1v8m0 15v10m0 86v2m0 51v2m0 65v32m0 64v2m0 100v4m1-586v1m0 49v2m0 210v2m0 51v2m0 269v1m1-586v1m0 50v1m0 207v2m0 51v2m1-268v1m0 5v2m0 203v2m0 51v2m0 165v1m1-424v1m0 253v2m0 166v1m1-475v1m0 23v1m0 28v1m0 56v2m0 62v2m0 297v1m1-473v2m0 22v2m0 27v1m0 51v4m0 66v3m0 292v2m1-470v1m0 23v2m0 26v2m0 43v1m0 1v4m0 73v3m0 288v1m0 81v4m0 3v10m1-565v1m0 16v1m0 7v1m0 27v1m0 26v3m0 3v10m0 82v3m0 371v3m0 27v19m0 4v9m1-613v1m0 14v1m0 9v2m0 26v2m0 2v6m0 15v1m0 3v3m0 95v2m1-181v1m0 12v1m0 12v2m0 26v2m0 18v2m0 105v1m0 280v1m1-462v1m0 26v4m0 41v1m0 108v1m0 278v1m1-460v1m0 29v1m0 39v1m0 110v1m0 247v3m0 3v9m0 6v3m0 4v1m0 42v1m0 85v11m1-596v2m0 6v1m0 59v1m0 112v2m0 248v3m0 9v5m0 4v4m0 44v4m0 1v5m1-508v1m0 4v1m0 175v1m0 326v15m1-522v2m0 1v1m0 177v2m0 12v6m0 224v1m0 96v7m0 67v1m0 3v4m0 9v6m0 3v2m0 5v2m0 10v10m1-468v2m0 3v7m0 231v1m0 198v2m0 5v3m0 3v2m1-455v1m0 1v1m0 239v1m5-365v1m0 69v3m1-82v2m0 4v3m0 68v2m0 3v3m0 44v1m1-136v6m0 4v2m0 69v2m0 8v3m1-104v10m0 8v2m0 69v2m0 13v2m0 57v6m1-176v2m0 1v4m0 87v2m0 18v1m0 35v1m0 25v8m1-188v4m0 82v11m0 22v1m1-122v1m0 121v1m1-125v2m0 123v1m0 30v1m1-159v2m0 126v1m0 307v1m1-461v2m0 21v1m0 129v1m0 307v2m0 133v2m1-596v1m0 18v2m0 131v1m0 70v1m0 237v1m0 130v1m1-592v1m0 15v2m0 134v2m0 66v2m0 411v3m0 33v1m1-669v1m0 12v2m0 57v1m0 53v1m0 26v6m0 58v2m0 408v5m0 3v2m0 30v1m1-667v1m0 9v2m0 57v1m0 2v7m0 79v3m0 12v1m0 71v3m0 388v2m1-637v1m0 7v1m0 57v2m0 10v6m0 85v3m0 70v2m0 379v1m0 13v1m1-637v1m0 5v1m0 56v2m0 18v3m0 77v5m0 68v5m0 380v1m0 15v2m0 23v1m1-658v1m0 56v1m0 23v3m0 72v2m0 71v2m0 383v2m0 18v1m1-637v2m0 55v2m0 27v2m0 69v1m0 71v2m0 382v3m1-617v1m0 28v4m0 24v1m0 98v2m0 61v10m0 382v3m1-581v3m0 182v1m0 39v9m0 22v5m0 314v3m1-575v6m0 213v3m0 9v8m0 19v6m0 305v3m1-566v3m0 201v3m0 4v2m0 80v1m0 266v3m0 36v1m0 6v7m1-610v5m0 5v1m0 193v4m0 79v2m0 2v4m0 259v3m0 40v6m0 7v2m1-654v1m0 327v1m0 8v4m0 249v6m1-472v1m0 201v2m0 13v3m0 244v2m1-465v1m0 199v1m0 18v2m0 240v2m1-586v1m0 123v2m0 218v2m0 237v1m1-583v1m0 124v2m0 89v1m0 128v1m0 235v1m1-455v2m0 85v2m1-214v1m0 126v2m0 81v2m0 91v10m1-312v3m0 74v2m0 1v1m0 32v1m0 14v1m0 77v3m0 84v9m0 277v1m1-584v1m0 6v4m0 67v3m0 4v1m0 27v4m0 16v2m0 73v2m0 375v1m1-626v2m0 36v2m0 11v1m0 64v2m0 8v1m0 21v5m0 89v6m0 153v5m1-404v12m0 23v1m0 89v2m0 47v1m0 55v10m0 164v17m1-387v1m0 92v1m0 47v1m0 52v2m1-197v1m0 78v1m0 15v1m0 47v1m0 352v1m1-517v1m0 17v2m0 78v1m0 17v1m0 47v1m0 352v10m1-526v1m0 115v2m0 46v1m0 174v2m0 185v1m1-526v1m0 116v1m0 46v1m0 171v2m0 274v1m1-612v2m0 115v1m0 46v1m0 168v2m0 277v3m1-613v1m0 115v1m0 46v1m0 166v1m0 282v2m1-614v2m0 7v1m0 49v6m0 23v2m0 26v1m0 46v1m0 164v1m1-327v1m0 5v1m0 45v5m0 7v2m0 19v1m0 29v1m0 46v7m0 119v13m1-296v1m0 60v3m0 47v2m0 68v2m0 113v14m0 298v1m0 11v2m1-623v1m0 64v4m0 45v2m0 68v2m0 134v1m0 289v1m0 7v2m0 3v3m1-557v3m0 7v1m0 36v4m0 59v1m0 6v1m0 10v6m0 116v1m0 296v2m0 8v1m1-555v3m0 3v1m0 41v2m0 65v1m0 2v7m0 417v2m0 11v2m1-631v1m0 76v3m0 110v2m0 46v18m0 142v2m0 1v14m0 3v5m0 4v6m0 3v3m0 81v5m0 90v1m0 15v3m1-635v1m0 28v1m0 51v1m0 98v1m0 25v2m0 3v27m0 19v29m0 34v1m0 95v3m0 6v3m0 6v3m0 3v11m0 1v25m0 49v9m0 100v6m1-611v1m0 51v1m0 125v3m0 108v1m0 17v1m0 197v2m0 104v1m1-611v2m0 50v1m0 263v2m0 293v1m1-610v1m0 50v1m0 93v1m0 165v3m0 2v1m0 293v2m1-611v2m0 11v1m0 37v2m0 230v1m0 23v3m0 6v1m0 128v15m0 151v1m1-610v1m0 6v4m0 40v1m0 228v1m0 22v2m0 10v2m0 141v10m0 142v1m1-610v1m0 1v4m0 45v2m0 86v1m0 176v1m0 293v1m1-558v1m0 263v2m1-359v1m0 93v1m0 264v2m1-364v1m0 3v1m0 93v1m0 81v1m0 183v2m0 17v6m0 157v14m0 95v1m1-658v2m0 5v1m0 93v1m0 79v1m0 1v1m0 184v2m0 21v9m0 258v1m1-660v1m0 102v1m0 76v2m0 3v1m0 187v13m0 15v2m0 257v1m1-663v2m0 104v2m0 73v1m0 223v1m1-407v1m0 108v2m0 69v2m0 225v1m1-422v5m0 8v1m0 111v2m0 66v1m0 10v1m0 217v2m0 60v1m1-480v8m0 373v1m0 37v2m0 55v2m1-98v1m0 40v1m0 53v1m1-353v1m0 77v1m0 153v2m0 21v2m0 42v1m0 50v2m0 135v1m1-382v10m0 118v1m0 19v1m0 45v2m0 47v1m0 135v2m0 18v2m1-504v2m0 16v5m0 78v2m0 10v20m0 47v1m0 1v4m0 46v2m0 16v1m0 80v15m0 116v2m0 16v2m0 19v1m1-506v2m0 4v3m0 11v2m0 160v2m0 6v5m0 43v2m0 12v2m0 74v7m0 133v12m0 2v2m0 19v2m1-572v1m0 35v2m0 23v6m0 9v3m0 3v5m0 160v2m0 13v1m0 44v3m0 8v1m0 123v2m0 103v2m0 19v2m1-572v2m0 38v10m0 12v1m0 18v3m0 164v1m0 64v6m0 115v10m0 124v2m1-571v1m0 50v3m0 7v2m0 202v1m0 2v24m0 138v5m0 132v2m1-584v5m0 9v1m0 54v7m0 250v2m0 251v3m1-577v6m0 2v1m0 311v1m0 251v2m1-568v2m0 311v1m0 138v1m0 111v2m1-256v3m0 140v13m1-160v4m0 156v10m1-246v7m0 1v5m0 30v1m0 29v3m0 170v1m1-234v7m0 1v6m0 15v1m0 41v1m0 23v12m1-80v2m1-3v1m0 5v1m1-18v1m0 9v1m0 7v1m0 39v1m1-50v1m0 9v1m1-12v1m1-7v1m0 4v1m0 52v2m1-319v1m0 262v1m0 14v1m0 40v2m1-59v1m0 16v1m0 41v3m1-63v1m0 18v1m0 43v1m0 1v4m1-328v1m0 254v3m0 21v2m0 47v5m0 22v11m1-114v3m0 26v1m1-31v1m0 30v1m0 101v2m1-103v2m0 9v2m0 90v6m1-242v1m0 134v1m0 10v1m0 31v2m0 62v2m1-97v1m0 7v2m0 19v2m0 9v9m1-291v2m0 228v1m0 12v2m0 2v3m0 2v1m0 16v2m0 20v9m0 72v1m0 29v3m0 13v1m0 1v17m1-488v1m0 52v2m0 93v2m0 130v1m0 15v2m0 21v1m0 102v1m0 1v2m0 26v1m0 3v5m0 4v4m0 104v1m0 32v2m1-607v1m0 53v3m0 92v1m0 128v1m0 14v2m0 22v1m0 107v2m0 23v1m0 9v4m0 63v3m0 41v1m0 31v2m1-557v1m0 8v3m0 217v1m0 14v1m0 11v1m0 10v2m0 110v2m0 20v1m0 42v4m0 1v30m0 3v2m0 38v1m0 30v2m1-556v1m0 12v3m0 213v1m0 13v2m0 13v1m0 8v1m0 104v1m0 9v2m0 17v1m0 107v10m0 3v1m0 29v2m1-637v2m0 62v2m0 16v1m0 16v1m0 154v1m0 56v1m0 12v2m0 23v1m0 75v2m0 27v1m0 12v5m0 11v1m0 118v3m0 27v3m1-637v2m0 2v3m0 61v3m0 12v1m0 170v2m0 56v1m0 12v1m0 23v2m0 74v2m0 28v1m0 18v6m0 4v1m0 148v1m1-635v1m0 7v3m0 61v2m0 9v1m0 170v1m0 69v2m0 23v1m0 75v1m0 29v1m0 25v3m0 149v1m1-635v1m0 11v4m0 59v3m0 156v1m0 18v2m0 94v1m0 74v2m0 29v1m0 177v1m1-635v1m0 16v3m0 59v3m0 57v2m0 92v1m0 2v3m0 13v2m0 59v1m0 109v2m1-443v2m0 15v1m0 20v3m0 59v1m0 149v1m0 6v3m0 8v2m0 60v1m0 108v2m1-439v3m0 255v3m0 4v1m0 61v1m0 108v1m0 33v1m1-468v2m0 256v1m0 1v2m0 61v1m0 107v2m0 33v1m1-465v2m0 6v1m0 26v1m0 205v1m0 15v1m0 48v4m0 10v1m0 18v1m0 87v2m0 34v1m1-462v2m0 3v1m0 138v2m0 92v1m0 62v3m0 4v2m0 7v1m0 43v10m0 83v6m1-458v2m0 139v1m0 52v1m0 23v5m0 12v1m0 72v2m0 4v1m0 54v3m0 35v1m0 37v7m0 185v1m1-415v3m0 8v1m0 75v2m0 1v1m0 58v3m0 5v3m0 17v2m1-176v8m0 62v1m0 15v1m0 62v4m0 4v2m0 17v2m1-355v4m0 1v1m0 73v3m0 8v1m0 56v1m0 189v1m0 17v2m0 97v14m1-472v4m0 6v2m0 74v5m0 2v1m0 58v1m0 189v1m1-346v3m0 12v2m0 77v2m0 60v1m0 95v1m0 44v1m0 48v2m0 56v12m0 174v2m1-599v1m0 3v3m0 17v2m0 77v2m0 129v1m0 120v1m0 49v6m0 184v2m1-595v2m0 22v4m0 41v2m0 32v2m0 126v1m0 122v4m0 36v9m0 106v2m0 2v12m0 3v4m0 3v6m0 2v24m0 23v3m1-565v2m0 36v3m0 36v2m0 56v1m0 66v1m0 24v1m0 102v5m0 25v6m0 113v2m0 16v3m0 4v3m0 6v2m0 45v2m1-560v2m0 31v3m0 41v2m0 55v1m0 64v1m0 24v1m0 24v1m0 307v1m1-556v2m0 22v7m0 46v2m0 17v3m0 34v1m0 62v1m0 24v1m0 26v1m1-247v3m0 16v3m0 55v3m0 6v8m0 38v1m0 60v1m0 24v1m0 28v1m0 27v3m1-275v2m0 13v1m0 61v1m0 1v4m0 106v1m0 8v1m0 15v1m0 30v1m0 24v2m0 3v3m1-147v2m0 66v2m0 45v1m0 21v2m0 176v2m1-315v1m0 55v7m0 5v2m0 63v2m0 180v5m1-438v1m0 118v2m0 51v1m0 15v2m0 7v1m0 51v2m0 187v3m1-320v2m0 47v2m0 18v2m0 4v1m0 50v2m0 192v1m1-319v2m0 44v1m0 22v2m0 1v1m0 50v1m0 123v15m0 1v27m1-288v2m0 47v1m0 19v1m0 28v1m0 20v2m0 89v1m1-209v2m0 46v1m0 17v1m0 30v2m0 16v2m0 89v2m0 108v1m1-539v1m0 27v4m0 192v1m0 21v1m0 15v1m0 8v1m0 15v1m0 33v3m0 11v2m0 89v2m0 4v4m0 103v1m1-543v3m0 2v4m0 19v3m0 4v4m0 211v2m0 12v1m0 10v1m0 13v1m0 37v3m0 6v2m0 89v2m0 10v5m1-449v5m0 9v3m0 14v2m0 11v3m0 210v3m0 8v1m0 12v1m0 11v1m0 41v2m0 2v2m0 41v11m0 37v2m0 17v3m1-435v3m0 9v2m0 16v3m0 210v3m0 4v1m0 24v1m0 44v1m0 34v10m0 46v2m0 22v3m0 94v1m1-530v4m0 3v2m0 21v4m0 209v2m0 1v1m0 159v2m0 27v3m0 99v4m1-537v2m0 28v1m0 228v1m0 141v1m0 33v2m0 93v3m0 4v5m1-105v2m0 104v1m1-443v1m0 337v2m0 50v1m0 4v2m1-404v7m0 162v2m0 134v1m0 33v1m0 7v2m0 56v7m0 64v8m0 16v3m1-510v7m0 167v2m0 135v1m0 33v1m0 10v1m0 52v2m0 8v2m0 70v3m0 9v4m1-508v1m0 100v2m0 71v1m0 183v2m0 62v2m0 71v9m1-404v1m0 185v1m0 73v1m0 63v2m1-328v2m0 187v4m0 53v1m0 16v2m0 63v2m1-331v1m0 7v1m0 185v3m0 13v3m0 53v1m0 64v2m0 31v1m1-367v2m0 9v1m0 187v4m0 4v5m0 4v2m0 51v2m0 64v2m1-348v3m0 7v1m0 12v1m0 68v1m0 121v1m0 1v2m0 11v2m0 27v1m0 23v2m0 64v4m0 111v3m0 3v3m0 7v3m0 6v6m0 3v2m1-496v3m0 2v2m0 99v1m0 9v2m0 110v3m0 47v1m0 2v3m0 65v5m0 22v1m0 46v11m0 3v3m0 19v1m0 3v3m0 3v7m0 3v6m0 6v3m1-491v2m0 102v1m0 6v2m0 6v1m0 108v2m0 44v1m0 6v3m0 67v3m0 77v3m0 3v8m1-426v1m0 85v1m0 4v1m0 119v2m0 18v1m0 22v1m0 10v3m0 34v2m1-217v1m0 1v2m0 122v3m0 14v1m0 22v1m0 14v1m0 1v2m0 32v2m1-204v1m0 16v1m0 96v2m0 34v1m0 19v5m0 29v2m1-424v1m0 117v1m0 100v2m0 11v3m0 99v3m0 30v1m0 25v3m0 28v2m1-476v1m0 270v1m0 7v3m0 5v1m0 99v2m0 5v1m0 21v1m0 29v2m1-450v2m0 276v3m0 110v2m0 2v1m0 54v2m1-475v1m0 21v1m0 172v1m0 103v2m0 115v2m0 57v2m1-476v1m0 192v1m0 119v1m0 103v2m0 19v1m0 37v2m1-477v1m0 190v1m0 121v1m0 104v2m0 16v1m0 41v1m0 147v1m1-626v2m0 15v1m0 171v1m0 4v1m0 224v1m0 14v1m0 43v2m0 68v1m0 77v1m1-625v7m0 7v1m0 178v1m0 224v2m0 11v1m0 41v1m0 4v1m0 68v1m0 77v1m1-619v4m0 2v1m0 79v1m0 100v1m0 225v2m0 8v1m0 41v1m0 75v5m0 3v5m0 65v1m1-660v1m0 98v1m0 27v2m0 89v1m0 9v1m0 126v2m0 20v1m0 1v2m0 74v2m0 5v1m0 41v1m0 25v2m0 54v3m1-588v1m0 95v2m0 30v2m0 85v2m0 11v1m0 116v2m0 9v3m0 15v2m0 4v2m0 74v1m0 3v1m0 41v1m0 28v2m0 77v3m1-612v1m0 93v1m0 34v2m0 82v1m0 14v1m0 117v1m0 11v3m0 10v2m0 8v2m0 73v2m0 42v1m0 31v2m0 71v4m0 3v3m0 44v1m1-567v1m0 37v2m0 79v1m0 16v1m0 117v1m0 22v1m0 12v2m0 22v1m0 51v1m0 39v1m0 34v1m0 66v4m0 10v3m0 42v2m1-570v1m0 40v2m0 76v1m0 18v1m0 138v1m0 15v2m0 21v1m0 51v2m0 36v1m0 36v2m0 13v2m0 48v1m0 17v4m0 115v2m1-648v1m0 43v2m0 231v1m0 18v2m0 20v1m0 52v2m0 33v1m0 39v2m0 9v2m0 2v2m0 68v7m0 106v2m1-647v1m0 46v2m0 227v2m0 21v2m0 19v1m0 53v3m0 29v1m0 42v2m0 5v2m0 6v3m0 72v5m0 100v1m1-646v1m0 49v1m0 52v2m0 15v1m0 63v2m0 24v1m0 65v1m0 25v1m0 19v1m0 38v2m0 15v2m0 26v1m0 45v2m0 1v2m0 11v3m0 74v2m0 96v2m1-540v11m0 2v2m0 66v6m0 15v3m0 49v1m0 14v2m0 82v3m0 19v3m0 22v1m0 65v3m0 73v1m0 27v1m0 64v3m1-527v1m0 75v2m0 12v1m0 51v1m0 13v2m0 81v3m0 25v3m0 17v2m0 69v1m0 73v1m0 27v1m0 60v3m1-691v1m0 102v1m0 141v3m0 7v2m0 51v1m0 95v2m0 31v2m0 14v1m0 146v1m0 80v7m1-440v7m0 24v2m0 26v1m0 93v3m0 35v3m0 10v1m0 148v2m0 73v5m1-715v1m0 311v1m0 121v1m0 41v2m0 7v1m0 27v8m0 41v1m0 32v1m0 41v1m0 25v1m0 45v1m1-399v1m0 166v1m0 5v1m0 78v2m0 14v9m0 8v1m0 41v2m0 24v2m0 42v1m1-409v1m0 8v2m0 172v1m0 81v14m0 18v2m0 41v1m0 25v1m0 39v2m1-678v2m0 269v1m0 6v1m0 10v1m0 162v1m0 116v2m0 66v1m0 37v1m1-677v1m0 276v2m0 173v1m0 119v2m0 65v1m0 34v2m1-677v1m0 276v1m0 31v1m0 331v2m0 27v4m1-675v1m0 276v1m0 16v1m0 13v2m0 142v1m0 191v1m0 23v3m1-695v2m0 20v2m0 200v2m0 105v1m0 143v1m0 193v1m0 15v7m1-690v3m0 16v1m0 204v6m0 36v2m0 59v2m0 6v1m0 136v1m0 195v13m0 1v1m1-680v3m0 12v1m0 211v3m0 26v7m0 52v1m0 6v2m0 9v1m0 134v1m1-466v4m0 7v1m0 215v7m0 12v7m0 60v1m0 3v2m0 12v1m0 132v1m1-461v4m0 2v1m0 223v3m0 3v6m0 70v1m0 15v1m0 130v1m1-455v1m0 58v5m0 164v1m0 1v1m0 75v1m0 17v1m0 12v1m0 2v2m0 24v2m0 85v1m0 35v3m0 1v8m1-445v3m0 70v1m0 174v1m0 30v2m0 5v3m0 18v3m0 46v1m0 39v1m1-400v3m0 74v3m0 170v1m0 29v2m0 10v2m0 14v2m0 88v1m1-406v7m0 80v5m0 188v1m0 3v3m0 14v3m0 9v2m0 89v1m0 175v2m0 24v3m1-612v3m0 92v2m0 125v1m0 63v1m0 20v3m0 4v2m0 90v1m0 178v10m0 11v3m0 3v1m1-614v1m0 143v1m0 76v2m0 36v1m0 51v2m0 1v1m0 91v1m0 189v7m0 2v2m0 7v1m1-474v3m0 2v1m0 73v1m0 37v1m0 114v1m0 31v1m0 120v2m0 19v1m0 55v2m0 10v1m1-490v1m0 12v2m0 6v1m0 70v2m0 37v1m0 146v1m0 123v2m0 15v1m0 2v3m0 65v1m1-490v2m0 7v3m0 9v1m0 68v1m0 37v2m0 69v1m0 69v4m0 3v1m0 126v1m0 11v3m0 6v4m0 62v1m1-489v2m0 2v3m0 13v1m0 66v1m0 37v1m0 72v1m0 47v1m0 18v2m0 4v2m0 40v1m0 88v1m0 7v3m0 13v2m0 61v2m1-645v1m0 65v1m0 89v2m0 17v1m0 64v1m0 112v1m0 64v1m0 105v1m0 32v3m0 2v2m0 81v1m1-581v1m0 110v2m0 61v1m0 114v1m0 62v1m0 103v2m0 2v3m0 32v2m0 84v1m1-583v1m0 113v1m0 59v1m0 38v1m0 77v1m0 46v2m0 11v2m0 48v1m0 53v2m0 7v2m0 117v2m0 23v1m1-610v1m0 173v1m0 37v2m0 79v1m0 47v2m0 8v1m0 102v2m0 11v2m0 117v1m0 1v1m0 6v14m1-610v1m0 172v2m0 37v1m0 131v2m0 5v1m0 102v1m0 15v1m0 119v6m1-610v2m0 11v1m0 172v1m0 38v1m0 134v2m0 1v2m0 17v2m0 82v2m0 17v3m1-486v7m0 3v1m0 211v1m0 85v1m0 51v1m0 21v2m0 52v4m0 18v5m0 23v3m1-566v5m0 79v3m0 144v1m0 154v1m0 74v2m0 6v7m0 13v1m0 27v8m0 6v4m0 31v1m0 108v1m1-681v5m0 229v2m0 2v1m0 153v1m0 48v1m0 26v6m0 7v2m0 47v4m0 1v1m1-545v9m0 232v2m0 5v1m0 153v1m0 44v3m0 42v2m0 178v1m1-675v2m0 239v2m0 8v2m0 49v1m0 49v1m0 52v2m0 40v2m0 47v2m0 175v1m1-435v2m0 12v2m0 69v1m0 25v1m0 2v3m0 51v2m0 37v1m0 51v2m0 172v1m1-456v2m0 18v2m0 16v2m0 16v1m0 51v2m0 22v1m0 6v2m0 51v2m0 34v1m0 54v1m0 170v1m1-453v10m0 7v1m0 20v2m0 13v1m0 27v1m0 26v2m0 19v1m0 9v2m0 51v3m0 30v1m0 225v1m0 78v14m1-534v3m0 2v2m0 23v1m0 11v1m0 57v3m0 15v1m0 12v2m0 52v2m0 6v4m0 17v1m0 77v6m0 142v1m1-635v2m0 195v2m0 26v1m0 71v2m0 12v1m0 15v2m0 11v1m0 40v6m0 5v1m0 13v2m0 72v6m0 146v2m0 52v1m1-685v6m0 218v1m0 72v1m0 10v1m0 27v2m0 2v2m0 49v2m0 10v1m0 225v1m1-624v2m0 217v2m0 5v1m0 65v2m0 7v1m0 26v2m0 6v1m0 50v1m0 8v1m0 225v1m1-621v3m0 216v1m0 72v4m0 2v1m0 25v2m0 9v2m0 50v1m0 5v1m0 58v5m0 25v1m0 97v39m1-616v3m0 96v1m0 117v2m0 75v1m0 24v2m0 13v2m0 49v2m0 2v1m0 51v7m1-445v1m0 1v1m0 94v2m0 14v2m0 101v1m0 62v1m0 35v1m0 17v2m0 44v1m0 4v2m0 43v2m0 15v6m0 1v9m0 72v1m1-532v1m0 95v1m0 11v2m0 104v1m0 117v1m0 102v7m0 33v1m0 53v2m1-530v1m0 95v2m0 7v2m0 107v1m0 117v1m0 5v1m0 64v1m0 9v4m0 8v2m0 48v1m0 50v2m0 142v20m1-592v1m0 5v1m0 168v1m0 59v1m0 39v1m0 30v3m0 1v2m0 114v2m1-506v1m0 26v2m0 50v2m0 1v2m0 230v2m0 185v3m1-522v1m0 15v2m0 1v3m0 25v2m0 19v2m0 144v1m0 119v1m0 140v1m0 41v2m1-518v2m0 11v2m0 6v3m0 24v2m0 15v2m0 2v1m0 198v1m0 99v1m0 36v1m0 69v1m0 38v2m1-514v1m0 6v4m0 11v3m0 23v4m0 9v2m0 5v1m0 442v1m0 107v1m1-615v2m0 18v3m0 24v2m0 5v2m0 8v1m0 161v2m0 275v3m0 106v2m1-616v2m0 23v2m0 24v2m0 2v1m0 11v1m0 157v3m0 2v2m0 29v1m0 68v1m0 10v4m0 15v1m0 41v1m0 87v1m0 122v1m1-403v1m0 11v2m0 7v2m0 95v1m0 8v3m0 4v6m0 5v4m0 129v1m0 15v1m0 105v2m1-401v1m0 8v2m0 11v2m0 92v1m0 7v2m0 13v5m0 132v1m0 17v1m0 102v2m1-398v1m0 5v2m0 15v1m0 22v1m0 67v1m0 5v3m0 68v1m0 82v1m0 19v3m0 97v2m1-393v3m0 18v1m0 20v1m0 67v1m0 4v2m0 153v1m0 23v3m0 93v1m1-369v1m0 1v1m0 16v1m0 45v2m0 19v2m0 187v2m1-358v3m0 56v1m0 24v2m0 62v3m0 15v1m0 79v2m0 2v1m0 28v7m0 72v2m1-362v2m0 3v13m0 44v1m0 20v1m0 4v1m0 64v2m0 11v2m0 76v4m0 5v4m0 14v10m0 81v1m1-345v5m0 34v1m0 5v2m0 17v1m0 6v2m0 64v2m0 8v1m0 76v2m0 13v4m0 4v6m0 92v3m0 8v2m1-311v1m0 14v2m0 9v4m0 62v4m0 3v1m0 75v2m0 19v4m0 63v1m0 37v3m0 3v2m1-430v1m0 121v2m0 11v1m0 15v4m0 34v2m0 26v2m0 75v2m0 129v3m0 135v2m1-568v2m0 2v7m0 103v1m0 12v1m0 9v1m0 21v1m0 26v6m0 103v2m0 268v1m1-571v5m0 11v4m0 113v2m0 6v1m0 23v2m0 21v3m0 82v1m0 25v1m0 269v1m1-612v1m0 38v3m0 20v3m0 112v1m0 4v1m0 26v3m0 12v6m0 82v2m0 2v3m0 21v1m0 269v1m1-575v3m0 120v1m0 18v2m0 1v1m0 30v3m0 3v6m0 86v2m0 7v3m0 94v15m0 178v1m1-576v2m0 179v1m0 1v1m0 90v2m0 12v3m0 74v2m0 12v3m1-384v2m0 291v2m0 11v1m0 62v1m0 7v4m1-383v2m0 125v1m0 169v1m0 9v1m0 64v2m0 2v3m0 194v5m0 56v1m1-638v3m0 298v1m0 7v1m0 68v1m0 187v10m1-578v2m0 302v2m0 223v24m0 3v7m0 1v4m1-648v1m0 50v1m0 27v1m0 130v1m0 175v1m0 118v1m0 127v3m1-587v2m0 27v1m0 308v1m0 110v7m0 2v2m1-462v2m0 27v2m0 339v3m0 77v1m0 11v1m1-507v1m0 41v2m0 27v2m0 314v2m0 28v6m0 84v1m1-507v1m0 37v3m0 347v3m0 31v5m0 80v1m0 179v2m1-688v1m0 35v1m0 353v2m0 34v3m0 78v2m0 179v7m1-694v1m0 48v1m0 341v3m0 34v1m0 79v1m0 185v9m1-702v1m0 392v2m0 11v2m0 44v2m0 1v1m0 52v1m0 193v5m1-706v1m0 393v2m0 4v5m0 44v2m0 4v1m0 52v1m1-522v1m0 13v1m0 394v4m0 47v2m0 7v1m0 52v2m1-525v1m0 15v2m0 72v1m0 168v1m0 1v1m0 198v1m0 10v1m1-473v1m0 18v3m0 70v1m0 162v5m0 199v2m1-462v1m0 22v2m0 69v1m0 85v2m0 67v7m0 52v1m0 149v2m1-461v1m0 25v1m0 69v1m0 78v6m0 66v3m0 58v1m0 148v2m0 17v1m1-478v1m0 27v2m0 68v1m0 74v3m0 66v6m0 60v1m0 84v1m0 63v1m0 20v1m1-480v1m0 30v1m0 68v1m0 19v2m0 47v5m0 66v1m0 1v1m0 43v1m0 20v2m0 81v4m0 62v2m0 22v1m1-483v2m0 32v1m0 68v2m0 13v4m0 164v1m0 2v3m0 16v1m0 79v4m0 65v1m0 25v1m1-490v6m0 35v1m0 57v1m0 11v1m0 9v3m0 154v1m0 12v1m0 6v3m0 11v2m0 77v3m0 67v2m0 25v1m1-492v3m0 98v1m0 19v3m0 125v1m0 32v1m0 21v3m0 7v1m0 75v4m0 69v1m0 26v1m1-495v4m0 118v3m0 126v2m0 58v3m0 2v2m0 72v4m0 48v1m0 22v2m0 26v1m1-496v2m0 50v1m0 70v1m0 127v2m0 45v1m0 17v2m0 73v1m0 61v1m1-158v2m0 153v2m0 1v1m0 10v1m0 35v1m1-207v1m0 154v1m0 4v1m0 8v1m0 10v5m0 13v1m1-390v1m0 189v1m0 93v1m0 59v2m0 6v1m0 5v2m0 16v8m0 4v1m1-390v1m0 353v1m0 3v1m0 26v4m1-437v1m0 164v1m0 237v1m0 1v1m0 12v1m1-418v1m0 161v1m0 2v4m0 161v1m0 72v1m1-403v1m0 159v1m0 7v2m0 278v2m1-291v1m0 10v2m0 278v2m0 228v7m1-529v1m0 13v3m0 152v1m0 124v2m0 14v9m0 187v16m1-678v1m0 134v5m0 15v1m0 17v2m0 277v2m0 21v8m1-343v2m0 11v2m0 299v2m0 150v4m1-468v2m0 8v1m0 170v1m0 132v2m0 8v1m0 143v6m1-472v2m0 5v1m0 170v1m0 2v4m0 31v1m0 43v1m0 53v2m0 7v1m0 148v5m1-475v5m0 178v4m0 28v2m0 97v2m0 6v1m1-136v3m0 27v1m0 98v2m0 5v2m1-151v1m0 15v4m0 24v1m0 99v2m0 5v1m1-153v1m0 20v4m0 21v1m0 106v1m1-129v2m0 20v2m0 105v1m1-128v1m0 21v1m0 105v2m1-159v1m0 29v2m0 20v4m0 59v1m0 43v1m1-128v1m0 23v5m0 31v1m0 23v1m0 43v1m1-128v1m0 27v2m0 30v1m0 23v1m0 43v1m1-128v2m0 27v3m0 28v1m0 23v1m1-83v1m0 29v3m0 26v2m0 22v1m1-83v1m0 31v2m0 26v1m0 22v1m1-83v2m0 31v3m0 24v1m0 22v1m1-82v1m0 33v2m0 23v1m0 22v1"/><path transform="translate(0 .5)" stroke="#806c12" d="M0 0m238 8h2m358 30h2m-401 3h2m-2 1h2m257 10h2m-157 1h6m147 0h2m-159 1h4m6 0h2m143 0h2m-189 1h2m27 0h3m12 0h2m139 0h2m-185 1h3m22 0h2m17 0h2m135 0h2m-180 1h2m17 0h3m154 0h2m-176 1h2m13 0h2m25 0h2m124 0h6m-172 1h8m3 0h2m29 0h3m117 0h4m-158 1h3m34 0h2m112 0h3m-222 1h2m-4 1h2m110 2h2m-118 1h2m-4 1h2m119 0h2m-125 1h2m-4 1h2m-6 2h3m595 2h7m-9 1h2m-460 1h2m454 0h2m-4 1h2m-453 1h2m446 0h3m-449 1h2m441 0h3m-9 1h6m-8 1h2m-4 1h2m-5 1h3m-7 1h4m-6 1h2m-4 1h2m-415 1h2m409 0h2m-4 1h2m-408 1h2m402 0h2m-4 1h2m-401 1h2m394 1h2m-395 1h2m388 0h3m-5 1h2m-4 1h2m-4 1h2m-5 1h3m-5 1h2m-139 1h2m132 1h2m-346 1h9m333 0h2m-346 1h2m9 0h4m326 0h3m-346 1h2m15 0h6m0 1h6m-45 1h2m43 0h3m307 0h2m-345 1h2m34 0h3m174 0h2m126 0h2m-352 1h2m46 0h2m0 1h2m295 0h2m-297 1h2m-50 1h2m48 0h2m288 0h2m-4 1h2m-337 1h2m331 0h2m-333 1h2m327 0h2m-6 3h2m-322 1h2m316 0h2m-4 1h2m-4 1h2m-312 1h2m306 0h2m-109 1h2m102 0h3m-305 1h2m298 0h2m-5 2h2m-4 1h2m-4 1h2m-4 1h2m-4 1h2m-5 1h3m-5 1h2m-5 2h2m-275 1h2m27 0h17m225 0h2m-250 1h6m17 0h4m218 0h3m-272 1h3m15 0h6m27 0h4m212 0h2m-268 1h3m10 0h4m37 0h4m-56 1h2m4 0h5m45 0h4m32 0h10m159 0h2m-270 1h2m4 0h2m1 0h4m54 0h4m19 0h9m10 0h3m154 0h2m-270 1h2m71 0h4m13 0h2m22 0h4m-41 1h4m7 0h2m28 0h3m-124 1h2m82 0h3m2 0h2m176 0h2m-182 1h2m-104 1h4m6 0h4m127 0h2m-145 1h2m4 0h6m-213 1h2m197 0h2m146 0h2m131 0h2m-286 1h3m278 0h3m-287 1h3m154 0h2m123 0h2m-290 1h6m159 0h2m119 0h2m-293 1h5m167 0h2m87 0h15m13 0h2m-295 1h4m174 0h2m78 0h2m2 0h3m15 0h13m16 0h2m-313 1h2m180 0h2m77 0h3m-266 1h2m184 0h2m73 0h2m-265 1h2m259 0h2m-72 1h2m66 0h2m-264 1h2m195 1h2m60 0h2m-183 1h2m177 0h2m-59 1h2m53 0h2m-176 1h2m132 0h3m-238 1h13m88 0h2m120 0h2m2 0h8m3 0h3m31 0h3m-284 1h9m98 0h3m124 0h2m14 0h3m24 0h4m-284 1h3m63 0h2m39 0h3m146 0h10m7 0h7m5 0h2m-293 1h6m104 0h3m159 0h7m7 0h5m-294 1h3m106 0h4m173 0h3m-292 1h3m79 0h4m22 0h4m-127 1h15m86 0h6m14 0h2m-129 1h6m107 0h4m8 0h2m-131 1h4m117 0h8m-132 1h3m-6 1h3m-5 1h2m408 0h2m-414 1h2m-7 1h5m-7 1h2m530 0h9m-543 1h2m525 0h7m9 0h3m-548 1h2m518 0h9m19 0h2m-552 1h2m514 0h6m-525 1h3m513 0h3m-521 1h2m513 0h3m-520 1h2m512 0h3m-519 1h2m511 0h3m-516 1h2m505 0h6m-515 1h2m501 0h6m-511 1h2m442 0h2m56 0h3m-508 1h3m446 0h2m47 0h7m-507 1h2m491 0h7m-503 1h3m490 0h3m-500 1h4m490 0h3m-500 1h3m488 0h6m-499 1h2m467 0h8m10 0h6m-495 1h2m477 0h10m-258 4h2m-240 6h2m-4 1h2m-4 1h2m508 0h2m-514 1h2m-4 1h2m-4 1h2m-4 1h2m-4 1h2m-4 1h2m352 1h2m178 4h2m-543 1h2m541 0h2m-547 1h2m545 0h3m0 1h4m-557 1h2m555 0h2m-562 2h2m357 0h2m-364 1h3m-5 1h2m-14 1h4m6 0h2m-16 1h4m4 0h2m2 0h2m627 0h2m-658 1h6m8 0h2m9 0h2m627 0h2m-670 1h14m6 0h5m3 0h2m636 0h2m-672 1h4m25 0h3m374 0h2m260 0h2m-674 1h4m665 0h3m-675 1h3m666 0h3m-674 1h2m666 0h3m-673 1h2m410 0h2m252 0h4m-672 1h2m663 0h3m-670 1h2m44 0h14m353 0h2m250 0h2m-299 1h2m293 0h2m-668 1h2m371 0h5m285 0h3m-671 1h3m380 0h4m15 0h2m262 0h2m-671 1h3m387 0h2m15 0h2m258 0h2m-672 1h3m392 0h2m15 0h3m-418 1h3m397 0h2m16 0h4m248 0h2m-675 1h3m402 0h3m17 0h2m243 0h3m-675 1h2m408 0h2m258 0h2m-676 1h4m667 0h3m-678 1h4m-7 1h3m673 0h3m-682 1h3m674 0h2m-682 1h3m674 0h3m-683 1h3m675 0h2m-684 1h4m453 0h2m221 0h2m-685 1h3m459 0h2m217 0h2m-685 1h2m464 0h2m213 0h2m-686 1h3m468 0h2m-476 1h3m681 0h2m-689 1h3m-7 1h4m684 0h2m-697 1h7m686 0h3m-699 1h3m688 0h5m-707 1h11m689 0h2m-725 1h23m698 0h2m-4 1h2m15 7h2m3 4h2m-34 1h2m33 1h2m0 1h2m-43 1h2m41 0h2m-48 1h3m-5 1h2m49 0h2m-55 1h2m53 0h2m-60 1h3m57 0h2m-65 1h3m62 0h2m-70 1h3m67 0h2m-74 1h2m72 0h2m-78 1h2m-5 1h3m78 0h2m-87 1h4m-6 1h2m-4 1h2m-4 1h2m94 0h2m-101 1h3m-5 1h2m-5 2h2m107 0h2m-114 2h2m-5 2h2m121 3h2m-132 4h2m132 0h2m0 1h2m0 1h2m-144 1h2m142 0h2m-149 2h2m148 0h2m-155 2h2m-5 2h2m-4 1h2m-4 1h2m-4 1h2m-4 1h2m-4 1h2m-4 1h2m-4 1h2m-5 1h3m-6 1h3m-69 1h2m61 0h3m-64 1h4m53 0h4m-57 1h3m47 0h3m-6 1h3m-46 1h2m39 0h2m-43 1h2m37 0h2m-4 1h2m-153 4h2m-4 1h2m-4 1h2m-4 1h2m148 0h2m-22 2h11m6 0h2m-8 1h4m-1 1h2m-3 1h2m-152 1h2m146 0h2m-15 1h2m224 1h2m-226 1h2m-144 1h2m141 0h4m-149 1h2m147 0h2m-153 1h2m-5 1h3m-5 1h2m136 0h4m12 0h2m212 0h2m-235 1h3m4 0h6m6 0h2m210 0h2m-236 1h3m12 0h3m4 0h2m-27 1h3m18 0h3m1 0h2m-34 1h7m24 0h3m206 0h2m-252 1h10m32 0h2m-53 1h9m42 0h4m201 0h2m-263 1h5m55 0h20m-84 1h4m56 0h6m18 0h2m176 0h2m-271 1h7m60 0h3m7 0h2m14 0h2m172 0h2m-363 1h2m88 0h4m66 0h3m5 0h3m18 0h2m168 0h2m-363 1h2m83 0h7m68 0h3m5 0h2m23 0h2m-117 1h7m81 0h2m190 0h2m-289 1h7m80 0h3m1 0h4m1 0h2m27 0h2m-39 1h3m6 0h2m28 0h3m154 0h2m-296 1h10m97 0h2m31 0h4m148 0h2m-336 1h15m23 0h4m108 0h2m34 0h7m139 0h2m-340 1h6m15 0h3m17 0h3m98 0h2m13 0h2m40 0h9m-212 1h4m24 0h5m7 0h5m167 0h7m120 0h2m-347 1h6m33 0h7m103 0h2m17 0h2m55 0h4m-237 1h8m169 0h2m58 0h6m107 0h2m-356 1h5m153 0h2m87 0h19m-272 1h6m266 0h9m76 0h2m-363 1h4m161 0h2m118 0h15m-302 1h2m300 0h7m8 0h4m39 0h2m-364 1h2m309 0h8m4 0h22m13 0h4m-17 1h13m-351 9h3m-6 2h2m-5 2h2m-11 1h9m-18 7h2m-6 3h2m-4 1h2m-6 1h4m-10 1h6m-192 1h2m172 0h12m-16 1h4m-7 1h3m-6 2h2m277 10h2m-85 1h2m-4 1h2m-4 1h2m-207 1h2m297 4h3m-1 1h4m-312 1h2m308 0h3m-1 1h2m0 1h3m-1 2h2m-1 1h2m-326 2h2m317 4h2m-331 7h2m344 1h2m1 2h2m1 2h2m-150 2h2m149 0h2m-156 2h2m155 0h2m0 1h2m-164 1h2m162 0h2m-168 1h2m166 0h2m-172 1h2m170 0h2m-176 1h2m174 0h3m-181 1h2m179 0h3m-186 1h2m184 0h3m-191 1h2m189 0h3m-678 1h8m275 0h2m197 0h2m194 0h4m-674 1h7m464 0h3m200 0h9m-676 1h14m446 0h4m212 0h3m-665 1h7m436 0h3m219 0h3m-661 1h7m235 0h2m189 0h3m225 0h3m-657 1h6m225 0h4m188 0h3m231 0h3m-654 1h8m215 0h2m190 0h2m237 0h7m-653 1h9m204 0h2m190 0h2m246 0h6m-650 1h2m199 0h3m190 0h2m254 0h8m-656 1h2m76 0h2m114 0h5m191 0h2m264 0h3m-657 1h3m187 0h2m194 0h2m269 0h4m-658 1h3m67 0h2m112 0h3m191 0h5m275 0h7m-662 1h3m34 0h15m13 0h2m111 0h3m176 0h9m6 0h3m287 0h10m-669 1h3m19 0h12m15 0h4m102 0h20m188 0h6m300 0h8m-674 1h3m10 0h6m31 0h3m85 0h14m522 0h2m-673 1h3m3 0h4m40 0h3m51 0h14m7 0h10m538 0h2m-672 1h3m47 0h2m46 0h3m14 0h7m550 0h2m-622 1h2m38 0h6m576 0h3m-614 1h7m13 0h9m585 0h3m-626 1h3m2 0h4m7 0h13m597 0h3m-628 1h4m624 0h3m0 1h2m0 1h3m0 1h4m0 1h3m0 1h3m0 1h3m0 1h2m-402 59h2m-25 22h2m-5 2h2m-6 4h2m-5 2h2m-4 1h2m-5 2h2m-8 5h2m-4 1h2m-6 3h2m-5 2h2m-4 1h2m-5 2h2m-4 1h2m-5 1h3m-6 1h3m-7 1h4m-7 1h3m-6 1h3m-119 1h2m112 0h2m-5 1h3m-5 1h2m-4 1h2m159 12h14m25 0h2m-79 1h10m24 0h4m14 0h9m4 0h7m3 0h2m2 0h2m-87 1h6m3 0h3m3 0h4m18 0h3m27 0h4m7 0h3m6 0h2m-105 1h25m8 0h6m7 0h7m52 0h2m-111 1h4m1 0h4m34 0h7m61 0h3m-118 1h9m36 0h2m7 0h7m57 0h4m-125 1h5m45 0h7m67 0h3m140 0h2m-362 1h2m89 0h4m125 0h2m-224 1h10m81 0h3m129 0h4m-230 1h5m8 0h16m63 0h2m133 0h2m1 0h4m-205 1h4m196 0h3m2 0h3m-237 1h2m31 0h4m52 0h2m141 0h12m-245 1h2m36 0h2m203 0h5m-208 1h2m205 0h3m-208 1h2m206 0h2m-208 1h2m206 0h2m-208 1h3m205 0h3m-208 1h7m27 0h2m172 0h2m-203 1h2m201 0h2m-203 1h2m20 0h2m179 0h2m-271 1h2m66 0h2m16 0h2m183 0h2m-275 1h2m70 0h3m11 0h2m187 0h5m-282 1h2m75 0h3m6 0h2m194 0h2m-287 1h3m80 0h6m211 0h12m7 0h4m71 0h2m-400 1h4m288 0h2m7 0h3m16 0h3m4 0h4m69 0h2m-580 1h26m149 0h3m294 0h7m14 0h5m11 0h3m-518 1h6m26 0h10m137 0h2m337 0h3m-525 1h4m42 0h3m91 0h9m30 0h4m342 0h6m-569 1h14m22 0h2m49 0h4m84 0h3m9 0h11m13 0h6m352 0h2m59 0h2m-638 1h6m14 0h7m13 0h2m55 0h3m75 0h6m23 0h13m360 0h9m-588 1h2m27 0h6m5 0h2m60 0h4m68 0h3m411 0h3m50 0h2m90 0h2m-737 1h2m35 0h5m66 0h2m62 0h4m417 0h3m137 0h2m-738 1h3m110 0h2m57 0h3m424 0h7m128 0h2m-739 1h3m115 0h2m52 0h3m434 0h3m-616 1h4m120 0h3m45 0h4m440 0h3m-622 1h3m127 0h2m40 0h3m447 0h3m-628 1h3m132 0h2m33 0h5m453 0h16m-647 1h3m137 0h4m27 0h2m474 0h9m-659 1h3m144 0h4m20 0h3m485 0h6m89 0h2m-758 1h2m151 0h3m14 0h3m494 0h2m80 0h7m-758 1h2m155 0h2m8 0h5m499 0h2m74 0h4m-754 1h3m159 0h8m506 0h3m65 0h6m-752 1h2m164 0h2m513 0h2m59 0h4m-749 1h3m165 0h2m569 0h6m-746 1h2m167 0h2m517 0h2m48 0h2m-746 1h6m707 0h15m10 0h6m-746 1h2m174 0h2m521 0h3m6 0h7m15 0h3m4 0h3m-650 1h2m609 0h7m25 0h4m-562 1h2m-3 2h2m598 0h2m10 0h2m-693 1h2m679 0h2m6 0h2m-8 1h2m2 0h2m-686 1h2m680 0h2m-682 1h6m0 1h3m0 1h10m0 1h4m0 1h3m0 1h4m0 1h2m0 1h2m0 1h3m28 0h2m-30 1h2m24 0h2m-26 1h2m20 0h2m-21 2h2m14 0h2m-16 1h3m0 1h3m0 1h2m2 0h2m-4 1h2"/><path transform="translate(.5 0)" stroke="#806c12" d="M0 0m6 257v1m0 358v1m1 0v1m1 0v1m1 0v1m1 0v1m1 0v1m0 19v3m1-22v5m0 7v7m0 3v7m1-24v7m0 17v3m1 0v4m1 2v1m73-14v1m1 0v4m1 0v3m1 0v2m1 0v1m1 0v1m1 0v2m1 0v1m3 1v1m1 0v1m1 0v1m3 1v1m7-433v1m1-2v1m3-3v1m11 372v3m1-8v5m0 3v20m1 0v10m1-69v4m0 3v25m0 37v2m1-87v16m0 4v3m0 65v1m1-100v11m0 89v1m0 28v2m1-142v11m0 101v2m0 23v3m1-143v3m0 114v2m0 19v2m1-146v6m0 119v2m0 15v2m1-147v3m0 127v2m0 7v6m1-154v9m0 132v3m0 2v2m1-151v3m0 144v2m1-151v2m1-4v2m1-4v2m1-4v2m1-4v2m1-4v2m1-4v2m1-4v2m1-289v5m0 280v2m1-290v3m0 5v4m0 260v3m0 11v2m1-290v2m0 12v1m0 262v1m0 1v1m0 6v2m0 193v1m1-484v2m0 15v2m0 266v3m1-289v1m0 19v2m0 263v1m1-287v1m0 22v3m0 257v1m1-285v1m0 26v2m0 247v1m0 5v2m1-286v2m0 278v4m1-286v2m0 278v2m1-284v2m0 277v2m1-282v1m0 277v2m1-282v2m0 275v3m1-282v2m0 270v7m1-281v2m0 269v3m1-276v2m0 268v3m1-274v1m0 48v3m0 216v3m1-273v2m0 48v1m0 3v1m0 202v13m1-271v1m0 254v3m0 250v1m1-511v2m0 50v6m0 1v1m0 193v4m0 252v1m1-511v1m0 60v4m0 187v2m1-256v2m0 65v6m0 180v1m1-255v1m0 73v7m0 172v1m0 257v1m1-514v2m0 81v8m0 162v2m1-257v2m0 91v9m0 151v2m1-257v2m0 102v6m0 143v2m1-257v2m0 110v3m0 139v1m1-256v1m0 115v4m0 133v2m1-256v1m0 120v6m0 6v8m0 7v8m0 96v2m1-256v2m0 127v6m0 8v7m0 8v6m0 87v3m0 265v1m1-529v4m0 4v1m0 67v1m0 4v2m0 90v2m0 83v2m0 267v1m1-530v2m0 4v4m0 69v4m0 94v7m0 74v2m0 268v1m1-531v2m0 184v7m0 65v2m0 269v1m1-337v7m0 57v1m0 270v1m1-329v3m0 52v1m0 271v1m1-530v1m0 204v6m0 42v4m0 271v1m1-530v1m0 211v3m0 36v3m0 269v1m0 3v2m1-531v2m0 215v7m0 26v3m0 270v1m0 3v2m1-662v1m0 130v2m0 224v3m0 8v4m0 3v8m0 271v1m0 3v1m1-658v2m0 125v3m0 229v8m0 4v3m0 281v1m1-654v1m0 120v4m0 526v1m1-651v1m0 116v3m0 521v5m1-645v1m0 110v5m0 90v1m0 430v3m1-639v2m0 101v7m0 523v3m1-634v2m0 95v4m0 528v2m1-629v2m0 92v1m0 104v1m0 424v3m1-625v1m0 89v2m0 526v4m1-621v2m0 86v1m0 525v3m1-615v3m0 82v1m0 524v2m1-609v3m0 77v2m0 521v4m1-604v3m0 72v2m0 108v1m0 411v3m1-597v3m0 67v2m0 109v1m0 410v2m1-591v2m0 63v2m0 110v1m0 406v5m1-587v3m0 58v2m0 111v1m0 405v2m1-579v3m0 53v2m0 112v1m0 405v1m1-523v2m0 518v2m1-571v27m0 1v21m0 518v2m1-4v2m1-3v1m1-539v1m0 535v2m1-4v2m1-4v2m2-4v1m1-3v2m1-4v2m1-7v5m1-8v3m1-526v1m0 519v3m1-524v1m0 512v8m1-23v15m1-22v7m1-10v3m1-356v1m0 350v2m1-491v1m0 136v1m0 349v2m1-490v1m0 136v1m0 349v1m1-490v2m0 136v1m0 349v1m1-490v1m0 136v2m0 349v1m1-490v1m0 134v3m0 350v1m1-490v1m0 486v2m1-491v2m0 486v1m1-490v1m0 486v2m1-490v1m0 486v1m1-506v18m0 486v1m1-514v9m0 503v1m1-516v3m0 511v1m1-517v2m0 512v2m1-518v2m0 513v1m1-518v2m0 513v2m1-518v1m0 514v1m1-517v1m0 513v2m1-517v1m0 512v2m1-516v1m0 506v7m1-515v1m0 504v3m1-4v1m1-3v2m1-506v1m0 502v1m1-503v1m0 500v1m1-501v1m0 498v1m1-499v1m0 496v1m1-497v1m0 492v3m1-495v1m0 488v3m1-491v2m0 484v2m1-486v2m0 480v2m1-482v2m0 476v2m1-478v1m0 472v3m1-475v2m0 467v3m1-470v1m0 460v6m1-466v1m0 457v2m1-459v1m0 455v1m1-456v2m0 452v1m1-453v1m0 450v1m1-451v1m0 448v1m1-449v1m0 446v1m1-447v2m0 442v2m1-444v2m1 0v2m1 0v3m1 0v3m1 0v8m1 0v2m1 0v1m1 0v2m20 408v1m1-2v1m1-2v1m3-3v1m1-2v1m1-2v1m1-2v1m1-2v1m1-3v2m1-3v1m1-3v2m0 182v1m1-186v1m0 183v1m1-187v2m0 183v1m1-187v1m0 184v1m1-188v2m0 184v1m1-188v1m0 185v1m1-2v1m1-6v1m0 1v1m1-185v1m0 171v10m1-184v2m0 169v3m0 12v1m1-188v1m0 169v2m1-174v2m0 169v1m1-173v1m0 170v1m1-173v1m0 170v1m1-173v1m0 170v1m1-173v1m2-376v1m1 372v1m1-2v1m1-2v1m1-3v2m1-3v1m3-365v1m0 361v1m1-362v1m0 359v1m1-360v1m0 357v1m1-2v1m1-2v1m1-355v1m2 351v1m1-351v1m0 348v1m1-349v1m0 345v2m1-347v1m0 343v1m1-344v1m0 341v1m1-342v1m0 339v1m1-340v1m0 337v1m1-338v1m0 334v2m1-3v1m1-251v1m0 248v1m1-332v1m0 84v1m0 244v1m1-247v1m1-2v1m0 433v1m1-437v2m0 245v1m1-249v1m1-78v1m0 75v1m1-76v1m1 0v1m0 508v1m1-509v1m0 70v1m1-71v1m1 0v1m0 503v1m1-504v1m0 501v1m3-501v1m2 496v1m1-496v1m0 493v1m1-2v1m1-2v1m1-491v1m2 487v1m1-487v1m1 0v1m1 0v1m0 39v3m1-42v1m0 35v3m0 3v4m1-45v1m0 32v2m0 10v3m0 431v1m1-479v1m0 29v2m0 15v2m1-48v1m0 27v1m0 20v2m1-50v2m0 23v2m0 23v1m0 423v1m1-473v1m0 21v1m0 26v2m0 419v2m1-471v1m0 18v2m0 29v1m1-34v2m0 32v1m1-37v2m0 35v1m0 414v1m1-466v1m0 10v2m0 38v1m1-42v1m0 41v1m1-45v2m0 43v1m0 237v1m0 171v1m1-462v1m0 4v1m0 46v1m0 235v1m0 171v1m1-460v1m0 2v1m0 48v1m0 405v1m1-457v1m0 454v1m1-173v1m0 170v1m1-457v1m0 1v1m0 51v1m0 229v1m0 170v1m1-457v1m0 55v1m0 227v1m0 170v1m1-457v1m0 283v1m0 170v1m1-174v2m0 170v1m1-174v1m0 171v1m0 74v1m1-531v1m0 8v1m0 271v2m0 171v1m1-456v1m0 10v1m0 269v1m0 172v1m1-443v1m0 266v2m0 172v1m0 75v1m1-253v2m0 173v1m0 75v1m1-254v2m0 174v1m0 75v1m1-514v1m0 258v2m0 175v1m0 75v1m1-512v1m0 256v1m0 176v1m0 75v1m1-488v1m0 114v7m0 111v1m0 176v1m1-302v6m0 7v13m0 24v3m0 70v1m0 176v1m1-431v1m0 58v20m0 48v3m0 26v14m0 4v6m0 3v7m0 239v1m0 76v1m1-488v1m0 33v6m0 20v3m0 42v3m0 43v4m0 16v7m0 231v1m1-379v3m0 69v2m0 73v15m1-210v1m0 45v2m0 70v2m0 90v2m0 51v1m1-263v1m0 40v3m0 72v1m0 94v3m0 205v2m0 2v1m1-423v1m0 34v5m0 173v3m0 13v9m0 179v1m1-417v1m0 10v1m0 17v5m0 181v13m0 9v8m0 1v5m0 7v1m0 156v1m1-415v2m0 7v1m0 15v3m0 222v3m0 12v6m0 142v1m1-412v4m0 17v2m0 228v2m0 4v6m0 6v4m0 136v2m1-406v1m0 2v1m0 7v5m0 232v1m0 1v2m0 16v2m0 133v1m1-399v6m0 235v2m0 22v2m0 129v2m1-406v2m0 246v1m0 26v3m0 125v1m1-405v1m0 8v2m0 236v2m0 30v3m0 121v1m1-421v8m0 5v4m0 11v1m0 234v1m0 35v3m0 116v2m1-422v2m0 8v5m0 16v1m0 231v2m0 39v3m0 111v2m1-422v2m0 32v1m0 229v1m0 44v2m0 107v2m1-421v1m0 35v2m0 225v2m0 47v2m0 103v2m1-421v2m0 38v1m0 223v1m0 51v1m0 100v2m1-420v1m0 41v1m0 218v2m0 55v2m0 97v1m1-375v1m0 215v2m0 59v1m0 94v2m1-420v2m0 45v1m0 213v1m0 62v2m0 91v1m1-419v1m0 48v1m0 210v2m0 65v2m0 87v2m1-420v2m0 50v1m0 208v1m0 69v2m0 84v1m1-421v3m0 53v1m0 279v2m0 80v2m1-423v3m0 57v1m0 280v3m0 76v1m1-423v2m0 61v1m0 282v3m0 71v2m1-425v3m0 64v1m0 284v2m0 66v3m1-425v2m0 68v1m0 198v3m0 84v2m0 62v2m1-424v2m0 266v3m0 89v2m0 58v2m1-424v2m0 267v1m0 94v2m0 54v2m1-424v2m0 76v1m0 191v1m0 97v2m0 50v2m1-424v2m0 269v1m0 100v2m0 46v2m1-424v2m0 80v1m0 293v2m0 42v2m1-424v2m0 77v5m0 3v1m0 292v2m0 38v2m1-424v2m0 75v4m0 9v1m0 293v2m0 35v1m1-423v1m0 74v3m0 14v2m0 293v2m0 31v2m1-424v2m0 40v1m0 32v2m0 19v1m0 294v2m0 28v1m1-424v2m0 43v1m0 28v3m0 22v1m0 295v2m0 24v2m1-426v3m0 46v1m0 25v2m0 26v2m0 295v1m0 22v1m1-425v1m0 50v4m0 19v2m0 30v2m0 294v2m0 18v2m1-369v8m0 6v1m0 1v3m0 34v2m0 294v2m0 15v1m1-359v6m0 41v2m0 294v2m0 7v6m1-309v2m0 294v2m0 2v3m1-301v1m0 165v1m0 129v1m1-296v1m0 163v1m1-164v2m0 160v1m1-161v1m1 0v2m1 0v2m0 153v1m1-154v2m0 150v1m1-151v1m0 148v1m1-149v1m0 146v1m1-147v2m0 143v1m1 285v1m1-430v1m1 0v1m1 0v1m3 1v1m1 0v2m1 0v1m0 130v1m1-131v1m0 127v2m1-129v1m0 124v2m1-275v1m0 148v1m0 121v2m1-274v1m0 150v1m0 118v2m1-273v1m0 152v1m0 115v2m1-272v1m0 154v1m0 112v2m1-272v2m0 156v1m0 110v1m1-272v2m0 159v2m0 107v1m1-274v3m0 163v1m0 105v1m1-275v2m0 167v2m0 102v1m1-275v1m0 171v1m0 99v2m1-276v2m0 173v2m0 95v2m1-277v3m0 177v1m0 92v2m1-297v8m0 7v7m0 181v1m0 89v2m1-299v4m0 8v7m0 189v1m0 86v2m1-298v1m0 209v2m0 83v1m1-84v2m0 80v1m1-81v1m0 78v1m1-79v1m0 75v2m1-77v2m0 72v1m1-73v1m0 69v2m1-71v1m0 67v1m1-68v2m0 63v2m1-65v1m0 60v2m1-62v2m0 56v2m1-58v1m0 53v2m1-4v2m1-4v2m1-3v1m1-3v2m1-4v2m1-4v2m1-4v2m1-3v1m1-2v1m1-3v2m1-3v1m1-7v6m1-9v3m1-6v3m1-6v3m1-7v4m1-6v2m1-4v2m1-4v2m1-4v2m1 210v1m1-215v1m1-2v1m1-2v1m0 213v1m1-216v1m2 211v2m1-3v1m1-3v2m1-3v1m1-2v1m1-2v1m1-2v1m1-3v2m1-4v2m1-299v1m0 295v1m1-296v1m0 293v1m1-2v1m1-197v1m0 1v2m0 190v2m1-291v1m0 93v1m0 4v1m0 188v1m1-196v1m0 6v2m0 184v2m1-196v1m0 9v2m0 180v2m1-284v1m0 88v1m0 191v1m1-194v1m0 191v1m1-2v1m1-3v2m1-193v1m0 189v1m1-2v1m1-2v1m1-191v1m1-2v1m0 22v5m1-29v1m0 28v2m1 0v6m1 0v3m1-42v1m0 41v4m1-119v1m0 71v1m0 46v3m0 140v2m1-193v1m0 50v3m0 136v1m1-193v2m0 54v3m0 132v1m1-259v1m0 65v1m0 59v4m0 127v1m1-128v3m0 4v1m1-5v4m0 1v2m0 116v1m1-255v1m0 61v1m0 75v2m0 110v4m1-193v1m0 78v1m0 106v3m1-190v1m0 80v1m0 103v2m1-245v1m0 56v1m0 82v1m0 101v1m1-187v1m0 84v1m0 99v1m1-187v1m0 86v1m0 97v1m1-188v2m0 88v1m0 94v2m1-188v1m0 91v2m0 88v4m1-92v1m0 83v4m1-87v2m0 77v4m1-180v1m0 98v2m0 73v2m1-177v1m0 101v8m0 63v2m1-176v1m0 110v1m0 61v1m1-176v2m0 112v2m0 57v2m1-176v1m0 172v1m1-175v1m0 172v1m1-175v1m0 172v1m1-2v1m1-2v1m1-2v1m1-172v2m1-4v2m1-4v2m0 171v1m1-175v1m0 127v1m1-131v2m1-4v2m0 133v1m0 40v1m1-178v1m0 128v5m0 3v2m1-141v2m0 125v4m0 10v2m1-144v1m0 124v3m0 16v2m0 32v1m1-180v1m0 122v3m0 21v2m0 16v4m1-170v1m0 121v2m0 26v2m0 8v3m0 2v1m0 4v3m1-174v1m0 120v2m0 30v2m0 2v4m0 13v2m0 3v1m0 275v1m1-457v1m0 120v1m0 34v1m0 22v1m1-182v2m0 120v1m0 33v2m0 2v1m0 17v1m1-180v1m0 121v1m0 33v1m1-158v1m0 121v1m0 42v1m0 14v1m1-183v2m0 121v1m0 44v2m1-172v2m0 121v2m1-126v1m0 121v2m0 56v1m0 3v2m1-187v1m0 120v2m0 49v2m1-175v1m0 184v2m1-188v1m0 171v1m1-335v15m0 145v2m0 171v1m1-336v2m0 15v2m0 142v1m0 172v1m1-316v2m0 138v2m0 172v1m0 24v1m1-338v2m0 83v1m0 50v2m1-136v2m0 80v1m0 1v2m0 249v1m1-334v1m0 78v1m0 4v1m0 251v2m1-337v2m0 75v1m0 6v2m0 220v9m0 7v1m0 14v1m1-336v1m0 73v1m0 9v1m0 228v6m0 17v2m1-337v1m0 71v1m0 227v1m0 36v2m1-338v1m0 69v1m0 267v1m1-338v1m0 67v1m0 14v1m0 254v2m1-256v1m0 211v1m0 43v1m1-300v6m0 38v1m0 255v2m1-341v1m0 1v2m0 23v1m0 9v2m0 6v1m0 15v1m0 2v1m0 19v1m0 2v1m0 30v1m0 222v1m1-338v2m0 19v2m0 19v1m0 13v1m0 27v2m0 202v1m0 49v2m1-338v1m0 15v3m0 22v2m0 10v1m0 30v1m0 200v1m0 52v2m1-339v6m0 6v3m0 27v2m0 40v2m0 196v2m0 55v3m1-336v6m0 32v4m0 38v1m0 194v1m0 60v4m1-298v3m0 36v1m0 192v1m0 65v3m1-261v1m0 260v2m1-262v2m0 16v1m0 243v2m1-262v2m0 260v2m1-262v2m0 260v2m1-262v2m0 260v2m1-262v3m0 259v2m1-261v2m0 259v2m1 0v1m1-52v1m2 51v1m1 0v1m1 0v1m1 0v1m3 1v1m1 0v2m1 0v2m1 0v1m1 0v1m1 1v1m1 0v2m1 0v2m0 30v32m0 3v7m1-72v1m0 22v7m0 32v3m0 7v4m1-75v2m0 13v7m0 53v10m1-83v2m0 4v7m0 70v2m1-83v2m0 1v1m0 79v2m1 0v3m1-87v1m0 86v3m1-97v1m0 4v2m0 90v2m1-96v2m0 94v2m1-101v1m0 100v1m1 0v2m1-101v1m0 100v1m1-101v1m0 100v2m1-102v1m0 101v2m1-103v1m0 102v2m1-104v1m0 103v3m1-106v2m0 104v2m1-106v2m0 104v2m1-237v1m0 130v2m0 104v2m1-106v1m0 105v11m1-116v1m0 115v3m1-255v1m0 254v6m1 0v3m1-126v1m0 125v3m1-269v1m0 268v6m1 0v3m1-136v1m0 135v3m1-283v1m0 282v7m1-291v1m0 290v8m1-152v1m1-307v1m0 457v1m1-460v1m0 1v2m0 153v1m0 302v2m1-463v1m0 4v1m0 151v1m0 152v1m0 152v3m1-460v1m0 149v1m0 309v2m1-461v1m0 147v1m0 312v2m1-472v1m0 155v1m0 315v3m1-476v1m0 475v3m1-467v2m0 465v1m1-466v2m0 139v1m0 324v1m1-465v2m0 463v1m1-464v1m0 463v2m1-487v1m0 21v1m0 133v1m1-134v2m1 0v2m0 461v2m1-463v2m0 125v1m0 335v2m1-463v2m0 461v1m1-462v1m0 461v1m1-462v1m0 461v1m1-462v1m0 461v1m1-462v1m0 461v2m1 0v1m1-504v1m0 503v1m1-464v1m0 463v1m1-464v1m0 463v2m1-465v2m0 463v1m1-464v3m1 0v5m2 458v2m1 0v1m1-459v1m1 0v1m1 0v1m0 457v1m1-458v1m2 458v1m1 0v2m1-528v1m0 527v1m1 0v1m1 0v1m1 0v1m1 0v1m1 0v1m0 3v1m1-4v1m1 0v1m1 0v2m0 1v1m1-2v1m1 0v1m3 2v3m1 0v2m1 0v2m1-557v1m0 556v1m1-559v1m0 558v2m1-402v1m0 401v2m1-405v1m0 404v3m1-489v2m0 487v2m1-489v1m0 488v2m1-490v2m0 74v1m0 413v4m1-492v3m0 70v1m0 418v3m1-492v4m0 65v1m0 422v4m1-428v1m0 427v6m1-592v1m0 155v2m0 434v2m1-499v1m0 59v1m0 438v2m1-500v1m0 56v2m0 441v2m1-600v1m0 98v1m0 53v2m0 445v2m1-502v1m0 501v1m1-502v1m0 501v1m1-502v1m0 501v1m1-502v1m0 501v2m1-610v1m0 106v1m0 502v2m1-613v1m0 108v1m0 503v2m1-505v1m0 504v1m1 0v1m1 0v2m1 0v1m1 0v2m1 0v2m1 0v2m1-630v1m0 156v4m0 469v3m1-472v3m0 469v3m1-482v1m0 9v2m0 470v2m1-472v1m0 471v2m1 0v3m1-491v1m0 490v3m1-478v1m0 477v4m1-530v1m0 48v1m0 480v3m1-532v1m0 48v1m0 482v6m1-537v2m0 535v3m1-538v2m0 536v7m1-543v1m0 45v1m0 496v6m1-548v1m0 547v6m1-553v1m0 552v3m1-555v2m0 553v9m1-562v2m0 560v2m1-562v2m1-143v1m0 142v2m1 0v2m0 37v1m1-38v2m1 0v2m1 1v1m0 1v3m0 123v1m1-124v6m1 0v3m1 0v4m0 108v1m1-109v3m1 0v2m1 0v3m0 98v1m1-99v4m1 0v3m1 0v5m0 1v1m0 82v1m1-128v1m2 45v1m1 0v1m1 0v1m2 74v1m1-74v1m1 0v1m0 364v2m0 1v5m1-372v1m0 68v1m0 291v3m0 8v4m1-16v1m0 15v1m2-375v1m1 0v1m1 0v1m0 306v9m1-315v1m0 303v2m0 9v13m0 23v1m1-351v1m0 58v1m0 240v3m0 24v7m0 12v4m1-349v1m0 296v2m0 34v12m1-50v2m0 53v1m1-295v1m0 237v1m0 56v2m1-351v2m0 288v2m0 59v1m1-350v1m0 286v1m0 62v1m1-301v1m0 234v2m0 64v2m1-304v1m0 234v1m0 68v3m0 6v4m0 1v1m1-85v1m0 72v6m0 6v2m1-89v2m0 87v2m1-94v3m0 91v2m1-98v2m0 96v2m1-330v1m0 227v2m0 100v2m1-333v1m0 225v3m0 104v3m1-376v1m0 38v1m0 144v1m0 74v7m0 110v2m1-340v1m0 146v1m0 66v7m0 119v2m1-343v1m0 148v1m0 51v2m0 4v8m0 128v4m1-382v1m0 184v1m0 48v2m0 2v4m0 140v3m1-384v1m0 184v1m0 44v3m0 151v4m1-624v1m0 236v1m0 30v1m0 153v1m0 41v2m0 158v2"/><path transform="translate(0 .5)" stroke="#000" d="M0 0m749 7h2m1 2h2m0 1h3m0 1h4m0 1h2m0 2h2m-6 1h2m-458 2h5m-10 1h5m-9 1h4m-7 1h3m-5 1h2m-7 1h5m-9 1h4m460 6h2m-541 1h2m-4 1h2m566 0h2m-34 2h2m34 1h2m-41 1h2m65 0h2m-602 1h2m529 0h2m65 0h2m-71 1h2m65 0h2m-72 1h3m48 0h2m15 0h2m-560 1h7m481 0h2m64 0h4m-560 1h2m486 0h2m60 0h6m-546 1h2m474 0h2m59 0h3m-538 1h2m470 0h2m-472 1h2m466 0h2m-468 1h3m461 0h2m-463 1h2m457 0h2m-459 1h3m452 0h2m-454 1h2m448 0h2m-450 1h3m443 0h2m-445 1h2m0 1h2m-49 4h2m50 0h5m-60 1h3m-9 1h6m5 0h2m478 1h2m-4 1h2m-486 1h2m0 1h2m5 0h2m470 0h2m-472 1h3m460 9h3m-7 1h4m-8 1h4m-6 1h2m-456 5h2m0 1h2m442 3h4m-449 1h2m435 0h8m-447 1h2m432 0h5m-8 1h3m-6 1h3m-6 1h3m-428 1h2m421 0h2m-342 1h15m323 0h2m-239 1h11m224 0h2m-285 1h48m11 0h15m207 0h2m-432 1h2m109 0h38m74 0h23m182 0h2m-432 1h2m246 0h18m21 0h41m100 0h2m-164 1h21m41 0h15m83 0h2m117 0h34m-236 1h12m52 0h80m36 0h22m34 0h4m-228 1h52m80 0h36m60 0h5m-599 1h3m596 0h4m-605 1h2m3 0h2m14 0h2m2 0h2m578 0h3m-585 1h2m-15 5h52m-254 1h148m45 0h2m59 0h53m-108 2h3m-52 5h2m0 1h3m39 4h2m-5 1h3m576 0h4m-585 1h2m577 0h2m4 0h3m-12 1h3m-5 1h2m-575 2h2m-40 1h2m38 0h3m-45 1h2m40 1h2m-12 1h10m-45 2h2m34 1h2m0 1h2m549 4h4m-9 1h5m4 0h2m0 1h2m9 0h2m-567 1h2m554 0h2m3 0h4m-567 1h2m558 0h3m-44 5h3m-6 1h3m-5 1h2m-5 2h2m-568 1h50m514 0h2m20 0h2m-8 1h2m-532 3h2m505 0h3m0 1h4m-511 1h2m509 0h2m-518 2h4m0 1h3m-7 4h2m0 1h2m-4 3h2m-5 1h3m493 0h5m-7 1h2m5 0h4m-515 2h3m3 0h2m-10 1h2m3 0h3m494 0h2m-5 2h2m-4 1h2m-4 1h2m-4 1h2m-4 1h2m-490 2h2m-3 4h2m480 0h2m-22 4h9m-15 1h6m9 0h7m-486 1h5m455 0h4m-458 2h2m448 1h2m-465 4h2m1 0h2m-7 1h2m457 0h2m-459 5h2m-4 1h2m3 0h2m-5 1h3m446 9h2m-4 1h2m-451 1h3m435 0h2m1 0h2m4 0h2m-446 1h3m437 0h4m127 4h26m-30 1h4m26 0h26m-59 1h3m56 0h16m-78 1h3m75 0h9m-89 1h2m-562 1h2m555 0h3m-563 1h3m555 0h2m-562 1h2m555 0h3m-5 1h2m-4 1h2m-5 1h3m-7 1h4m-7 1h3m-6 1h3m-551 1h3m541 0h4m-545 1h3m535 0h3m-6 1h3m-368 1h51m312 0h2m-539 1h174m51 0h312m-536 3h2m157 3h2m0 1h2m-177 3h4m535 0h2m-527 1h2m-5 1h3m-5 1h2m-4 1h2m-4 1h2m-11 5h2m2 6h2m-5 1h3m-6 3h2m2 0h2m-4 1h2m539 2h2m2 3h2m2 3h2m2 3h2m1 2h2m0 1h2m0 1h9m-574 7h2m-5 1h3m-8 1h5m-8 1h3m-4 1h5m0 1h2m-5 2h3m0 1h2m-8 2h2m-4 1h2m-4 1h2m-8 2h2m0 1h2m-5 2h2m2 0h3m-5 1h2m-3 4h2m0 1h4m-9 4h5m-3 7h2m-4 1h2m-9 2h3m-5 1h2m3 0h2m-9 1h2m-1 1h2m633 0h2m-635 1h5m631 1h2m1 2h2m2 3h2m2 3h2m-649 2h2m0 1h2m0 1h2m-10 1h3m-5 1h2m3 0h7m-16 5h3m4 0h3m-7 1h4m3 0h2m-5 2h2m0 1h3m-14 2h3m0 1h3m667 0h2m0 1h2m1 2h2m0 1h2m-679 1h2m-5 1h3m-3 3h2m2 3h2m1 2h2m-10 1h2m1 2h2m6 0h2m-7 2h3m-1 1h3m-8 1h5m2 3h2m-5 1h3m1 6h2m0 1h2m-7 2h3m1 0h2m-4 1h2m205 6h2m487 2h2m-704 1h6m699 1h2m2 3h2m-710 2h2m709 0h2m1 2h2m-789 4h74m-3 1h2m3 1h2m0 1h2m-10 6h2m3 0h3m-6 1h4m-1 14h2m0 1h3m0 1h2m-4 4h2m-5 1h3m4 4h2m-8 2h5m0 2h2m-4 1h2m-4 7h2m0 1h2m0 1h2m0 1h3m0 1h2m-1 6h2m-5 1h3m6 0h2m-9 1h8m-3 3h2m-4 1h2m-4 1h2m-11 5h4m-6 1h2m4 0h4m448 0h2m-462 1h2m456 0h2m-452 7h2m-11 1h2m4 0h3m-7 1h4m-1 11h2m-6 1h4m-6 1h2m-6 5h2m-6 4h2m-5 1h3m-1 1h3m0 1h2m-6 1h4m-6 1h2m0 3h5m-8 1h3m-1 1h2m0 1h3m-16 10h2m3 0h2m-5 1h3m-6 3h7m-3 4h2m-4 1h2m-5 1h3m-6 7h2m-4 1h2m2 0h2m0 1h2m-3 3h2m-7 1h5m-4 9h2m-8 1h6m745 1h2m-9 1h2m-3 1h3m-4 1h2m1 0h2m-3 2h2m-1 1h2m12 1h2m-2 1h3m-12 1h2m7 0h2m-3 1h2m-4 1h3m-3 1h3m-11 4h5m-752 4h2m-3 2h142m186 0h166m-194 1h28m431 0h2m-12 2h2m-3 1h3m-512 2h2m59 0h2m193 0h2m249 4h3m-28 5h3m-7 1h4m3 0h2m-11 1h2m9 0h2m0 1h2m0 1h2m0 1h4m24 0h2m-26 1h6m18 0h2m-20 1h5m13 0h2m-13 1h2m-1 1h2m-444 1h2m193 0h11m236 0h2m-238 1h19m0 1h16m197 0h2m-436 1h2m235 0h14m-292 1h2m41 0h2m247 0h13m167 0h2m1 0h7m-177 1h13m154 0h3m-157 1h13m140 0h2m-142 1h13m0 1h13m0 1h13m0 1h13m99 0h2m-101 1h19m79 0h2m-411 1h2m328 0h20m61 0h2m-425 1h3m11 0h2m346 0h8m52 0h3m-3 1h3m-425 1h2m3 1h2m46 2h2m0 1h2m362 0h2m-350 1h5m343 0h2m-353 1h3m3 0h2m343 0h2m-365 1h2m4 0h8m4 0h5m336 0h6m-414 1h4m8 0h2m23 0h2m3 0h2m7 0h4m356 0h4m-401 1h2m23 0h3m372 0h3m-407 1h5m20 0h2m27 0h3m348 0h2m-559 1h11m139 0h2m5 0h2m20 0h2m6 0h3m14 0h2m3 0h2m338 0h2m5 0h3m-411 1h2m34 0h3m3 0h2m8 0h4m1 0h2m342 0h5m2 0h2m-511 1h3m91 0h7m1 0h35m8 0h2m5 0h2m1 0h3m-161 1h3m3 0h3m90 0h16m23 0h6m6 0h2m1 0h2m11 0h6m337 0h2m-559 1h2m16 0h2m13 0h3m21 0h3m63 0h2m11 0h2m3 0h12m38 0h6m314 0h5m38 0h2m2 0h3m7 0h2m-590 1h2m16 0h2m20 0h2m8 0h3m101 0h13m50 0h4m315 0h5m32 0h2m3 0h3m-579 1h2m10 0h4m24 0h3m3 0h2m7 0h2m52 0h2m15 0h2m4 0h2m16 0h9m60 0h7m351 0h2m-585 1h2m14 0h2m31 0h3m18 0h2m64 0h2m5 0h3m6 0h6m2 0h3m66 0h6m345 0h2m1 0h2m-521 1h2m2 0h2m17 0h6m48 0h2m6 0h3m6 0h2m72 0h5m48 0h2m292 0h2m2 0h2m-575 1h5m51 0h2m77 0h4m87 0h4m41 0h2m296 0h3m1 0h2m5 0h4m-452 1h4m94 0h3m25 0h2m9 0h2m299 0h2m-443 1h3m101 0h2m16 0h2m14 0h2m-158 1h2m12 0h5m105 0h3m27 0h2m-145 1h4m1 0h2m109 0h2m12 0h4m3 0h6m-153 1h3m4 0h3m118 0h2m-254 1h2m45 0h3m42 0h5m23 0h5m2 0h4m150 0h2m-285 1h2m22 0h4m14 0h2m8 0h6m26 0h11m14 0h13m135 0h2m22 0h2m-263 1h4m15 0h3m16 0h7m30 0h3m7 0h9m145 0h2m18 0h2m-246 1h4m26 0h8m30 0h4m154 0h3m13 0h2m-246 1h2m38 0h5m21 0h2m163 0h2m5 1h2m-286 2h10m4 0h2m264 0h2m-267 1h2m266 1h2m7 1h2m-276 1h2m5 0h3m258 0h3m-292 1h2m19 0h4m1 0h9m256 0h3m12 0h3m94 0h4m-385 1h4m2 0h3m2 0h2m264 0h3m2 0h2m93 0h2m1 0h3m1 0h3m4 0h8m-407 1h5m3 0h5m5 0h4m266 0h2m96 0h2m6 0h2m1 0h2m1 0h7m-402 1h8m1 0h6m1 0h2m259 0h4m97 0h3m10 0h5m1 0h2m2 0h3m-408 1h8m8 0h7m262 0h2m9 0h3m82 0h2m10 0h3m10 0h3m-411 1h2m1 0h9m6 0h5m266 0h3m4 0h2m82 0h3m26 0h3m-403 1h6m2 0h2m3 0h3m259 0h2m6 0h2m8 0h2m78 0h3m-407 1h4m23 0h11m1 0h2m25 0h2m240 0h2m123 0h2m-438 1h3m28 0h10m1 0h3m2 0h4m276 0h2m-331 1h2m30 0h11m3 0h2m1 0h2m275 0h3m112 0h3m-416 1h3m1 0h6m1 0h8m26 0h2m242 0h2m5 0h2m118 0h2m-424 1h2m5 0h3m2 0h13m397 0h4m-419 1h20m271 0h2m-294 1h13m1 0h7m394 0h7m-422 1h15m1 0h8m271 0h2m123 0h4m-423 1h22m353 0h5m43 0h2m-453 1h4m3 0h2m19 0h8m1 0h13m24 0h2m249 0h2m123 0h4m-450 1h4m21 0h10m1 0h7m27 0h2m376 0h2m3 0h2m-431 1h7m1 0h16m22 0h2m252 0h2m69 0h2m55 0h2m-430 1h7m1 0h11m27 0h2m253 0h2m71 0h7m46 0h3m-451 1h2m16 0h3m2 0h4m2 0h10m409 0h3m-449 1h2m5 0h3m5 0h6m1 0h16m20 0h4m386 0h3m-449 1h3m9 0h6m1 0h5m1 0h8m350 0h2m63 0h2m-435 1h3m5 0h11m347 0h2m66 0h2m-436 1h3m5 0h12m27 0h2m315 0h2m-366 1h2m8 0h5m1 0h2m416 0h2m-616 1h4m186 0h3m2 0h8m-210 1h3m2 0h2m174 0h2m11 0h10m343 0h4m-548 1h2m176 0h3m11 0h8m343 0h3m-369 1h3m11 0h7m327 0h3m14 0h2m-552 1h4m182 0h4m13 0h2m325 0h3m15 0h2m-554 1h4m183 0h9m5 0h2m329 0h2m16 0h2m-555 1h3m37 0h3m147 0h2m2 0h2m1 0h3m4 0h2m4 0h5m-21 1h2m2 0h4m2 0h3m8 0h2m333 0h2m-527 1h14m147 0h5m5 0h5m2 0h3m1 0h2m322 0h2m15 0h2m-527 1h2m162 0h5m11 0h4m321 0h3m15 0h2m-527 1h2m163 0h7m1 0h2m5 0h2m2 0h2m316 0h5m16 0h2m4 0h2m87 0h5m-460 1h3m5 0h4m320 0h7m117 0h5m-461 1h4m5 0h3m2 0h4m310 0h4m31 0h2m91 0h3m-642 1h2m180 0h6m4 0h4m3 0h4m303 0h5m7 0h7m19 0h2m94 0h4m-462 1h7m4 0h3m1 0h5m313 0h3m24 0h2m100 0h4m1 0h3m-468 1h3m7 0h3m1 0h3m315 0h2m22 0h2m104 0h6m-464 1h2m1 0h2m3 0h2m1 0h2m447 0h3m-635 1h3m20 0h5m144 0h2m10 0h2m31 0h2m287 0h2m13 0h2m110 0h4m-640 1h3m3 0h3m15 0h2m147 0h3m1 0h6m324 0h2m13 0h2m111 0h2m-646 1h2m2 0h5m177 0h2m341 0h2m114 0h2m-645 1h2m181 0h3m5 0h2m330 0h4m115 0h3m-650 1h7m16 0h3m149 0h3m9 0h3m5 0h7m324 0h2m119 0h3m-652 1h2m26 0h3m151 0h2m6 0h3m5 0h2m-169 1h2m112 0h3m28 0h2m10 0h7m455 0h2m-641 1h2m130 0h2m1 0h3m28 0h2m10 0h6m455 0h2m-639 1h2m129 0h2m3 0h2m27 0h2m5 0h2m6 0h3m453 0h3m-637 1h2m29 0h2m3 0h4m93 0h2m1 0h3m25 0h8m3 0h2m2 0h5m449 0h5m-636 1h3m24 0h7m4 0h3m84 0h3m5 0h4m31 0h3m4 0h3m1 0h3m26 0h2m423 0h3m-595 1h3m88 0h3m2 0h5m26 0h5m459 0h4m-592 1h5m77 0h2m1 0h5m3 0h3m1 0h2m25 0h8m4 0h2m452 0h4m-510 1h2m5 0h9m23 0h4m2 0h2m3 0h3m-175 1h2m1 0h2m119 0h2m3 0h4m1 0h3m60 0h2m432 0h3m-508 1h12m28 0h3m26 0h2m434 0h4m-507 1h17m22 0h5m463 0h2m-593 1h2m83 0h5m1 0h6m26 0h4m464 0h3m-640 1h2m129 0h5m2 0h2m2 0h3m25 0h4m-174 1h2m129 0h20m19 0h4m466 0h2m-643 1h3m130 0h3m1 0h2m1 0h4m1 0h9m27 0h2m458 0h2m1 0h2m-512 1h10m2 0h5m1 0h2m21 0h3m-44 1h8m4 0h4m1 0h2m1 0h2m20 0h4m-69 1h2m25 0h10m1 0h2m5 0h2m20 0h9m456 0h3m-587 1h3m39 0h2m27 0h10m1 0h2m1 0h4m1 0h2m28 0h13m-147 1h6m8 0h5m35 0h2m2 0h4m22 0h2m5 0h2m1 0h8m1 0h5m29 0h9m453 0h3m-596 1h2m1 0h2m5 0h9m29 0h3m4 0h5m17 0h2m1 0h2m4 0h9m2 0h4m8 0h2m19 0h7m1 0h2m455 0h2m-585 1h2m8 0h2m23 0h4m5 0h6m14 0h2m8 0h8m3 0h3m9 0h2m19 0h4m4 0h9m448 0h2m-605 1h2m11 0h5m1 0h2m9 0h2m20 0h8m1 0h6m2 0h2m23 0h7m10 0h2m4 0h2m29 0h5m4 0h2m445 0h5m-612 1h2m1 0h2m11 0h4m9 0h6m18 0h9m2 0h8m2 0h3m13 0h2m5 0h5m2 0h2m4 0h4m2 0h2m5 0h2m9 0h2m3 0h2m4 0h5m4 0h3m451 0h3m-611 1h3m1 0h2m11 0h3m8 0h2m1 0h3m17 0h2m5 0h4m2 0h11m1 0h3m11 0h3m3 0h5m6 0h3m4 0h6m6 0h2m10 0h2m6 0h4m10 0h2m447 0h3m-611 1h5m10 0h6m5 0h5m1 0h2m14 0h8m1 0h3m1 0h8m1 0h3m1 0h5m2 0h2m11 0h7m1 0h4m2 0h5m2 0h9m3 0h2m7 0h2m8 0h10m2 0h5m2 0h2m441 0h2m-594 1h6m5 0h4m1 0h4m12 0h17m1 0h2m2 0h12m11 0h5m2 0h2m1 0h5m12 0h3m1 0h3m1 0h4m1 0h3m10 0h2m10 0h8m444 0h2m-610 1h2m15 0h5m2 0h10m14 0h21m1 0h4m1 0h7m8 0h3m2 0h5m1 0h3m1 0h5m8 0h7m2 0h2m2 0h4m2 0h2m4 0h2m11 0h7m2 0h2m440 0h3m-609 1h2m5 0h3m4 0h2m3 0h5m1 0h5m1 0h2m1 0h2m13 0h19m1 0h4m1 0h4m9 0h4m3 0h7m1 0h5m17 0h2m1 0h2m3 0h2m1 0h2m15 0h10m1 0h3m442 0h2m-608 1h2m2 0h3m3 0h5m1 0h6m1 0h5m3 0h3m12 0h7m1 0h22m6 0h4m1 0h7m1 0h11m6 0h6m6 0h2m1 0h2m1 0h4m17 0h2m3 0h6m444 0h2m-606 1h2m7 0h5m1 0h4m2 0h10m12 0h19m1 0h13m3 0h3m4 0h5m1 0h2m2 0h2m2 0h5m8 0h2m2 0h4m1 0h9m19 0h2m1 0h2m2 0h2m2 0h2m442 0h2m-598 1h9m1 0h14m10 0h31m4 0h2m9 0h3m9 0h15m1 0h2m7 0h5m19 0h2m8 0h2m444 0h2m-598 1h3m1 0h18m8 0h12m1 0h21m3 0h2m9 0h3m5 0h2m8 0h2m6 0h6m4 0h7m19 0h4m2 0h6m444 0h3m-599 1h2m1 0h8m1 0h9m11 0h11m1 0h24m10 0h2m2 0h2m7 0h6m9 0h4m3 0h10m5 0h2m11 0h3m2 0h8m-153 1h6m1 0h3m1 0h10m8 0h16m1 0h19m10 0h4m11 0h2m1 0h2m8 0h3m6 0h2m1 0h6m1 0h2m1 0h2m14 0h3m2 0h6m-150 1h7m1 0h9m14 0h2m1 0h2m2 0h6m3 0h12m1 0h2m10 0h2m1 0h11m1 0h2m9 0h5m10 0h2m1 0h8m3 0h2m15 0h3m1 0h2m1 0h2m452 0h2m-605 1h13m12 0h2m1 0h34m9 0h7m1 0h2m1 0h20m2 0h7m3 0h12m11 0h6m1 0h2m1 0h4m446 0h14m-613 1h5m2 0h9m13 0h2m2 0h2m3 0h22m2 0h2m12 0h2m2 0h5m7 0h2m2 0h4m4 0h2m7 0h4m1 0h7m1 0h2m11 0h3m4 0h2m1 0h3m444 0h6m7 0h7m-611 1h2m4 0h2m19 0h3m4 0h2m2 0h2m7 0h2m4 0h2m1 0h5m26 0h4m25 0h5m20 0h2m447 0h7m12 0h2m-614 1h2m1 0h4m2 0h2m26 0h2m10 0h2m6 0h3m17 0h2m13 0h2m4 0h2m20 0h5m20 0h2m446 0h3m3 0h2m11 0h5m-559 1h3m15 0h2m19 0h2m23 0h3m20 0h2m446 0h4m16 0h3m-615 1h151m441 0h2m-537 1h4m550 1h4m-2 2h2m-1 3h2m-3 1h4m-3 2h3m-2 1h2m-2 1h3m-1 2h2m-1 1h2m-2 1h2m-1 1h2m-1 1h2m1 2h4m-4 1h2m-2 1h2m-2 1h2m-5 1h6m-10 1h6m-6 1h4m-4 1h3m-4 3h3m-2 1h3"/><path transform="translate(.5 0)" stroke="#000" d="M0 0m6 710v1m2 1v1m1 0v3m1 0v1m5 3v1m1 0v1m1-22v2m1-4v1m8 27v1m1-22v3m0 19v1m1-24v1m0 23v1m1-30v2m0 2v1m0 13v1m1-17v2m0 15v1m1 11v1m3-3v1m1-3v2m1-3v1m1-2v1m1-2v1m1-2v1m5-143v2m0 11v1m0 120v2m1-144v2m0 5v1m0 2v2m0 121v1m0 5v3m1-140v5m0 5v2m0 123v2m1-125v1m0 4v1m0 114v3m1-151v2m0 27v2m0 1v1m0 114v1m1-149v1m0 2v1m0 28v1m1 126v1m1-158v2m0 156v5m1-171v4m0 2v2m0 3v2m0 3v3m0 152v2m1-185v1m0 9v2m0 13v3m1-29v1m0 1v2m1-5v1m1 20v2m5-17v3m1-10v2m1-8v6m1-11v1m0 2v2m1-7v2m0 2v1m0 215v1m1-225v1m2 227v1m2-7v2m0 4v1m1-221v1m0 200v1m1-214v2m0 9v1m0 202v3m1-218v1m1-160v2m0 9v2m0 7v3m1-24v1m0 2v1m0 20v1m0 40v4m0 310v2m1-382v1m0 21v1m0 3v1m0 25v1m0 11v2m0 4v1m0 87v2m0 222v3m1-369v1m0 34v1m0 1v2m0 101v2m0 227v1m0 14v1m1-384v1m0 37v1m0 80v3m0 247v1m0 12v1m1-376v1m0 52v7m0 50v2m0 3v2m0 246v1m0 1v2m0 3v2m0 2v1m1-404v2m0 10v1m0 2v1m0 22v4m0 23v2m0 4v2m0 5v4m0 7v2m0 9v3m0 293v3m1-397v3m0 8v2m0 9v1m0 12v1m0 4v3m0 18v2m0 5v1m0 2v3m0 23v1m0 3v1m1-42v1m0 47v4m0 280v1m0 5v2m1-396v1m0 37v1m0 64v1m1-84v2m0 2v1m0 12v1m0 9v2m0 19v2m0 32v1m0 44v4m0 236v2m0 5v1m1-372v1m0 4v1m0 12v6m0 18v3m0 22v1m0 54v2m0 4v1m1-167v4m0 32v1m0 4v2m0 60v2m0 54v1m0 258v1m1-421v2m0 38v3m0 71v1m0 45v1m0 244v1m0 1v1m0 4v1m1-414v1m0 55v1m0 99v1m0 2v2m0 262v1m1-425v1m0 18v2m0 97v1m0 37v1m0 2v1m1-162v2m0 114v1m0 1v2m0 39v1m0 254v1m0 11v1m0 1v1m1-312v1m0 35v1m1-141v1m0 134v4m0 262v1m1-420v1m0 151v1m1-154v1m0 139v1m1-154v4m0 150v1m0 1v2m1-165v1m0 5v1m0 155v1m0 272v2m1-438v1m0 5v1m2 11v1m0 150v2m1-158v2m0 1v2m0 148v1m1-152v1m0 428v1m1-446v1m1-2v1m1 4v2m0 1v2m1-3v1m0 436v1m0 7v1m5-458v2m4 448v4m0 1v1m0 1v1m1-459v1m0 449v1m1-452v1m0 458v1m1-8v1m4-14v1m1-457v3m0 5v2m0 447v1m0 7v1m1-467v1m0 3v5m0 2v1m0 447v1m1-476v4m0 2v7m0 2v1m0 460v1m1-481v4m0 4v1m0 8v2m1-21v1m0 8v1m0 3v1m2-12v1m1-10v4m0 3v2m1-10v1m0 4v3m0 9v2m0 473v2m0 17v1m1-496v1m1 490v1m1-508v1m1 0v2m1 0v1m1 487v1m1-2v1m1-592v1m0 612v1m1-616v2m1-3v1m1-3v2m1-3v1m0 93v2m0 521v2m1-621v2m0 93v1m0 3v2m0 520v1m1-623v1m1-2v1m0 109v1m1-112v1m0 104v6m1-112v1m1-3v2m0 587v2m0 39v1m1-632v1m0 592v1m0 17v2m0 4v1m0 1v2m1-622v1m0 101v1m0 489v1m0 24v1m0 6v1m0 3v1m1-630v1m0 96v2m0 3v1m1-104v1m0 70v1m0 28v3m0 492v1m1-527v2m0 1v2m0 6v3m0 513v1m0 16v1m1-638v1m0 91v1m0 5v1m0 2v3m0 3v2m0 505v1m0 4v1m1-619v3m0 17v2m0 77v1m0 512v1m1-610v2m0 14v1m0 78v1m0 536v2m1-522v2m0 522v3m0 2v4m1-534v1m0 2v1m0 502v1m0 27v1m1-561v1m0 5v1m0 16v3m0 502v1m0 16v1m1-627v1m0 3v6m0 75v2m0 16v1m0 520v1m0 13v2m0 4v1m1-644v3m0 80v1m1-8v2m0 4v1m0 1v1m0 1v2m0 522v1m0 12v1m1-549v1m0 2v4m0 3v1m2 554v1m0 3v1m4-587v5m0 8v1m0 3v1m1-19v1m0 5v1m0 6v1m0 1v2m0 548v1m0 7v1m0 6v1m0 1v1m1-576v1m0 4v1m0 4v1m0 2v1m0 539v1m1-553v1m0 9v1m0 568v1m1-2v1m1-577v1m0 561v1m1-567v1m0 2v1m0 561v1m0 9v1m1-575v2m0 503v2m1-4v2m0 2v1m0 60v1m0 8v1m1-139v5m0 64v1m1-75v5m0 5v6m1-460v1m0 439v4m0 16v3m1-464v1m0 438v2m0 23v2m0 127v1m1-158v3m0 27v1m0 106v2m0 4v1m1-588v1m0 441v2m0 31v2m0 103v1m1-583v2m0 1v1m0 435v5m0 35v2m0 79v1m0 1v1m0 18v1m0 13v1m1-161v1m0 1v2m0 42v1m0 51v1m0 57v1m0 1v1m1-604v1m0 1v3m0 487v2m0 48v1m0 34v1m0 33v1m1-613v1m0 16v2m0 476v2m0 34v1m0 65v1m1-617v1m0 17v1m0 497v2m0 31v1m0 43v1m0 23v1m0 3v1m1-621v1m0 14v2m0 8v1m0 491v2m0 27v2m0 30v1m1-566v2m0 504v4m0 22v1m0 33v1m0 10v1m0 29v1m1-610v2m0 17v1m0 492v4m0 17v1m0 40v1m0 6v2m0 6v1m0 20v1m1-595v2m0 498v2m0 57v1m1-584v2m0 524v3m0 10v1m0 23v1m0 18v1m0 2v1m0 1v1m1-600v2m0 12v1m0 526v4m0 4v2m0 23v1m0 25v1m0 29v1m1-629v1m0 12v1m0 1v1m0 527v2m0 1v1m0 40v1m0 3v1m1-613v1m0 34v1m0 568v1m0 17v1m0 5v1m1-631v2m0 1v2m0 562v1m0 23v3m0 9v1m0 49v1m0 3v1m1-653v1m0 583v2m0 36v1m0 8v1m0 10v1m1-63v4m0 25v1m0 31v1m1-639v6m0 12v1m0 580v1m0 23v1m0 18v1m1-744v3m0 25v1m0 71v1m0 6v4m0 598v1m0 11v1m0 1v1m0 5v1m1-727v4m0 19v2m0 1v1m0 646v1m0 24v1m0 18v1m1-714v2m0 90v1m0 575v1m0 39v3m1-709v2m0 82v2m0 2v2m0 1v1m0 572v2m0 10v1m0 19v1m0 4v2m1-701v2m0 18v3m0 61v2m0 563v1m0 11v1m0 36v1m0 43v1m1-741v2m0 19v4m0 621v1m0 41v1m0 28v1m0 3v1m1-720v2m0 4v3m0 14v2m0 60v1m0 556v2m0 51v1m1-694v4m0 19v2m0 57v1m0 556v1m0 15v1m0 57v1m1-689v1m0 52v3m0 568v2m0 63v1m0 16v1m1-706v2m0 45v5m0 609v1m1-660v2m0 41v2m0 573v1m0 8v1m0 16v1m0 2v1m0 10v1m0 39v1m1-697v3m0 602v2m0 10v1m1-20v1m0 4v2m1-8v1m0 2v3m1-599v1m0 35v2m0 554v1m0 55v1m1-648v1m0 617v1m0 26v1m1-609v1m1 0v2m0 642v1m1 0v1m1-90v1m0 21v1m1-617v2m0 593v1m0 47v3m0 41v1m0 1v1m1-691v1m0 616v1m0 6v1m0 22v1m1-650v1m0 643v1m0 31v1m0 16v1m1-654v3m0 596v1m0 48v1m0 11v1m1-702v2m0 1v2m0 27v2m0 6v1m0 600v1m0 48v1m1-693v2m0 5v1m0 16v2m0 7v1m0 6v2m0 588v2m0 10v1m0 55v1m0 5v1m1-706v1m0 22v2m0 14v2m0 561v1m0 25v1m0 9v1m0 52v1m0 16v1m1-710v1m0 22v1m0 15v1m0 601v1m0 36v1m0 15v1m1-696v1m0 22v1m0 611v2m0 59v1m0 10v1m1-709v1m0 22v1m0 8v3m0 600v1m0 42v1m1-680v1m0 14v2m0 4v3m0 674v1m1-700v1m0 17v4m0 684v1m1-709v2m0 678v1m1-682v1m1-2v1m0 679v2m1-683v1m0 678v2m0 28v1m1-32v1m1-72v1m0 106v1m1-110v2m0 68v1m1 41v2m1-61v1m0 60v2m1-62v1m0 13v1m1-2v1m2-20v1m0 16v2m1-673v1m0 658v2m0 8v2m1-14v2m0 9v1m1-32v1m1 0v1m0 26v2m1-27v1m0 13v2m0 7v2m1-59v1m0 34v1m0 17v2m1-54v1m0 35v2m0 12v2m1-51v1m0 36v3m0 4v4m17-645v1m1 0v1m1 0v1m0 596v1m3 1v1m1-621v3m1-6v3m0 3v2m1-10v2m0 8v1m0 15v1m1-29v2m0 11v1m0 13v1m0 455v17m1-501v1m0 14v1m0 11v1m0 446v10m0 17v27m1-512v2m0 8v1m0 437v10m0 54v24m1-534v3m0 3v2m0 427v11m0 88v16m1-547v3m0 419v10m0 115v8m0 51v1m1-195v10m0 134v47m0 1v2m1-203v9m1-19v10m1-19v9m1-18v9m1-17v8m1-16v8m1-11v3m1-9v5m1-15v10m1-21v11m1-22v11m1-21v10m0 287v1m1-308v10m0 298v1m1-319v10m0 309v1m1-330v10m1-94v2m0 72v10m1-82v2m0 60v10m1-70v1m0 50v9m1-19v10m1-288v2m0 267v9m1-276v1m0 257v9m0 376v2m1-644v1m0 246v10m0 379v6m0 12v1m1-654v1m0 235v10m0 375v14m1-634v2m0 2v2m0 611v3m1-618v2m0 75v1m0 535v2m0 37v1m1-575v3m0 530v2m1-532v2m0 527v1m1-528v9m0 517v1m1-2v1m1 0v1m3 1v1m1 0v1m1 0v4m1 0v2m1 0v12m1 0v2m1-556v1m0 555v2m1-557v1m0 556v1m1 0v1m1 0v1m3 1v1m1 0v2m1 0v1m1 0v1m3 1v1m6-54v1m1-3v2m0 1v2m1-7v2m0 5v2m0 42v2m1-58v2m0 12v1m0 43v3m1-59v2m0 11v1m0 45v1m1-46v1m0 39v1m1-40v2m0 38v1m1-39v1m1 0v1m1 0v1m1 0v1m1 33v1m2-33v1m1 0v1m1 12v7m0 7v4m1-20v2m0 7v3m0 2v2m0 5v1m1-23v1m0 13v1m0 4v2m1-28v7m0 12v2m1-3v1m1 0v1m0 4v1m1-5v1m0 1v2m1-3v1m11 2v1m1-18v1m0 1v1m0 12v2m1-4v2m1-11v2m0 5v2m1-11v1m0 3v5m1-8v1m1 13v1m2-13v6m3-6v6m1-9v3m1-4v1m1 2v2m1-4v2m0 2v1m1 0v1m1 0v1m1 0v1m1 0v1m5 2v1m20-2v1m3 2v1m5-6v1m1-3v2m1-3v1m3 0v2m5 8v1m3-7v2m1-3v1m0 2v1m7-1v1m1-8v1m0 7v1m1 0v1m1-6v3m3-3v1m1 0v4m1 0v1m9 12v1m9-6v1m1 1v1m0 1v1m0 5v2m1-7v1m1 0v2m1 0v1m0 4v1m1-12v1m0 6v1m1-9v1m1 13v1m1-17v1m0 1v2m0 8v2m1 0v3m1-5v1m1-3v2m0 1v1m0 5v1m1-6v1m0 5v1m1-6v1m0 3v1m0 1v1m1-2v1m0 1v1m1 0v1m1-7v1m1 0v1m2-434v3m1 0v6m0 411v1m0 20v1m1-433v6m0 403v2m0 22v1m1-428v6m0 393v1m0 2v1m1-397v5m0 387v1m0 2v1m1-391v6m0 383v1m0 28v1m1-413v5m1 0v5m0 398v1m1-399v5m0 385v1m0 8v1m0 4v1m1-400v5m0 382v4m0 4v1m1-391v5m1 0v5m0 386v1m1-387v6m1 0v6m1 0v6m0 358v1m0 11v1m0 4v9m1-384v6m0 367v2m0 9v3m1-381v6m0 375v2m1-377v6m0 342v1m0 28v2m1-373v6m0 349v1m0 17v2m1-369v6m0 344v1m0 18v1m1-364v6m0 339v1m1-340v6m0 334v2m1-336v7m0 329v3m1-332v8m0 324v3m0 3v5m1-335v7m0 320v3m1-323v7m1 0v7m1 0v6m1 0v4m1 0v5m1 0v5m1 0v5m1 0v5m1 0v5m0 282v1m1-283v4m0 279v1m1-280v3m1 0v4m1 0v2m1 0v2m0 119v8m0 139v2m1-268v2m0 57v3m0 49v8m0 8v3m0 135v1m1-264v2m0 51v4m0 48v4m0 19v3m1-129v2m0 43v6m0 35v5m0 8v4m0 26v3m1-130v2m0 37v4m0 46v8m0 33v3m1-131v2m0 33v2m0 94v3m1-132v2m0 29v2m0 99v4m1-134v2m0 11v2m0 13v1m0 105v1m0 1v1m1-135v2m0 7v2m0 2v1m0 121v3m1-136v2m0 3v2m0 5v1m0 123v1m0 105v1m1-241v3m0 8v1m0 124v1m0 102v1m1-228v1m0 124v2m1-126v1m0 5v1m0 119v2m1-127v1m0 3v1m0 122v5m1-131v1m0 1v1m0 128v5m1-135v1m0 134v1m0 89v2m1-91v2m0 85v2m0 2v1m0 5v1m1-13v2m0 5v1m1 0v1m1-2v1m6-1v1m3-6v1m0 2v1m1-2v1m1-2v1m7-8v1m1-2v1m1 0v1m6-6v1m1-2v1m1-2v1m3-6v4m1 0v1m1-7v3m1-7v4m1-6v2m3 8v3m1-459v6m1-15v9m0 445v1m1-459v4m1-6v2m1-3v1m3-3v1m0 459v1m1 0v1m1 0v1m3-460v1m0 457v1m5 0v1m0 1v1m1-7v1m0 4v1m1-2v1m1-466v2m0 464v1m1-469v2m0 465v1m1-472v4m1-9v5m1-6v1m0 472v1m1-475v1m0 472v1m2 2v1m0 3v1m1-483v1m1-2v1m0 482v1m1-485v1m0 482v1m0 2v1m0 1v1m1-490v1m0 482v1m1 3v1m2-490v1m0 488v1m1-491v1m0 488v1m0 6v2m1-4v1m2-3v1m1 1v1m1-2v1m0 3v1m3 2v1m2-4v1m0 2v1m1-5v1m0 6v1m4-6v1m1 7v1m1 1v2m1-4v1m0 3v1m1-4v1m0 3v4m1 0v1m1 0v1m1 0v1m3 4v1m2-526v1m0 519v1m0 2v1m1-525v1m0 519v1m1-522v1m0 525v1m1-528v1m2 526v1m1-530v1m0 527v1m0 9v1m1-540v1m0 547v1m1-550v1m0 530v1m0 16v1m1-550v1m0 534v1m0 1v1m1-539v1m0 83v3m0 463v1m0 2v2m1-474v3m0 3v1m1-9v2m0 7v1m1-12v2m0 10v1m0 465v1m1-480v1m0 13v1m0 465v1m1-483v2m0 15v1m0 465v1m1-485v1m0 18v1m0 457v3m1-481v1m0 482v1m0 2v2m1-489v1m1 22v1m0 463v2m1-465v1m0 465v1m0 1v1m1-570v1m0 74v1m0 485v2m0 1v2m1-492v1m0 492v1m1-495v1m0 29v1m1-106v1m0 72v2m0 31v1m0 473v1m1-582v1m0 72v1m0 504v1m0 1v1m1-509v1m1-162v2m0 157v2m0 37v1m1-201v2m0 199v1m0 466v1m1-671v2m1-4v2m1 205v1m1 472v3m1 0v1m4-591v1m1-2v1m1-2v1m0 590v1m1-593v1m0 590v1m0 2v1m1-596v1m1-4v3m1-94v1m0 86v4m0 595v1m1-689v2m0 85v2m0 598v1m1-690v2m0 218v2m0 472v1m1-697v2m0 222v2m1-228v2m0 226v1m1 0v2m0 464v1m1-465v1m0 462v1m1-697v1m0 90v2m0 141v2m0 461v1m0 6v1m1-612v2m0 141v2m0 458v1m0 1v1m1-604v1m0 142v2m0 457v1m0 5v2m1-465v2m0 454v1m0 1v1m0 7v1m0 1v1m1-467v3m0 450v1m0 7v1m0 5v1m1-714v2m0 90v1m0 156v3m0 464v1m0 6v1m1-726v2m0 252v2m0 466v1m0 1v1m0 12v2m0 2v12m1-755v2m0 256v3m0 474v1m1-738v2m0 261v2m0 459v1m0 16v2m1-478v1m1 0v2m1 0v1m0 467v1m1-468v1m0 462v1m1-637v1m0 173v2m1-175v2m0 173v1m1-174v1m0 173v2m1-175v1m0 174v2m1 0v2m1 0v2m1-179v1m0 178v1m1-179v1m1-2v1m1-2v1m0 181v1m3-185v1m0 185v1m1-188v1m1-2v1m1-2v1m0 190v1m1-193v1m0 192v1m1-195v1m1-2v1m1-2v1m0 197v1m1-200v1m0 199v1m1-202v1m1-2v1m1-2v1m0 204v1m1 0v1m1-310v1m0 309v2m1 0v1m1 0v1m1-316v1m0 315v2m1-319v1m0 318v1m1-321v1m0 320v2m1 0v1m0 279v10m1-289v2m0 287v2m1-617v1m0 327v2m0 287v3m1-621v1m0 330v1m0 289v1m1-643v1m0 19v1m1-2v1m1-2v1m1-17v1m0 14v1m1-2v1m0 338v1m1-341v1m1-2v1m1-2v1m1-2v1m0 598v4m0 27v2m1-633v1m0 346v1m0 250v2m0 4v5m0 16v6m1-632v1m0 348v1m0 247v2m0 11v16m1-276v2m0 244v1m1-245v1m1-355v1m0 120v2m0 232v1m1-357v1m0 119v2m0 235v2m1-357v1m0 4v4m0 107v2m0 239v1m1-357v4m0 4v1m0 105v1m0 242v2m1-350v1m0 102v2m0 245v1m1-350v1m0 99v2m0 248v2m0 3v4m1-358v1m0 96v2m0 252v3m0 4v1m1-358v1m0 93v2m0 262v1m1-358v1m0 357v1m1-358v1m0 357v1m1 0v1m1 0v1m1-359v1m0 358v1m1-359v1m0 358v1m1 0v1m1 0v1m1-360v1m0 359v1m1-360v1m0 359v2m0 2v1m1-364v1m0 360v2m0 1v1m1-288v2m1-4v2m0 2v2m1-79v1m0 70v2m0 6v1m0 284v1m1-364v1m0 62v7m1-12v5m1-7v2m0 307v1m1-311v1m0 310v1m0 219v1m1-51v1m2-169v1m0 170v1m0 45v1m0 25v1m1-47v1m1 16v1m0 1v1m0 23v1m1-239v1m0 194v1m0 19v1m0 14v1m1-42v1m0 6v3m0 15v1m0 1v2m1-46v1m0 4v1m0 32v1m0 22v1m1-232v2m0 159v2m0 14v1m0 34v1m0 6v1m1-218v2m1 0v2m1 0v2m0 151v1m0 56v1m1-209v2m0 148v1m0 59v1m1-209v1m0 206v1m1-207v2m0 160v1m0 41v2m1-204v2m1 0v5m0 165v1m0 57v2m1-225v6m0 158v1m1-563v1m0 403v3m0 206v2m0 1v2"/><path transform="translate(0 .5)" stroke="#e0e0e0" d="M0 0m387 7h8m22 0h10m-55 1h15m40 0h15m-80 1h10m70 0h10m-382 1h2m282 0h8m90 0h8m282 0h2m-397 1h7m106 0h7m-127 1h7m120 0h7m-139 1h5m134 0h5m-149 1h5m144 0h5m-159 1h5m154 0h5m-426 1h2m255 0h5m164 0h5m255 0h2m-435 1h4m174 0h4m-187 1h5m182 0h5m-196 1h4m192 0h4m-203 1h3m200 0h3m-210 1h4m206 0h4m-218 1h4m214 0h4m-225 1h3m222 0h3m-231 1h3m228 0h3m-238 1h4m234 0h4m-476 1h2m229 0h3m242 0h3m229 0h2m-482 1h3m248 0h3m-257 1h3m254 0h3m-263 1h3m260 0h3m-268 1h2m266 0h2m-273 1h3m270 0h3m-279 1h3m276 0h3m-284 1h2m282 0h2m-289 1h3m286 0h3m-295 1h3m292 0h3m-300 1h2m298 0h2m-304 1h2m302 0h2m-309 1h3m306 0h3m-314 1h2m312 0h2m-319 1h3m316 0h3m-324 1h2m322 0h2m-328 1h2m326 0h2m-332 1h2m330 0h2m-336 1h2m334 0h2m-340 1h2m338 0h2m-345 1h3m342 0h3m-350 1h2m348 0h2m-354 1h2m352 0h2m-358 1h2m356 0h2m-362 1h2m360 0h2m-366 1h2m364 0h2m-370 1h2m368 0h2m-375 2h2m374 0h2m-380 1h2m378 0h2m-384 1h2m382 0h2m-388 1h2m386 0h2m-392 1h2m390 0h2m-397 2h2m396 0h2m-402 1h2m400 0h2m-407 2h2m406 0h2m-412 1h2m410 0h2m-417 2h2m416 0h2m-422 1h2m420 0h2m-427 2h2m426 0h2m-433 2h2m432 0h2m-438 1h2m436 0h2m-443 2h2m442 0h2m-449 2h2m448 0h2m-456 3h2m456 0h2m-463 2h2m462 0h2m-470 3h2m470 0h2m-478 3h2m478 0h2m-486 3h2m486 0h2m-494 3h2m494 0h2m-503 4h2m504 0h2m-514 5h2m516 0h2m-529 8h2m534 0h2m-286 17h5m22 0h7m-46 1h12m34 0h12m-67 1h9m58 0h9m-83 1h7m76 0h7m-95 1h5m90 0h5m-106 1h6m100 0h6m-116 1h4m112 0h4m-125 1h5m120 0h5m-134 1h4m130 0h4m-142 1h4m138 0h4m-149 1h3m146 0h3m-156 1h4m152 0h4m-163 1h3m160 0h3m-169 1h3m166 0h3m-175 1h3m172 0h3m-181 1h3m178 0h3m-187 1h3m184 0h3m-193 1h3m190 0h3m-198 1h2m196 0h2m-203 1h3m200 0h3m-208 1h2m206 0h2m-213 1h3m210 0h3m-218 1h2m216 0h2m-223 1h3m220 0h3m-228 1h2m226 0h2m-232 1h2m230 0h2m-236 1h2m234 0h2m-240 1h2m238 0h2m-244 1h2m242 0h2m-248 1h2m246 0h2m-252 1h2m250 0h2m-256 1h2m254 0h2m-260 1h2m258 0h2m-264 1h2m262 0h2m-268 1h2m266 0h2m-272 1h2m270 0h2m-277 2h2m276 0h2m-282 1h2m280 0h2m-286 1h2m284 0h2m-291 2h2m290 0h2m-296 1h2m294 0h2m-301 2h2m300 0h2m-307 2h2m306 0h2m-313 2h2m312 0h2m-319 2h2m318 0h2m-326 3h2m326 0h2m-334 3h2m334 0h2m-342 3h2m342 0h2m-351 4h2m352 0h2m-362 5h2m364 0h2m-379 10h2m386 0h2m-185 42h3m-35 1h9m26 0h9m-51 1h7m44 0h7m-63 1h5m58 0h5m-72 1h4m68 0h4m-80 1h4m76 0h4m-87 1h3m84 0h3m-94 1h4m90 0h4m-101 1h3m98 0h3m-107 1h3m104 0h3m-112 1h2m110 0h2m-117 1h3m114 0h3m-122 1h2m120 0h2m-127 1h3m124 0h3m-132 1h2m130 0h2m-136 1h2m134 0h2m-140 1h2m138 0h2m-144 1h2m142 0h2m-148 1h2m146 0h2m-152 1h2m150 0h2m-156 1h2m154 0h2m-161 2h2m160 0h2m-166 1h2m164 0h2m-171 2h2m170 0h2m-177 2h2m176 0h2m-183 2h2m182 0h2m-190 3h2m190 0h2m-198 3h2m198 0h2m-208 5h2m210 0h2m-214 239h2m210 0h2m-208 5h2m198 0h2m-198 3h2m190 0h2m-190 3h2m182 0h2m-183 2h2m176 0h2m-177 2h2m170 0h2m-171 2h2m164 0h2m-166 1h2m160 0h2m-161 2h2m154 0h2m-156 1h2m150 0h2m-152 1h2m146 0h2m-148 1h2m142 0h2m-144 1h2m138 0h2m-140 1h2m134 0h2m-136 1h2m130 0h2m-132 1h3m124 0h3m-127 1h2m120 0h2m-122 1h3m114 0h3m-117 1h2m110 0h2m-112 1h3m104 0h3m-107 1h3m98 0h3m-101 1h4m90 0h4m-94 1h3m84 0h3m-87 1h4m76 0h4m-80 1h4m68 0h4m-72 1h5m58 0h5m-63 1h7m44 0h7m-51 1h9m26 0h9m-35 1h26m-208 42h2m386 0h2m-379 10h2m364 0h2m-362 5h2m352 0h2m-351 4h2m342 0h2m-342 3h2m334 0h2m-334 3h2m326 0h2m-326 3h2m318 0h2m-319 2h2m312 0h2m-313 2h2m306 0h2m-307 2h2m300 0h2m-301 2h2m294 0h2m-296 1h2m290 0h2m-291 2h2m284 0h2m-286 1h2m280 0h2m-282 1h2m276 0h2m-277 2h2m270 0h2m-272 1h2m266 0h2m-268 1h2m262 0h2m-264 1h2m258 0h2m-260 1h2m254 0h2m-256 1h2m250 0h2m-252 1h2m246 0h2m-248 1h2m242 0h2m-244 1h2m238 0h2m-240 1h2m234 0h2m-236 1h2m230 0h2m-232 1h2m226 0h2m-228 1h3m220 0h3m-223 1h2m216 0h2m-218 1h3m210 0h3m-213 1h2m206 0h2m-208 1h3m200 0h3m-203 1h2m196 0h2m-198 1h3m190 0h3m-193 1h3m184 0h3m-187 1h3m178 0h3m-181 1h3m172 0h3m-175 1h3m166 0h3m-169 1h3m160 0h3m-163 1h4m152 0h4m-156 1h3m146 0h3m-149 1h4m138 0h4m-142 1h4m130 0h4m-134 1h5m120 0h5m-125 1h4m112 0h4m-116 1h6m100 0h6m-106 1h5m90 0h5m-95 1h7m76 0h7m-83 1h9m58 0h9m-67 1h12m34 0h12m-46 1h34m-286 17h2m534 0h2m-529 8h2m516 0h2m-514 5h2m504 0h2m-503 4h2m494 0h2m-494 3h2m486 0h2m-486 3h2m478 0h2m-478 3h2m470 0h2m-470 3h2m462 0h2m-463 2h2m456 0h2m-456 3h2m448 0h2m-449 2h2m442 0h2m-443 2h2m436 0h2m-438 1h2m432 0h2m-433 2h2m426 0h2m-427 2h2m420 0h2m-422 1h2m416 0h2m-417 2h2m410 0h2m-412 1h2m406 0h2m-407 2h2m400 0h2m-402 1h2m396 0h2m-397 2h2m390 0h2m-392 1h2m386 0h2m-388 1h2m382 0h2m-384 1h2m378 0h2m-380 1h2m374 0h2m-375 2h2m368 0h2m-370 1h2m364 0h2m-366 1h2m360 0h2m-362 1h2m356 0h2m-358 1h2m352 0h2m-354 1h2m348 0h2m-350 1h3m342 0h3m-345 1h2m338 0h2m-340 1h2m334 0h2m-336 1h2m330 0h2m-332 1h2m326 0h2m-328 1h2m322 0h2m-324 1h3m316 0h3m-319 1h2m312 0h2m-314 1h3m306 0h3m-309 1h2m302 0h2m-304 1h2m298 0h2m-300 1h3m292 0h3m-295 1h3m286 0h3m-289 1h2m282 0h2m-284 1h3m276 0h3m-279 1h3m270 0h3m-273 1h2m266 0h2m-268 1h3m260 0h3m-263 1h3m254 0h3m-257 1h3m248 0h3m-482 1h2m229 0h3m242 0h3m229 0h2m-476 1h4m234 0h4m-238 1h3m228 0h3m-231 1h3m222 0h3m-225 1h4m214 0h4m-218 1h4m206 0h4m-210 1h3m200 0h3m-203 1h4m192 0h4m-196 1h5m182 0h5m-187 1h4m174 0h4m-435 1h2m255 0h5m164 0h5m255 0h2m-426 1h5m154 0h5m-159 1h5m144 0h5m-149 1h5m134 0h5m-139 1h7m120 0h7m-127 1h7m106 0h7m-397 1h2m282 0h8m90 0h8m282 0h2m-382 1h10m70 0h10m-80 1h15m40 0h15"/><path transform="translate(.5 0)" stroke="#e0e0e0" d="M0 0m6 75v1m0 662v1m1-665v1m0 312v40m0 312v1m1-667v1m0 298v15m0 40v15m0 298v1m1-669v1m0 289v10m0 70v10m0 289v1m1-672v2m0 282v8m0 90v8m0 282v2m1-675v1m0 277v7m0 106v7m0 277v1m1-677v1m0 271v7m0 120v7m0 271v1m1-679v1m0 267v5m0 134v5m0 267v1m1-681v1m0 263v5m0 144v5m0 263v1m1-683v1m0 259v5m0 154v5m0 259v1m1-686v2m0 255v5m0 164v5m0 255v2m1-689v1m0 253v4m0 174v4m0 253v1m1-691v1m0 249v5m0 182v5m0 249v1m1-693v1m0 246v4m0 192v4m0 246v1m1-695v1m0 244v3m0 200v3m0 244v1m1-697v1m0 241v4m0 206v4m0 241v1m1-699v1m0 238v4m0 214v4m0 238v1m1-701v1m0 236v3m0 222v3m0 236v1m1-703v1m0 234v3m0 228v3m0 234v1m1-705v1m0 231v4m0 234v4m0 231v1m1-708v2m0 229v3m0 242v3m0 229v2m1-711v1m0 228v3m0 248v3m0 228v1m1-713v1m0 226v3m0 254v3m0 226v1m1-715v1m0 224v3m0 260v3m0 224v1m1-717v1m0 223v2m0 266v2m0 223v1m1-719v1m0 221v3m0 270v3m0 221v1m1-721v1m0 219v3m0 276v3m0 219v1m1-723v1m0 218v2m0 282v2m0 218v1m1-725v1m0 216v3m0 286v3m0 216v1m1-727v1m0 214v3m0 292v3m0 214v1m1-729v1m0 213v2m0 298v2m0 213v1m1-731v1m0 212v2m0 302v2m0 212v1m1-733v1m0 210v3m0 306v3m0 210v1m1-735v1m0 209v2m0 312v2m0 209v1m1-737v1m0 207v3m0 316v3m0 207v1m1-739v1m0 206v2m0 322v2m0 206v1m1-741v1m0 205v2m0 326v2m0 205v1m1-743v1m0 204v2m0 330v2m0 204v1m1-745v1m0 203v2m0 334v2m0 203v1m1-747v1m0 202v2m0 338v2m0 202v1m1-749v1m0 200v3m0 342v3m0 200v1m1-751v1m0 199v2m0 348v2m0 199v1m1-753v1m0 198v2m0 352v2m0 198v1m1-755v1m0 197v2m0 356v2m0 197v1m1-757v1m0 196v2m0 360v2m0 196v1m1-759v1m0 195v2m0 364v2m0 195v1m1-566v2m0 368v2m1-373v1m0 372v1m1-569v1m0 192v2m0 374v2m0 192v1m1-765v1m0 191v2m0 378v2m0 191v1m1-767v1m0 190v2m0 382v2m0 190v1m1-769v1m0 189v2m0 386v2m0 189v1m1-771v1m0 188v2m0 390v2m0 188v1m1-773v1m0 188v1m0 394v1m0 188v1m1-775v1m0 187v2m0 396v2m0 187v1m1-777v1m0 186v2m0 400v2m0 186v1m1-779v1m0 186v1m0 404v1m0 186v1m1-595v2m0 406v2m1-412v2m0 410v2m1-599v1m0 183v1m0 414v1m0 183v1m1-785v1m0 182v2m0 416v2m0 182v1m1-787v1m0 181v2m0 420v2m0 181v1m1-789v1m0 181v1m0 424v1m0 181v1m1-791v1m0 180v2m0 426v2m0 180v1m1-612v1m0 430v1m1-434v2m0 432v2m1-616v1m0 177v2m0 436v2m0 177v1m1-797v1m0 177v1m0 440v1m0 177v1m1-799v1m0 176v2m0 442v2m1-624v1m0 176v1m0 446v1m1-450v2m0 448v2m1-453v1m0 452v1m1-455v1m0 454v1m1-458v2m0 456v2m1-461v1m0 460v1m1-464v2m0 462v2m1-467v1m0 466v1m1-469v1m0 468v1m1-472v2m0 470v2m1-475v1m0 474v1m1-477v1m0 476v1m1-480v2m0 478v2m1-483v1m0 482v1m1-485v1m0 484v1m1-488v2m0 486v2m1-491v1m0 490v1m1-493v1m0 492v1m1-496v2m0 494v2m1-499v1m0 498v1m1-501v1m0 500v1m1-503v1m0 502v1m1-506v2m0 504v2m1-509v1m0 508v1m1-511v1m0 510v1m1-513v1m0 512v1m1-515v1m0 514v1m1-518v2m0 516v2m1-521v1m0 520v1m1-523v1m0 522v1m1-525v1m0 524v1m1-527v1m0 526v1m1-529v1m0 528v1m1-531v1m0 530v1m1-533v1m0 532v1m1-536v2m0 534v2m1-539v1m0 538v1m1-541v1m0 540v1m1-543v1m0 542v1m1-545v1m0 544v1m1-547v1m0 546v1m1-549v1m0 548v1m1-551v1m0 550v1m1-553v1m0 552v1m1-555v1m0 554v1m1-557v1m0 556v1m1-559v1m0 558v1m1-561v1m0 560v1m1-563v1m0 562v1m1-565v1m0 564v1m1-567v1m0 566v1m1-569v1m0 568v1m1-571v1m0 268v34m0 268v1m1-573v1m0 257v12m0 34v12m0 257v1m1-575v1m0 249v9m0 58v9m0 249v1m1-577v1m0 243v7m0 76v7m0 243v1m1-579v1m0 239v5m0 90v5m0 239v1m1-581v1m0 234v6m0 100v6m0 234v1m1-583v1m0 231v4m0 112v4m0 231v1m1-585v1m0 227v5m0 120v5m0 227v1m1-587v1m0 224v4m0 130v4m0 224v1m1-589v1m0 221v4m0 138v4m0 221v1m1-591v1m0 219v3m0 146v3m0 219v1m1-376v4m0 152v4m1-163v3m0 160v3m1-381v1m0 211v3m0 166v3m0 211v1m1-597v1m0 209v3m0 172v3m0 209v1m1-599v1m0 207v3m0 178v3m0 207v1m1-601v1m0 205v3m0 184v3m0 205v1m1-603v1m0 203v3m0 190v3m0 203v1m1-605v1m0 202v2m0 196v2m0 202v1m1-607v1m0 200v3m0 200v3m0 200v1m1-409v2m0 206v2m1-213v3m0 210v3m1-414v1m0 195v2m0 216v2m0 195v1m1-613v1m0 193v3m0 220v3m0 193v1m1-615v1m0 192v2m0 226v2m0 192v1m1-617v1m0 191v2m0 230v2m0 191v1m1-428v2m0 234v2m1-240v2m0 238v2m1-432v1m0 187v2m0 242v2m0 187v1m1-623v1m0 186v2m0 246v2m0 186v1m1-625v1m0 185v2m0 250v2m0 185v1m1-442v2m0 254v2m1-260v2m0 258v2m1-446v1m0 181v2m0 262v2m0 181v1m1-631v1m0 180v2m0 266v2m0 180v1m1-453v2m0 270v2m1-275v1m0 274v1m1-456v1m0 177v2m0 276v2m0 177v1m1-637v1m0 176v2m0 280v2m0 176v1m1-463v2m0 284v2m1-289v1m0 288v1m1-466v1m0 173v2m0 290v2m0 173v1m1-643v1m0 172v2m0 294v2m0 172v1m1-472v1m0 298v1m1-302v2m0 300v2m1-476v1m0 170v1m0 304v1m0 170v1m1-649v1m0 169v2m0 306v2m0 169v1m1-481v1m0 310v1m1-314v2m0 312v2m1-485v1m0 167v1m0 316v1m0 167v1m1-488v2m0 318v2m1-323v1m0 322v1m1-491v1m0 165v1m0 324v1m0 165v1m1-659v1m0 164v2m0 326v2m0 164v1m1-496v1m0 330v1m1-333v1m0 332v1m1-499v1m0 162v2m0 334v2m0 162v1m1-502v1m0 338v1m1-341v1m0 340v1m1-505v1m0 160v2m0 342v2m0 160v1m1-508v1m0 346v1m1-349v1m0 348v1m1-351v1m0 350v1m1-354v2m0 352v2m1-515v1m0 157v1m0 356v1m0 157v1m1-517v1m0 358v1m1-361v1m0 360v1m1-520v1m0 156v1m0 362v1m0 156v1m1-523v2m0 364v2m1-369v1m0 368v1m1-371v1m0 370v1m1-373v1m0 372v1m1-529v1m0 153v1m0 374v1m0 153v1m1-531v1m0 376v1m1-379v1m0 378v1m1-381v1m0 380v1m1-383v1m0 382v1m1-537v1m0 151v1m0 384v1m0 151v1m1-540v2m0 386v2m1-391v1m0 390v1m1-393v1m0 392v1m1-395v1m0 394v1m1-546v1m0 148v1m0 396v1m0 148v1m1-548v1m0 398v1m1-401v1m0 400v1m3-404v1m0 404v1m1-407v1m0 406v1m1-409v1m0 408v1m1-411v1m0 410v1m1-413v1m0 412v1m1-415v1m0 414v1m1-562v1m0 144v1m0 416v1m0 144v1m1-564v1m0 418v1m1-421v1m0 420v1m3-424v1m0 424v1m1-427v1m0 426v1m1-429v1m0 428v1m1-431v1m0 430v1m3-434v1m0 434v1m1-437v1m0 436v1m1-439v1m0 438v1m3-442v1m0 442v1m1-445v1m0 444v1m3-448v1m0 448v1m1-451v1m0 450v1m3-454v1m0 454v1m1-457v1m0 456v1m2-242v26m1-244v1m0 208v9m0 26v9m0 208v1m1-260v7m0 44v7m1-63v5m0 58v5m1-267v1m0 194v4m0 68v4m0 194v1m1-275v4m0 76v4m1-87v3m0 84v3m1-280v1m0 185v4m0 90v4m0 185v1m1-287v3m0 98v3m1-107v3m0 104v3m1-292v1m0 179v2m0 110v2m0 179v1m1-297v3m0 114v3m1-122v2m0 120v2m1-127v3m0 124v3m1-132v2m0 130v2m1-307v1m0 170v2m0 134v2m0 170v1m1-311v2m0 138v2m1-144v2m0 142v2m1-148v2m0 146v2m1-152v2m0 150v2m1-156v2m0 154v2m1-159v1m0 158v1m1-324v1m0 161v2m0 160v2m0 161v1m1-328v2m0 164v2m1-169v1m0 168v1m1-172v2m0 170v2m1-175v1m0 174v1m1-178v2m0 176v2m1-181v1m0 180v1m1-184v2m0 182v2m1-187v1m0 186v1m1-189v1m0 188v1m1-192v2m0 190v2m1-195v1m0 194v1m1-197v1m0 196v1m1-200v2m0 198v2m1-203v1m0 202v1m1-205v1m0 204v1m1-207v1m0 206v1m1-209v1m0 208v1m1-212v2m0 210v2m1-215v1m0 214v1m1-217v1m0 216v1m1-219v1m0 218v1m1-221v1m0 220v1m1-223v1m0 222v1m1-225v1m0 224v1m1-227v1m0 226v1m1-229v1m0 228v1m1-231v1m0 230v1m1-233v1m0 232v1m1-235v1m0 234v1m1-237v1m0 236v1m3-240v1m0 240v1m1-243v1m0 242v1m1-245v1m0 244v1m1-247v1m0 246v1m3-250v1m0 250v1m1-253v1m0 252v1m3-256v1m0 256v1m1-259v1m0 258v1m3-262v1m0 262v1m3-266v1m0 266v1m3-270v1m0 270v1m5-275v1m0 276v1m67-299v1m92 20v1m0 276v1m5-275v1m0 270v1m3-270v1m0 266v1m3-266v1m0 262v1m3-262v1m0 258v1m1-259v1m0 256v1m3-256v1m0 252v1m1-253v1m0 250v1m3-250v1m0 246v1m1-247v1m0 244v1m1-245v1m0 242v1m1-243v1m0 240v1m3-240v1m0 236v1m1-237v1m0 234v1m1-235v1m0 232v1m1-233v1m0 230v1m1-231v1m0 228v1m1-229v1m0 226v1m1-227v1m0 224v1m1-225v1m0 222v1m1-223v1m0 220v1m1-221v1m0 218v1m1-219v1m0 216v1m1-217v1m0 214v1m1-215v2m0 210v2m1-212v1m0 208v1m1-209v1m0 206v1m1-207v1m0 204v1m1-205v1m0 202v1m1-203v2m0 198v2m1-200v1m0 196v1m1-197v1m0 194v1m1-195v2m0 190v2m1-192v1m0 188v1m1-189v1m0 186v1m1-187v2m0 182v2m1-184v1m0 180v1m1-181v2m0 176v2m1-178v1m0 174v1m1-175v2m0 170v2m1-172v1m0 168v1m1-169v2m0 164v2m1-328v1m0 161v2m0 160v2m0 161v1m1-324v1m0 158v1m1-159v2m0 154v2m1-156v2m0 150v2m1-152v2m0 146v2m1-148v2m0 142v2m1-144v2m0 138v2m1-311v1m0 170v2m0 134v2m0 170v1m1-307v2m0 130v2m1-132v3m0 124v3m1-127v2m0 120v2m1-122v3m0 114v3m1-297v1m0 179v2m0 110v2m0 179v1m1-292v3m0 104v3m1-107v3m0 98v3m1-287v1m0 185v4m0 90v4m0 185v1m1-280v3m0 84v3m1-87v4m0 76v4m1-275v1m0 194v4m0 68v4m0 194v1m1-267v5m0 58v5m1-63v7m0 44v7m1-260v1m0 208v9m0 26v9m0 208v1m1-244v26m2-242v1m0 456v1m1-457v1m0 454v1m3-454v1m0 450v1m1-451v1m0 448v1m3-448v1m0 444v1m1-445v1m0 442v1m3-442v1m0 438v1m1-439v1m0 436v1m1-437v1m0 434v1m3-434v1m0 430v1m1-431v1m0 428v1m1-429v1m0 426v1m1-427v1m0 424v1m3-424v1m0 420v1m1-421v1m0 418v1m1-564v1m0 144v1m0 416v1m0 144v1m1-562v1m0 414v1m1-415v1m0 412v1m1-413v1m0 410v1m1-411v1m0 408v1m1-409v1m0 406v1m1-407v1m0 404v1m3-404v1m0 400v1m1-401v1m0 398v1m1-548v1m0 148v1m0 396v1m0 148v1m1-546v1m0 394v1m1-395v1m0 392v1m1-393v1m0 390v1m1-391v2m0 386v2m1-540v1m0 151v1m0 384v1m0 151v1m1-537v1m0 382v1m1-383v1m0 380v1m1-381v1m0 378v1m1-379v1m0 376v1m1-531v1m0 153v1m0 374v1m0 153v1m1-529v1m0 372v1m1-373v1m0 370v1m1-371v1m0 368v1m1-369v2m0 364v2m1-523v1m0 156v1m0 362v1m0 156v1m1-520v1m0 360v1m1-361v1m0 358v1m1-517v1m0 157v1m0 356v1m0 157v1m1-515v2m0 352v2m1-354v1m0 350v1m1-351v1m0 348v1m1-349v1m0 346v1m1-508v1m0 160v2m0 342v2m0 160v1m1-505v1m0 340v1m1-341v1m0 338v1m1-502v1m0 162v2m0 334v2m0 162v1m1-499v1m0 332v1m1-333v1m0 330v1m1-496v1m0 164v2m0 326v2m0 164v1m1-659v1m0 165v1m0 324v1m0 165v1m1-491v1m0 322v1m1-323v2m0 318v2m1-488v1m0 167v1m0 316v1m0 167v1m1-485v2m0 312v2m1-314v1m0 310v1m1-481v1m0 169v2m0 306v2m0 169v1m1-649v1m0 170v1m0 304v1m0 170v1m1-476v2m0 300v2m1-302v1m0 298v1m1-472v1m0 172v2m0 294v2m0 172v1m1-643v1m0 173v2m0 290v2m0 173v1m1-466v1m0 288v1m1-289v2m0 284v2m1-463v1m0 176v2m0 280v2m0 176v1m1-637v1m0 177v2m0 276v2m0 177v1m1-456v1m0 274v1m1-275v2m0 270v2m1-453v1m0 180v2m0 266v2m0 180v1m1-631v1m0 181v2m0 262v2m0 181v1m1-446v2m0 258v2m1-260v2m0 254v2m1-442v1m0 185v2m0 250v2m0 185v1m1-625v1m0 186v2m0 246v2m0 186v1m1-623v1m0 187v2m0 242v2m0 187v1m1-432v2m0 238v2m1-240v2m0 234v2m1-428v1m0 191v2m0 230v2m0 191v1m1-617v1m0 192v2m0 226v2m0 192v1m1-615v1m0 193v3m0 220v3m0 193v1m1-613v1m0 195v2m0 216v2m0 195v1m1-414v3m0 210v3m1-213v2m0 206v2m1-409v1m0 200v3m0 200v3m0 200v1m1-607v1m0 202v2m0 196v2m0 202v1m1-605v1m0 203v3m0 190v3m0 203v1m1-603v1m0 205v3m0 184v3m0 205v1m1-601v1m0 207v3m0 178v3m0 207v1m1-599v1m0 209v3m0 172v3m0 209v1m1-597v1m0 211v3m0 166v3m0 211v1m1-381v3m0 160v3m1-163v4m0 152v4m1-376v1m0 219v3m0 146v3m0 219v1m1-591v1m0 221v4m0 138v4m0 221v1m1-589v1m0 224v4m0 130v4m0 224v1m1-587v1m0 227v5m0 120v5m0 227v1m1-585v1m0 231v4m0 112v4m0 231v1m1-583v1m0 234v6m0 100v6m0 234v1m1-581v1m0 239v5m0 90v5m0 239v1m1-579v1m0 243v7m0 76v7m0 243v1m1-577v1m0 249v9m0 58v9m0 249v1m1-575v1m0 257v12m0 34v12m0 257v1m1-573v1m0 268v34m0 268v1m1-571v1m0 568v1m1-569v1m0 566v1m1-567v1m0 564v1m1-565v1m0 562v1m1-563v1m0 560v1m1-561v1m0 558v1m1-559v1m0 556v1m1-557v1m0 554v1m1-555v1m0 552v1m1-553v1m0 550v1m1-551v1m0 548v1m1-549v1m0 546v1m1-547v1m0 544v1m1-545v1m0 542v1m1-543v1m0 540v1m1-541v1m0 538v1m1-539v2m0 534v2m1-536v1m0 532v1m1-533v1m0 530v1m1-531v1m0 528v1m1-529v1m0 526v1m1-527v1m0 524v1m1-525v1m0 522v1m1-523v1m0 520v1m1-521v2m0 516v2m1-518v1m0 514v1m1-515v1m0 512v1m1-513v1m0 510v1m1-511v1m0 508v1m1-509v2m0 504v2m1-506v1m0 502v1m1-503v1m0 500v1m1-501v1m0 498v1m1-499v2m0 494v2m1-496v1m0 492v1m1-493v1m0 490v1m1-491v2m0 486v2m1-488v1m0 484v1m1-485v1m0 482v1m1-483v2m0 478v2m1-480v1m0 476v1m1-477v1m0 474v1m1-475v2m0 470v2m1-472v1m0 468v1m1-469v1m0 466v1m1-467v2m0 462v2m1-464v1m0 460v1m1-461v2m0 456v2m1-458v1m0 454v1m1-455v1m0 452v1m1-453v2m0 448v2m1-627v1m0 176v1m0 446v1m1-624v1m0 176v2m0 442v2m1-622v1m0 177v1m0 440v1m0 177v1m1-797v1m0 177v2m0 436v2m0 177v1m1-616v2m0 432v2m1-434v1m0 430v1m1-612v1m0 180v2m0 426v2m0 180v1m1-791v1m0 181v1m0 424v1m0 181v1m1-789v1m0 181v2m0 420v2m0 181v1m1-787v1m0 182v2m0 416v2m0 182v1m1-785v1m0 183v1m0 414v1m0 183v1m1-599v2m0 410v2m1-412v2m0 406v2m1-595v1m0 186v1m0 404v1m0 186v1m1-779v1m0 186v2m0 400v2m0 186v1m1-777v1m0 187v2m0 396v2m0 187v1m1-775v1m0 188v1m0 394v1m0 188v1m1-773v1m0 188v2m0 390v2m0 188v1m1-771v1m0 189v2m0 386v2m0 189v1m1-769v1m0 190v2m0 382v2m0 190v1m1-767v1m0 191v2m0 378v2m0 191v1m1-765v1m0 192v2m0 374v2m0 192v1m1-569v1m0 372v1m1-373v2m0 368v2m1-566v1m0 195v2m0 364v2m0 195v1m1-759v1m0 196v2m0 360v2m0 196v1m1-757v1m0 197v2m0 356v2m0 197v1m1-755v1m0 198v2m0 352v2m0 198v1m1-753v1m0 199v2m0 348v2m0 199v1m1-751v1m0 200v3m0 342v3m0 200v1m1-749v1m0 202v2m0 338v2m0 202v1m1-747v1m0 203v2m0 334v2m0 203v1m1-745v1m0 204v2m0 330v2m0 204v1m1-743v1m0 205v2m0 326v2m0 205v1m1-741v1m0 206v2m0 322v2m0 206v1m1-739v1m0 207v3m0 316v3m0 207v1m1-737v1m0 209v2m0 312v2m0 209v1m1-735v1m0 210v3m0 306v3m0 210v1m1-733v1m0 212v2m0 302v2m0 212v1m1-731v1m0 213v2m0 298v2m0 213v1m1-729v1m0 214v3m0 292v3m0 214v1m1-727v1m0 216v3m0 286v3m0 216v1m1-725v1m0 218v2m0 282v2m0 218v1m1-723v1m0 219v3m0 276v3m0 219v1m1-721v1m0 221v3m0 270v3m0 221v1m1-719v1m0 223v2m0 266v2m0 223v1m1-717v1m0 224v3m0 260v3m0 224v1m1-715v1m0 226v3m0 254v3m0 226v1m1-713v1m0 228v3m0 248v3m0 228v1m1-711v2m0 229v3m0 242v3m0 229v2m1-708v1m0 231v4m0 234v4m0 231v1m1-705v1m0 234v3m0 228v3m0 234v1m1-703v1m0 236v3m0 222v3m0 236v1m1-701v1m0 238v4m0 214v4m0 238v1m1-699v1m0 241v4m0 206v4m0 241v1m1-697v1m0 244v3m0 200v3m0 244v1m1-695v1m0 246v4m0 192v4m0 246v1m1-693v1m0 249v5m0 182v5m0 249v1m1-691v1m0 253v4m0 174v4m0 253v1m1-689v2m0 255v5m0 164v5m0 255v2m1-686v1m0 259v5m0 154v5m0 259v1m1-683v1m0 263v5m0 144v5m0 263v1m1-681v1m0 267v5m0 134v5m0 267v1m1-679v1m0 271v7m0 120v7m0 271v1m1-677v1m0 277v7m0 106v7m0 277v1m1-675v2m0 282v8m0 90v8m0 282v2m1-672v1m0 289v10m0 70v10m0 289v1m1-669v1m0 298v15m0 40v15m0 298v1"/><circle cx="407" cy="407" r="39.5" stroke="#ff0000" stroke-width="1"/><path fill="#f0e0e0" d="M385 374h1v1h-1zM379 378h1v1h-1zM376 381h1v1h-1zM374 385h1v1h-1zM369 393h1v1h-1zM367 401h1v1h-1zM428 374h1v1h-1zM432 376h1v1h-1zM437 381h1v1h-1zM444 393h1v1h-1zM446 401h1v1h-1zM420 369h1v1h-1zM393 369h1v1h-1z"/><path stroke="#e8601c" d="M508.0 20.5h7M511.5 17.0v7"/><path stroke="#e8601c" d="M573.0 44.5h7M576.5 41.0v7"/><circle cx="112.5" cy="700.5" r="4" stroke="#e8901c" shape-rendering="auto"/><path stroke="#e8901c" d="M110.0 700.5h5M112.5 698.0v5"/><path stroke="#e8901c" d="M506.0 775.5h7M509.5 772.0v7"/><g font-family="Liberation Mono,monospace" font-size="11" fill="#ffff99" text-anchor="middle" stroke="#4a3e39" stroke-width="1" paint-order="stroke" shape-rendering="auto"><text x="406" y="10.8">313</text><text x="406" y="131.5">219</text><text x="406" y="251.5">125</text><text x="406" y="371.5">31</text></g></svg>
</div>
<div class="pn" style="left:812px;top:8px;width:320px;height:320px"></div>
<div class="pn" style="left:812px;top:333px;width:320px;height:114px"></div>
<div class="pn" style="left:812px;top:453px;width:320px;height:350px"></div>
<div class="bx" style="left:819px;top:16px;width:58px;height:18px;background:#5c0000"></div>
<div class="bx" style="left:883px;top:16px;width:58px;height:18px;background:#333"></div>
<div class="bx" style="left:994px;top:16px;width:128px;height:18px;background:#333"></div>
<div class="bx" style="left:821px;top:64px;width:82px;height:16px;background:#555;border-color:#dcdcdc"></div>
<div class="bx" style="left:931px;top:64px;width:82px;height:16px;background:#555;border-color:#dcdcdc"></div>
<div class="bx" style="left:1041px;top:64px;width:82px;height:16px;background:#555;border-color:#dcdcdc"></div>
<div class="ln" style="left:821px;top:217px;width:303px"></div>
<div class="ln" style="left:821px;top:358px;width:303px"></div>
<div class="bar" style="left:925px;top:227px"><i style="width:10px;background:#ff0000"></i></div>
<div class="bar" style="left:1028px;top:227px"><i style="width:11px;background:#99ccff"></i></div>
<div class="bar" style="left:925px;top:281px"><i style="width:20px;background:#e95ca8"></i></div>
<div class="bar" style="left:1028px;top:281px"><i style="width:11px;background:#00e000"></i></div>
<div style="position:absolute;left:8px;top:758px;width:244px;height:46px;background:#000"></div>
<div style="position:absolute;left:9px;top:759px;width:243px;height:44px;box-sizing:border-box;border:1px solid #a8a8a8"></div>
<div style="position:absolute;left:685px;top:792px;width:121px;height:14px;background:#000"></div>
<svg style="position:absolute;left:0;top:0" width="1138" height="812"><g stroke="#00ffff" fill="none" stroke-width="1.15"><circle cx="60.5" cy="780.5" r="4"/><path d="M58 780.5h5"/><path d="M82 780.5h7" shape-rendering="crispEdges"/><circle cx="110.5" cy="780.5" r="4"/><path d="M108 780.5h5M110.5 778.0v5"/><path d="M132 780.5h7M135.5 777.0v7" shape-rendering="crispEdges"/></g><g stroke="#ffff00" fill="none" stroke-width="1.15"><circle cx="60.5" cy="793.5" r="4"/><path d="M58 793.5h5"/><path d="M82 793.5h7" shape-rendering="crispEdges"/><circle cx="110.5" cy="793.5" r="4"/><path d="M108 793.5h5M110.5 791.0v5"/><path d="M132 793.5h7M135.5 790.0v7" shape-rendering="crispEdges"/></g></svg>
<svg style="position:absolute;left:0;top:0" width="1138" height="812" shape-rendering="crispEdges"><g stroke="#d0d0d0" stroke-width="1" fill="none"><path d="M1088.5 542V777.5H822"/><path d="M822.5 774V777.5"/><path d="M866.5 774V777.5"/><path d="M911.5 774V777.5"/><path d="M955.5 774V777.5"/><path d="M999.5 774V777.5"/><path d="M1044.5 774V777.5"/><path d="M1088.5 774V777.5"/><path d="M1085 542.5H1088.5"/><path d="M1085 581.5H1088.5"/><path d="M1085 620.5H1088.5"/><path d="M1085 659.5H1088.5"/><path d="M1085 699.5H1088.5"/><path d="M1085 738.5H1088.5"/></g></svg>
<span id="t_strike" class="t" style="left:822.95px;top:19.71px;font-size:12px;line-height:12px;font-weight:bold;color:#dccaca;transform:scaleX(1.1304)">STRIKE</span>
<span id="t_noise" class="t" style="left:890.72px;top:19.71px;font-size:12px;line-height:12px;font-weight:bold;color:#bdbdbd;transform:scaleX(1.1676)">NOISE</span>
<span id="t_bng" class="t" style="left:998.01px;top:19.91px;font-size:12.5px;line-height:12.5px;font-weight:bold;color:#ffffff;transform:scaleX(1.1532)">Bng 224°</span>
<span id="t_dist" class="t" style="left:1074.95px;top:19.91px;font-size:12.5px;line-height:12.5px;font-weight:bold;color:#00e000;transform:scaleX(1.2175)">325mi</span>
<span id="t_spm" class="t" style="left:829.33px;top:67.28px;font-size:11.5px;line-height:11.5px;font-weight:normal;color:#f0f0f0;transform:scaleX(1.1497)">Strikes/min</span>
<span id="t_cpm" class="t" style="left:943.01px;top:67.28px;font-size:11.5px;line-height:11.5px;font-weight:normal;color:#f0f0f0;transform:scaleX(1.1277)">Close/min</span>
<span id="t_npm" class="t" style="left:1050.06px;top:67.28px;font-size:11.5px;line-height:11.5px;font-weight:normal;color:#f0f0f0;transform:scaleX(1.0974)">Noises/min</span>
<span id="t_z1" class="t" style="left:883.03px;top:88.00px;font-size:28px;line-height:28px;font-weight:bold;color:#ffffff;transform:scaleX(1.2861)">0</span>
<span id="t_z2" class="t" style="left:993.28px;top:88.00px;font-size:28px;line-height:28px;font-weight:bold;color:#ffffff;transform:scaleX(1.2845)">0</span>
<span id="t_z3" class="t" style="left:1102.83px;top:88.00px;font-size:28px;line-height:28px;font-weight:bold;color:#bcbcbc;transform:scaleX(1.2955)">0</span>
<span id="t_ts" class="t" style="left:826.83px;top:132.89px;font-size:12.3px;line-height:12.3px;font-weight:normal;color:#ffffff;transform:scaleX(1.1321)">Total Strikes</span>
<span id="t_tsv" class="t" style="left:887.98px;top:150.69px;font-size:12.3px;line-height:12.3px;font-weight:normal;color:#ffffff;transform:scaleX(1.0675)">20</span>
<span id="t_tc" class="t" style="left:944.07px;top:132.89px;font-size:12.3px;line-height:12.3px;font-weight:normal;color:#ffffff;transform:scaleX(1.1249)">Total Close</span>
<span id="t_tcv" class="t" style="left:1005.62px;top:150.69px;font-size:12.3px;line-height:12.3px;font-weight:normal;color:#ffffff;transform:scaleX(1.0720)">0</span>
<span id="t_tn" class="t" style="left:1047.63px;top:132.89px;font-size:12.3px;line-height:12.3px;font-weight:normal;color:#bdbdbd;transform:scaleX(1.1252)">Total Noises</span>
<span id="t_tnv" class="t" style="left:1107.28px;top:150.69px;font-size:12.3px;line-height:12.3px;font-weight:normal;color:#bdbdbd;transform:scaleX(1.1411)">59</span>
<span id="t_ltd" class="t" style="left:820.13px;top:204.98px;font-size:12.1px;line-height:12.1px;font-weight:normal;color:#c8c8c8;transform:scaleX(1.2126)">Lightning type distribution</span>
<span id="t_cg" class="t" style="left:821.66px;top:226.51px;font-size:12px;line-height:12px;font-weight:bold;color:#ffffff;transform:scaleX(1.0617)">Cloud-ground</span>
<span id="t_cgp" class="t" style="left:913.14px;top:225.88px;font-size:13px;line-height:13px;font-weight:normal;color:#dddddd;transform:scaleX(1.0722)">+</span>
<span id="t_cg1" class="t" style="left:979.41px;top:226.51px;font-size:12px;line-height:12px;font-weight:bold;color:#ffffff;transform:scaleX(1.2085)">20%</span>
<span id="t_cgm" class="t" style="left:1016.47px;top:226.51px;font-size:12px;line-height:12px;font-weight:bold;color:#dddddd;transform:scaleX(0.9504)">−</span>
<span id="t_cg2" class="t" style="left:1082.41px;top:226.51px;font-size:12px;line-height:12px;font-weight:bold;color:#ffffff;transform:scaleX(1.2085)">20%</span>
<span id="t_c1" class="t" style="left:821.20px;top:250.51px;font-size:12px;line-height:12px;font-weight:bold;color:#bdbdbd;transform:scaleX(1.1068)">Count</span>
<span id="t_c1a" class="t" style="left:925.67px;top:250.51px;font-size:12px;line-height:12px;font-weight:bold;color:#ffffff;transform:scaleX(1.0638)">4</span>
<span id="t_c1b" class="t" style="left:1028.67px;top:250.51px;font-size:12px;line-height:12px;font-weight:bold;color:#ffffff;transform:scaleX(1.0383)">4</span>
<span id="t_ic" class="t" style="left:821.38px;top:280.81px;font-size:12px;line-height:12px;font-weight:bold;color:#ffffff;transform:scaleX(1.0962)">Intracloud</span>
<span id="t_icp" class="t" style="left:913.14px;top:280.18px;font-size:13px;line-height:13px;font-weight:normal;color:#dddddd;transform:scaleX(1.0722)">+</span>
<span id="t_ic1" class="t" style="left:979.63px;top:280.81px;font-size:12px;line-height:12px;font-weight:bold;color:#ffffff;transform:scaleX(1.2219)">40%</span>
<span id="t_icm" class="t" style="left:1016.47px;top:280.81px;font-size:12px;line-height:12px;font-weight:bold;color:#dddddd;transform:scaleX(0.9504)">−</span>
<span id="t_ic2" class="t" style="left:1082.41px;top:280.81px;font-size:12px;line-height:12px;font-weight:bold;color:#ffffff;transform:scaleX(1.2085)">20%</span>
<span id="t_c2" class="t" style="left:821.20px;top:304.61px;font-size:12px;line-height:12px;font-weight:bold;color:#bdbdbd;transform:scaleX(1.1068)">Count</span>
<span id="t_c2a" class="t" style="left:925.46px;top:304.61px;font-size:12px;line-height:12px;font-weight:bold;color:#ffffff;transform:scaleX(1.1244)">8</span>
<span id="t_c2b" class="t" style="left:1028.67px;top:304.61px;font-size:12px;line-height:12px;font-weight:bold;color:#ffffff;transform:scaleX(1.0383)">4</span>
<span id="t_time" class="t" style="left:820.76px;top:340.00px;font-size:16px;line-height:16px;font-weight:bold;color:#00e000;transform:scaleX(1.2838)">2/2/2026 11:54:56 AM</span>
<span id="t_sq" class="t" style="left:821.71px;top:377.78px;font-size:12px;line-height:12px;font-weight:normal;color:#ffffff;transform:scaleX(1.1235)">Squelch</span>
<span id="t_sqv" class="t" style="left:909.06px;top:377.78px;font-size:12px;line-height:12px;font-weight:normal;color:#ffffff;transform:scaleX(1.1683)">0</span>
<span id="t_up" class="t" style="left:979.97px;top:377.78px;font-size:12px;line-height:12px;font-weight:normal;color:#ffffff;transform:scaleX(1.1798)">Upload</span>
<span id="t_upv" class="t" style="left:1060.08px;top:377.78px;font-size:12px;line-height:12px;font-weight:normal;color:#bdbdbd;transform:scaleX(1.1754)">Disabled</span>
<span id="t_pe" class="t" style="left:820.54px;top:397.78px;font-size:12px;line-height:12px;font-weight:normal;color:#ffffff;transform:scaleX(1.1697)">Persistence</span>
<span id="t_pev" class="t" style="left:909.70px;top:397.78px;font-size:12px;line-height:12px;font-weight:normal;color:#ffffff;transform:scaleX(1.1680)">90 min</span>
<span id="t_ca" class="t" style="left:980.66px;top:397.78px;font-size:12px;line-height:12px;font-weight:normal;color:#ffffff;transform:scaleX(1.1831)">Capture</span>
<span id="t_cav" class="t" style="left:1061.14px;top:397.78px;font-size:12px;line-height:12px;font-weight:normal;color:#00e000;transform:scaleX(1.1368)">Active</span>
<span id="t_ra" class="t" style="left:820.56px;top:417.68px;font-size:12px;line-height:12px;font-weight:normal;color:#ffffff;transform:scaleX(1.1461)">Range</span>
<span id="t_rav" class="t" style="left:909.54px;top:417.68px;font-size:12px;line-height:12px;font-weight:normal;color:#ffffff;transform:scaleX(1.1683)">313 mi</span>
<span id="t_re" class="t" style="left:980.09px;top:417.68px;font-size:12px;line-height:12px;font-weight:normal;color:#ffffff;transform:scaleX(1.1158)">Receiver</span>
<span id="t_rev" class="t" style="left:1060.08px;top:417.68px;font-size:12px;line-height:12px;font-weight:normal;color:#00e000;transform:scaleX(1.1881)">Enabled</span>
<span id="t_ut" class="t" style="left:820.28px;top:464.78px;font-size:12px;line-height:12px;font-weight:normal;color:#bdbdbd;transform:scaleX(1.1656)">Uptime</span>
<span id="t_utv" class="t" style="left:909.46px;top:464.78px;font-size:12px;line-height:12px;font-weight:normal;color:#ffffff;transform:scaleX(1.2144)">503:40</span>
<span id="t_pt" class="t" style="left:979.82px;top:464.78px;font-size:12px;line-height:12px;font-weight:normal;color:#bdbdbd;transform:scaleX(1.1802)">Peak time</span>
<span id="t_pl" class="t" style="left:1060.04px;top:464.78px;font-size:12px;line-height:12px;font-weight:normal;color:#bdbdbd;transform:scaleX(1.2125)">Plot</span>
<span id="t_pr" class="t" style="left:820.29px;top:487.68px;font-size:12px;line-height:12px;font-weight:normal;color:#bdbdbd;transform:scaleX(1.2025)">Peak rate</span>
<span id="t_prv" class="t" style="left:908.23px;top:487.68px;font-size:12px;line-height:12px;font-weight:normal;color:#ffffff;transform:scaleX(1.2217)">1/min</span>
<span id="t_ptv" class="t" style="left:980.03px;top:487.68px;font-size:12px;line-height:12px;font-weight:normal;color:#ffffff;transform:scaleX(1.1887)">10:49 AM</span>
<span id="t_plv" class="t" style="left:1060.57px;top:487.68px;font-size:12px;line-height:12px;font-weight:normal;color:#ffffff;transform:scaleX(1.1803)">Strike</span>
<span id="t_tg" class="t" style="left:821.37px;top:517.38px;font-size:12px;line-height:12px;font-weight:normal;color:#bdbdbd;transform:scaleX(1.1988)">Trend graph</span>
<span id="t_tgv" class="t" style="left:908.16px;top:517.38px;font-size:12px;line-height:12px;font-weight:normal;color:#ffffff;transform:scaleX(1.1624)">60 min</span>
<span id="t_y30" class="t" style="left:1092.36px;top:537.38px;font-size:11.5px;line-height:11.5px;font-weight:normal;color:#cccccc;transform:scaleX(1.0496)">30</span>
<span id="t_y20" class="t" style="left:1092.42px;top:615.38px;font-size:11.5px;line-height:11.5px;font-weight:normal;color:#cccccc;transform:scaleX(1.0450)">20</span>
<span id="t_y10" class="t" style="left:1091.48px;top:693.68px;font-size:11.5px;line-height:11.5px;font-weight:normal;color:#cccccc;transform:scaleX(1.1187)">10</span>
<span id="t_x60" class="t" style="left:820.17px;top:783.28px;font-size:11.5px;line-height:11.5px;font-weight:normal;color:#cccccc;transform:scaleX(1.0061)">60</span>
<span id="t_x50" class="t" style="left:864.41px;top:783.28px;font-size:11.5px;line-height:11.5px;font-weight:normal;color:#cccccc;transform:scaleX(1.0155)">50</span>
<span id="t_x40" class="t" style="left:908.43px;top:783.28px;font-size:11.5px;line-height:11.5px;font-weight:normal;color:#cccccc;transform:scaleX(0.9929)">40</span>
<span id="t_x30" class="t" style="left:952.89px;top:783.28px;font-size:11.5px;line-height:11.5px;font-weight:normal;color:#cccccc;transform:scaleX(1.0096)">30</span>
<span id="t_x20" class="t" style="left:997.45px;top:783.28px;font-size:11.5px;line-height:11.5px;font-weight:normal;color:#cccccc;transform:scaleX(1.0058)">20</span>
<span id="t_x10" class="t" style="left:1041.54px;top:783.28px;font-size:11.5px;line-height:11.5px;font-weight:normal;color:#cccccc;transform:scaleX(1.0791)">10</span>
<span id="t_x0" class="t" style="left:1087.49px;top:783.28px;font-size:11.5px;line-height:11.5px;font-weight:normal;color:#cccccc;transform:scaleX(1.0177)">0</span>
<span id="t_xm" class="t" style="left:1099.94px;top:783.28px;font-size:11.5px;line-height:11.5px;font-weight:normal;color:#cccccc;transform:scaleX(0.9452)">min</span>
<span id="t_lg1" class="t" style="left:13.16px;top:764.13px;font-size:9.2px;line-height:9.2px;font-weight:normal;color:#ffffff;transform:scaleX(1.0048)">Symbols</span>
<span id="t_lg2" class="t" style="left:52.47px;top:764.13px;font-size:9.2px;line-height:9.2px;font-weight:normal;color:#ffffff;transform:scaleX(1.0503)">-CG</span>
<span id="t_lg3" class="t" style="left:77.43px;top:764.13px;font-size:9.2px;line-height:9.2px;font-weight:normal;color:#ffffff;transform:scaleX(1.2274)">-IC</span>
<span id="t_lg4" class="t" style="left:98.82px;top:764.13px;font-size:9.2px;line-height:9.2px;font-weight:normal;color:#ffffff;transform:scaleX(1.1234)">+CG</span>
<span id="t_lg5" class="t" style="left:123.39px;top:764.13px;font-size:9.2px;line-height:9.2px;font-weight:normal;color:#ffffff;transform:scaleX(1.2655)">+IC</span>
<span id="t_lg6" class="t" style="left:152.67px;top:764.13px;font-size:9.2px;line-height:9.2px;font-weight:normal;color:#ffffff;transform:scaleX(0.9955)">Strike age color codes</span>
<span id="t_lg7" class="t" style="left:13.32px;top:776.93px;font-size:9.2px;line-height:9.2px;font-weight:normal;color:#ffffff;transform:scaleX(0.9595)">Recent</span>
<span id="t_lg8" class="t" style="left:13.36px;top:789.53px;font-size:9.2px;line-height:9.2px;font-weight:normal;color:#ffffff;transform:scaleX(1.0356)">Old</span>
<span id="t_a15" class="t" style="left:151.96px;top:776.93px;font-size:9.2px;line-height:9.2px;font-weight:normal;color:#f2d400;transform:scaleX(1.1572)">15+</span>
<span id="t_a30" class="t" style="left:187.17px;top:776.93px;font-size:9.2px;line-height:9.2px;font-weight:normal;color:#e6a800;transform:scaleX(1.1098)">30+</span>
<span id="t_a45" class="t" style="left:221.89px;top:776.93px;font-size:9.2px;line-height:9.2px;font-weight:normal;color:#e89200;transform:scaleX(1.1463)">45+</span>
<span id="t_a60" class="t" style="left:152.20px;top:789.53px;font-size:9.2px;line-height:9.2px;font-weight:normal;color:#d9730d;transform:scaleX(1.1453)">60+</span>
<span id="t_a75" class="t" style="left:187.17px;top:789.53px;font-size:9.2px;line-height:9.2px;font-weight:normal;color:#e8600c;transform:scaleX(1.1099)">75+</span>
<span id="t_a90" class="t" style="left:221.95px;top:789.53px;font-size:9.2px;line-height:9.2px;font-weight:normal;color:#e83200;transform:scaleX(1.1425)">90+</span>
<span id="t_cpr" class="t" style="left:688.79px;top:795.24px;font-size:9.3px;line-height:9.3px;font-weight:normal;color:#ffffff;transform:scaleX(1.0124)">©2005 Astrogenic Systems</span>
</body></html>
